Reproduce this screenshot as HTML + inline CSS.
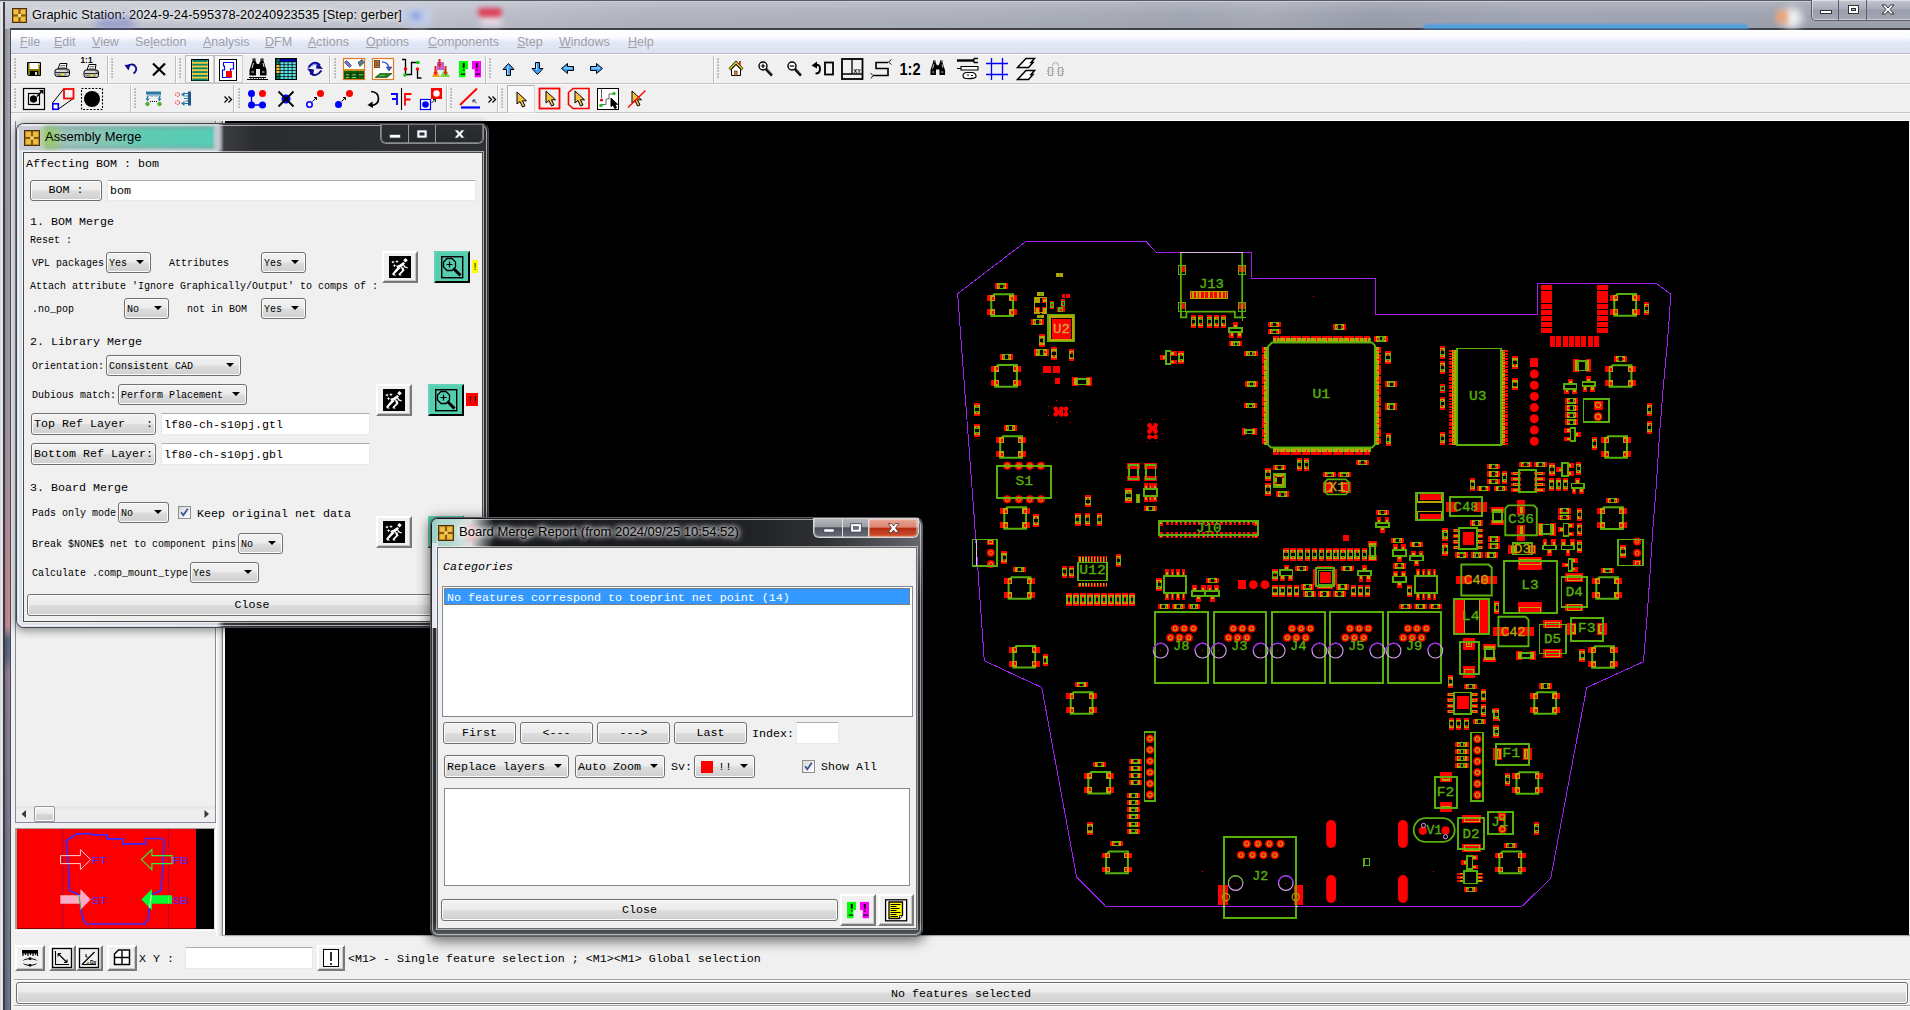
<!DOCTYPE html>
<html><head><meta charset="utf-8"><title>Graphic Station</title>
<style>
*{box-sizing:content-box;margin:0;padding:0}
html,body{width:1910px;height:1010px;overflow:hidden;background:#f0f0f0;font-family:"Liberation Mono",monospace;}
body{position:relative}
.t{position:absolute;white-space:pre;line-height:16px;height:16px;color:#000}
.m{font-family:"Liberation Mono",monospace;font-size:11.667px}
.s{font-family:"Liberation Mono",monospace;font-size:10px}
.ss{font-family:"Liberation Sans",sans-serif;font-size:12px}
.btn{border:1px solid #707070;border-radius:3px;background:linear-gradient(#f2f2f2 0%,#ebebeb 48%,#dddddd 52%,#cfcfcf 100%);box-shadow:inset 0 0 0 1px #fcfcfc;overflow:hidden}
.inp{border:1px solid #e3e9ef;border-top-color:#abadb3;background:#fff;border-radius:1px}
.chk{border:1px solid #8e8f8f;background:linear-gradient(135deg,#d7d7d7,#fff)}
.arr{position:absolute;right:6px;width:0;height:0;border-left:4px solid transparent;border-right:4px solid transparent;border-top:4px solid #000}
.raised{border:2px solid;border-color:#fff #7a7a7a #7a7a7a #fff;box-shadow:inset -1px -1px 0 #c8c8c8}
.abs{position:absolute}
</style></head>
<body>
<div class="" style="position:absolute;left:225px;top:121px;width:1684px;height:814px;background:#000"></div>
<svg class="abs" style="left:225px;top:121px" width="1684" height="814" viewBox="225 121 1684 814" font-family="Liberation Mono,monospace" shape-rendering="crispEdges"><polygon shape-rendering="crispEdges" points="1026.3,241.2 1145.8,241.2 1156.4,252.6 1251.7,252.6 1251.7,278.2 1375.6,278.2 1375.6,314.6 1537.5,314.6 1537.5,283.4 1656.3,283.4 1670.7,294.1 1669.5,314.9 1667.3,343.5 1663.6,383 1659.2,438.7 1656.3,485.6 1652.6,532 1650.4,568.6 1646.8,620 1643.5,661.7 1586.7,687.6 1571,770 1550.7,878.5 1521.9,906.4 1105.7,906.4 1076.6,877 1041.8,687.5 984.3,660.8 973.5,507.3 962.5,360 958.2,301 957.5,293.8" fill="none" stroke="#a020f0" stroke-width="1"/><rect x="987" y="295.3" width="8" height="5.6" fill="#ff0000"/><rect x="987" y="309.3" width="8" height="5.6" fill="#ff0000"/><rect x="1009.4" y="295.3" width="8" height="5.6" fill="#ff0000"/><rect x="1009.4" y="309.3" width="8" height="5.6" fill="#ff0000"/><path shape-rendering="geometricPrecision" d="M991.3 297.3 L994.3 294.3 H1013.1 V315.9 H991.3 Z" fill="none" stroke="#58b00a" stroke-width="2"/><rect x="990.2" y="295.3" width="4.8" height="5.6" fill="#b8a400"/><rect x="991.9" y="296.6" width="2" height="3" fill="#ff0000"/><rect x="990.2" y="309.3" width="4.8" height="5.6" fill="#b8a400"/><rect x="991.9" y="310.6" width="2" height="3" fill="#ff0000"/><rect x="1009.4" y="295.3" width="4.8" height="5.6" fill="#b8a400"/><rect x="1010.5" y="296.6" width="2" height="3" fill="#ff0000"/><rect x="1009.4" y="309.3" width="4.8" height="5.6" fill="#b8a400"/><rect x="1010.5" y="310.6" width="2" height="3" fill="#ff0000"/><rect x="995" y="283.4" width="12.8" height="5.6" fill="#ff0000"/><rect x="997" y="283.4" width="8.8" height="5.6" fill="#b8a400"/><rect x="998.8" y="283.4" width="5.2" height="5.6" fill="#58b00a"/><rect x="1000.1" y="284.6" width="2.6" height="3.2" fill="#000"/><rect x="998.2" y="285.2" width="1.2" height="2" fill="#ff0000"/><rect x="1003.4" y="285.2" width="1.2" height="2" fill="#ff0000"/><rect x="1056" y="273" width="7" height="4" fill="#b8a400"/><rect x="1059" y="273" width="1.2" height="4" fill="#58b00a"/><rect x="1037" y="292.2" width="7" height="3.5" fill="#b8a400"/><rect x="1039.5" y="292.2" width="2" height="3.5" fill="#58b00a"/><rect x="1034" y="297" width="13" height="16.6" fill="#b8a400"/><rect x="1034.5" y="297.5" width="5" height="5.8" fill="#b8a400"/><rect x="1042.4" y="297.5" width="4.4" height="5.8" fill="#ff0000"/><rect x="1043.4" y="298.5" width="2.4" height="3.8" fill="#b8a400"/><rect x="1034.5" y="307.3" width="5" height="5.7" fill="#ff0000"/><rect x="1035.5" y="308.3" width="3" height="3.7" fill="#b8a400"/><rect x="1042.4" y="307.3" width="4.4" height="5.7" fill="#ff0000"/><rect x="1043.4" y="308.3" width="2.4" height="3.7" fill="#b8a400"/><rect x="1039.5" y="297" width="2.9" height="16.6" fill="#000"/><rect x="1034" y="303.3" width="13" height="4" fill="#000"/><rect x="1034.8" y="297.8" width="11.4" height="15" fill="none" stroke="#b8a400" stroke-width="1.2"/><rect x="1036.5" y="314.5" width="7.2" height="3.2" fill="#b8a400"/><rect x="1039" y="314.5" width="2" height="3.2" fill="#58b00a"/><rect x="1031" y="319" width="12.7" height="6" fill="#ff0000"/><rect x="1033" y="319" width="8.7" height="6" fill="#b8a400"/><rect x="1034.8" y="319" width="5.2" height="6" fill="#58b00a"/><rect x="1036" y="320.2" width="2.6" height="3.6" fill="#000"/><rect x="1034.2" y="321" width="1.2" height="2" fill="#ff0000"/><rect x="1039.3" y="321" width="1.2" height="2" fill="#ff0000"/><rect x="1061.9" y="294" width="3.1" height="3.9" fill="#ff0000"/><rect x="1065.9" y="294" width="4.1" height="3.9" fill="#ff0000"/><rect x="1050" y="301" width="3.7" height="8" fill="#ff0000"/><rect x="1050" y="303" width="3.7" height="4" fill="#b8a400"/><rect x="1050" y="302.4" width="3.7" height="5.2" fill="#58b00a"/><rect x="1051.2" y="303.7" width="1.3" height="2.6" fill="#000"/><rect x="1050.8" y="304.2" width="2" height="1.2" fill="#ff0000"/><rect x="1050.8" y="304.6" width="2" height="1.2" fill="#ff0000"/><rect x="1061.3" y="299.4" width="3.7" height="7.6" fill="#ff0000"/><rect x="1061.3" y="301.4" width="3.7" height="3.6" fill="#b8a400"/><rect x="1061.3" y="300.6" width="3.7" height="5.2" fill="#58b00a"/><rect x="1062.5" y="301.9" width="1.3" height="2.6" fill="#000"/><rect x="1062.2" y="302.6" width="2" height="1.2" fill="#ff0000"/><rect x="1062.2" y="302.6" width="2" height="1.2" fill="#ff0000"/><rect x="1057" y="307.3" width="7.7" height="4.4" fill="#ff0000"/><rect x="1059" y="307.3" width="3.7" height="4.4" fill="#b8a400"/><rect x="1058.2" y="307.3" width="5.2" height="4.4" fill="#58b00a"/><rect x="1059.5" y="308.5" width="2.6" height="2" fill="#000"/><rect x="1060.2" y="308.5" width="1.2" height="2" fill="#ff0000"/><rect x="1060.3" y="308.5" width="1.2" height="2" fill="#ff0000"/><rect x="1047.2" y="314.2" width="27.6" height="27.7" fill="#b8a400"/><rect x="1049.6" y="316.6" width="22.8" height="22.9" fill="#000"/><rect x="1051.6" y="318.6" width="19.7" height="20.1" fill="#ff0000"/><rect x="1050.6" y="317.6" width="21.6" height="22" fill="none" stroke="#b8a400" stroke-width="1"/><rect x="1047.8" y="314.8" width="26.4" height="26.5" fill="none" stroke="#58b00a" stroke-width="1.4"/><text x="1053" y="332.5" font-size="13" fill="#d8a040" stroke="#d8a040" stroke-width="0.35" textLength="17" lengthAdjust="spacingAndGlyphs">U2</text><rect x="1039" y="334.3" width="5.5" height="12.3" fill="#ff0000"/><rect x="1039" y="336.3" width="5.5" height="8.3" fill="#b8a400"/><rect x="1039" y="337.9" width="5.5" height="5.2" fill="#58b00a"/><rect x="1040.2" y="339.2" width="3.1" height="2.6" fill="#000"/><rect x="1040.8" y="337.5" width="2" height="1.2" fill="#ff0000"/><rect x="1040.8" y="342.2" width="2" height="1.2" fill="#ff0000"/><rect x="1034" y="348.8" width="14.7" height="7.2" fill="#ff0000"/><rect x="1036" y="348.8" width="10.7" height="7.2" fill="#b8a400"/><rect x="1038.8" y="348.8" width="5.2" height="7.2" fill="#58b00a"/><rect x="1040" y="350" width="2.6" height="4.8" fill="#000"/><rect x="1037.2" y="351.4" width="1.2" height="2" fill="#ff0000"/><rect x="1044.3" y="351.4" width="1.2" height="2" fill="#ff0000"/><rect x="1051" y="347.3" width="5.9" height="12.4" fill="#ff0000"/><rect x="1051" y="349.3" width="5.9" height="8.4" fill="#b8a400"/><rect x="1051" y="350.9" width="5.9" height="5.2" fill="#58b00a"/><rect x="1052.2" y="352.2" width="3.5" height="2.6" fill="#000"/><rect x="1053" y="350.5" width="2" height="1.2" fill="#ff0000"/><rect x="1053" y="355.3" width="2" height="1.2" fill="#ff0000"/><rect x="1068.8" y="349.2" width="5.4" height="12.2" fill="#ff0000"/><rect x="1068.8" y="351.2" width="5.4" height="8.2" fill="#b8a400"/><rect x="1068.8" y="352.7" width="5.4" height="5.2" fill="#58b00a"/><rect x="1070" y="354" width="3" height="2.6" fill="#000"/><rect x="1070.5" y="352.4" width="2" height="1.2" fill="#ff0000"/><rect x="1070.5" y="357" width="2" height="1.2" fill="#ff0000"/><rect x="1000" y="353.8" width="12.9" height="5.9" fill="#ff0000"/><rect x="1002" y="353.8" width="8.9" height="5.9" fill="#b8a400"/><rect x="1003.9" y="353.8" width="5.2" height="5.9" fill="#58b00a"/><rect x="1005.2" y="355" width="2.6" height="3.5" fill="#000"/><rect x="1003.2" y="355.8" width="1.2" height="2" fill="#ff0000"/><rect x="1008.5" y="355.8" width="1.2" height="2" fill="#ff0000"/><rect x="1160.2" y="355.3" width="6" height="4.6" fill="#ff0000"/><rect x="1162.8" y="356.4" width="2.9" height="2.4" fill="#b8a400"/><rect x="1170.5" y="351.1" width="6" height="4.6" fill="#ff0000"/><rect x="1171" y="352.2" width="3.1" height="2.4" fill="#b8a400"/><rect x="1170.5" y="359.8" width="6" height="4.6" fill="#ff0000"/><rect x="1171" y="360.9" width="3.1" height="2.4" fill="#b8a400"/><rect x="1166.1" y="350.9" width="4.5" height="12.9" fill="none" stroke="#58b00a" stroke-width="1.7"/><rect x="1178.4" y="351.1" width="5.6" height="12.9" fill="#ff0000"/><rect x="1178.4" y="353.1" width="5.6" height="8.9" fill="#b8a400"/><rect x="1178.4" y="354.9" width="5.6" height="5.2" fill="#58b00a"/><rect x="1179.6" y="356.2" width="3.2" height="2.6" fill="#000"/><rect x="1180.2" y="354.3" width="2" height="1.2" fill="#ff0000"/><rect x="1180.2" y="359.6" width="2" height="1.2" fill="#ff0000"/><rect x="1179.6" y="266.3" width="4.9" height="5.5" fill="#ff0000"/><rect x="1178.9" y="265.8" width="6.3" height="8.3" fill="none" stroke="#58b00a" stroke-width="1"/><rect x="1179.6" y="303.4" width="4.9" height="5.8" fill="#ff0000"/><rect x="1178.9" y="302.9" width="6.3" height="8.6" fill="none" stroke="#58b00a" stroke-width="1"/><rect x="1239" y="266.3" width="5.6" height="5.5" fill="#ff0000"/><rect x="1238.3" y="265.8" width="7" height="8.3" fill="none" stroke="#58b00a" stroke-width="1"/><rect x="1239" y="303.4" width="5.6" height="5.8" fill="#ff0000"/><rect x="1238.3" y="302.9" width="7" height="8.6" fill="none" stroke="#58b00a" stroke-width="1"/><path shape-rendering="geometricPrecision" d="M1180.9 252.9 V317.4 H1186.4 V311.7 H1234.8 V317.4 H1242.2 V252.9" fill="none" stroke="#58b00a" stroke-width="1.8"/><rect x="1180" y="252" width="63" height="1.4" fill="#e8b0e8"/><path d="M1242.2 317.4 V321 M1242.2 317.4 H1246" fill="none" stroke="#58b00a" stroke-width="1"/><text x="1198.9" y="288" font-size="12.5" fill="#58b00a" stroke="#58b00a" stroke-width="0.35" textLength="25" lengthAdjust="spacingAndGlyphs">J13</text><rect x="1190.1" y="291.2" width="37.8" height="7.6" fill="#ff0000"/><rect x="1192.4" y="291.2" width="1.2" height="7.6" fill="#b8a400"/><rect x="1196.4" y="291.2" width="1.2" height="7.6" fill="#b8a400"/><rect x="1199.4" y="291.2" width="1.2" height="7.6" fill="#b8a400"/><rect x="1203.9" y="291.2" width="1.2" height="7.6" fill="#b8a400"/><rect x="1208.4" y="291.2" width="1.2" height="7.6" fill="#b8a400"/><rect x="1212.9" y="291.2" width="1.2" height="7.6" fill="#b8a400"/><rect x="1217.4" y="291.2" width="1.2" height="7.6" fill="#b8a400"/><rect x="1221.4" y="291.2" width="1.2" height="7.6" fill="#b8a400"/><rect x="1224.7" y="291.2" width="1.2" height="7.6" fill="#b8a400"/><rect x="1190.4" y="291.6" width="37.2" height="6.8" fill="none" stroke="#b8a400" stroke-width="1"/><rect x="1190.8" y="314.9" width="5.2" height="12.9" fill="#ff0000"/><rect x="1190.8" y="316.9" width="5.2" height="8.9" fill="#b8a400"/><rect x="1190.8" y="318.8" width="5.2" height="5.2" fill="#58b00a"/><rect x="1192" y="320.1" width="2.8" height="2.6" fill="#000"/><rect x="1192.4" y="318.1" width="2" height="1.2" fill="#ff0000"/><rect x="1192.4" y="323.4" width="2" height="1.2" fill="#ff0000"/><rect x="1198.2" y="314.9" width="4.8" height="12.9" fill="#ff0000"/><rect x="1198.2" y="316.9" width="4.8" height="8.9" fill="#b8a400"/><rect x="1198.2" y="318.8" width="4.8" height="5.2" fill="#58b00a"/><rect x="1199.4" y="320.1" width="2.4" height="2.6" fill="#000"/><rect x="1199.6" y="318.1" width="2" height="1.2" fill="#ff0000"/><rect x="1199.6" y="323.4" width="2" height="1.2" fill="#ff0000"/><rect x="1207" y="314.9" width="4.8" height="12.9" fill="#ff0000"/><rect x="1207" y="316.9" width="4.8" height="8.9" fill="#b8a400"/><rect x="1207" y="318.8" width="4.8" height="5.2" fill="#58b00a"/><rect x="1208.2" y="320.1" width="2.4" height="2.6" fill="#000"/><rect x="1208.4" y="318.1" width="2" height="1.2" fill="#ff0000"/><rect x="1208.4" y="323.4" width="2" height="1.2" fill="#ff0000"/><rect x="1214" y="314.9" width="5" height="12.9" fill="#ff0000"/><rect x="1214" y="316.9" width="5" height="8.9" fill="#b8a400"/><rect x="1214" y="318.8" width="5" height="5.2" fill="#58b00a"/><rect x="1215.2" y="320.1" width="2.6" height="2.6" fill="#000"/><rect x="1215.5" y="318.1" width="2" height="1.2" fill="#ff0000"/><rect x="1215.5" y="323.4" width="2" height="1.2" fill="#ff0000"/><rect x="1221.2" y="314.9" width="4.8" height="12.9" fill="#ff0000"/><rect x="1221.2" y="316.9" width="4.8" height="8.9" fill="#b8a400"/><rect x="1221.2" y="318.8" width="4.8" height="5.2" fill="#58b00a"/><rect x="1222.4" y="320.1" width="2.4" height="2.6" fill="#000"/><rect x="1222.6" y="318.1" width="2" height="1.2" fill="#ff0000"/><rect x="1222.6" y="323.4" width="2" height="1.2" fill="#ff0000"/><rect x="1233.2" y="322.2" width="4.6" height="6.2" fill="#ff0000"/><rect x="1234.3" y="325" width="2.4" height="2.9" fill="#b8a400"/><rect x="1229.4" y="332.2" width="4.6" height="6.2" fill="#ff0000"/><rect x="1230.5" y="332.7" width="2.4" height="3.1" fill="#b8a400"/><rect x="1237.3" y="332.2" width="4.6" height="6.2" fill="#ff0000"/><rect x="1238.4" y="332.7" width="2.4" height="3.1" fill="#b8a400"/><rect x="1229.1" y="328.3" width="12.9" height="4" fill="none" stroke="#58b00a" stroke-width="1.7"/><rect x="1229.4" y="341.3" width="12.8" height="4.7" fill="#ff0000"/><rect x="1231.4" y="341.3" width="8.8" height="4.7" fill="#b8a400"/><rect x="1233.2" y="341.3" width="5.2" height="4.7" fill="#58b00a"/><rect x="1234.5" y="342.5" width="2.6" height="2.3" fill="#000"/><rect x="1232.6" y="342.6" width="1.2" height="2" fill="#ff0000"/><rect x="1237.8" y="342.6" width="1.2" height="2" fill="#ff0000"/><rect x="1268.1" y="322.2" width="12.6" height="4.8" fill="#ff0000"/><rect x="1270.1" y="322.2" width="8.6" height="4.8" fill="#b8a400"/><rect x="1271.8" y="322.2" width="5.2" height="4.8" fill="#58b00a"/><rect x="1273.1" y="323.4" width="2.6" height="2.4" fill="#000"/><rect x="1271.3" y="323.6" width="1.2" height="2" fill="#ff0000"/><rect x="1276.3" y="323.6" width="1.2" height="2" fill="#ff0000"/><rect x="1268.1" y="329.3" width="12.6" height="4.7" fill="#ff0000"/><rect x="1270.1" y="329.3" width="8.6" height="4.7" fill="#b8a400"/><rect x="1271.8" y="329.3" width="5.2" height="4.7" fill="#58b00a"/><rect x="1273.1" y="330.5" width="2.6" height="2.3" fill="#000"/><rect x="1271.3" y="330.6" width="1.2" height="2" fill="#ff0000"/><rect x="1276.3" y="330.6" width="1.2" height="2" fill="#ff0000"/><rect x="1333" y="324" width="12.8" height="5.9" fill="#ff0000"/><rect x="1335" y="324" width="8.8" height="5.9" fill="#b8a400"/><rect x="1336.8" y="324" width="5.2" height="5.9" fill="#58b00a"/><rect x="1338.1" y="325.2" width="2.6" height="3.5" fill="#000"/><rect x="1336.2" y="325.9" width="1.2" height="2" fill="#ff0000"/><rect x="1341.4" y="325.9" width="1.2" height="2" fill="#ff0000"/><rect x="1374.1" y="336.2" width="13.9" height="5.4" fill="#ff0000"/><rect x="1376.1" y="336.2" width="9.9" height="5.4" fill="#b8a400"/><rect x="1378.5" y="336.2" width="5.2" height="5.4" fill="#58b00a"/><rect x="1379.8" y="337.4" width="2.6" height="3" fill="#000"/><rect x="1377.3" y="337.9" width="1.2" height="2" fill="#ff0000"/><rect x="1383.6" y="337.9" width="1.2" height="2" fill="#ff0000"/><rect x="1244.4" y="351.1" width="13.4" height="5" fill="#ff0000"/><rect x="1246.4" y="351.1" width="9.4" height="5" fill="#b8a400"/><rect x="1248.5" y="351.1" width="5.2" height="5" fill="#58b00a"/><rect x="1249.8" y="352.3" width="2.6" height="2.6" fill="#000"/><rect x="1247.6" y="352.6" width="1.2" height="2" fill="#ff0000"/><rect x="1253.4" y="352.6" width="1.2" height="2" fill="#ff0000"/><rect x="1385.1" y="351.1" width="5.9" height="12.9" fill="#ff0000"/><rect x="1385.1" y="353.1" width="5.9" height="8.9" fill="#b8a400"/><rect x="1385.1" y="354.9" width="5.9" height="5.2" fill="#58b00a"/><rect x="1386.3" y="356.2" width="3.5" height="2.6" fill="#000"/><rect x="1387" y="354.3" width="2" height="1.2" fill="#ff0000"/><rect x="1387" y="359.6" width="2" height="1.2" fill="#ff0000"/><rect x="1312.8" y="296.1" width="1" height="1" fill="#ff0000"/><rect x="1245" y="381.4" width="13" height="5.2" fill="#ff0000"/><rect x="1247" y="381.4" width="9" height="5.2" fill="#b8a400"/><rect x="1248.9" y="381.4" width="5.2" height="5.2" fill="#58b00a"/><rect x="1250.2" y="382.6" width="2.6" height="2.8" fill="#000"/><rect x="1248.2" y="383" width="1.2" height="2" fill="#ff0000"/><rect x="1253.6" y="383" width="1.2" height="2" fill="#ff0000"/><rect x="1244" y="403.3" width="13" height="4.9" fill="#ff0000"/><rect x="1246" y="403.3" width="9" height="4.9" fill="#b8a400"/><rect x="1247.9" y="403.3" width="5.2" height="4.9" fill="#58b00a"/><rect x="1249.2" y="404.5" width="2.6" height="2.5" fill="#000"/><rect x="1247.2" y="404.8" width="1.2" height="2" fill="#ff0000"/><rect x="1252.6" y="404.8" width="1.2" height="2" fill="#ff0000"/><rect x="1242" y="428" width="14.7" height="7" fill="#ff0000"/><rect x="1243.5" y="429" width="2.9" height="5" fill="#b8a400"/><rect x="1252.3" y="429" width="2.9" height="5" fill="#b8a400"/><rect x="1246.4" y="428" width="5.9" height="7" fill="#000"/><rect x="1246.1" y="429.7" width="6.4" height="3.6" fill="none" stroke="#58b00a" stroke-width="1.6"/><rect x="1385" y="381.4" width="12.3" height="6" fill="#ff0000"/><rect x="1387" y="381.4" width="8.3" height="6" fill="#b8a400"/><rect x="1388.6" y="381.4" width="5.2" height="6" fill="#58b00a"/><rect x="1389.9" y="382.6" width="2.6" height="3.6" fill="#000"/><rect x="1388.2" y="383.4" width="1.2" height="2" fill="#ff0000"/><rect x="1392.9" y="383.4" width="1.2" height="2" fill="#ff0000"/><rect x="1385" y="403.3" width="12.3" height="6.4" fill="#ff0000"/><rect x="1387" y="403.3" width="8.3" height="6.4" fill="#b8a400"/><rect x="1388.6" y="403.3" width="5.2" height="6.4" fill="#58b00a"/><rect x="1389.9" y="404.5" width="2.6" height="4" fill="#000"/><rect x="1388.2" y="405.5" width="1.2" height="2" fill="#ff0000"/><rect x="1392.9" y="405.5" width="1.2" height="2" fill="#ff0000"/><rect x="1385.7" y="433.2" width="4.9" height="12.8" fill="#ff0000"/><rect x="1385.7" y="435.2" width="4.9" height="8.8" fill="#b8a400"/><rect x="1385.7" y="437" width="4.9" height="5.2" fill="#58b00a"/><rect x="1386.9" y="438.3" width="2.5" height="2.6" fill="#000"/><rect x="1387.2" y="436.4" width="2" height="1.2" fill="#ff0000"/><rect x="1387.2" y="441.6" width="2" height="1.2" fill="#ff0000"/><rect x="1273" y="336.2" width="6" height="2.1" fill="#ff0000"/><rect x="1273" y="338.3" width="6" height="4.3" fill="#b8a400"/><rect x="1275.5" y="338.3" width="1" height="2.3" fill="#ff0000"/><rect x="1273" y="452.4" width="6" height="2.2" fill="#ff0000"/><rect x="1273" y="447.6" width="6" height="4.8" fill="#b8a400"/><rect x="1275.5" y="450" width="1" height="2.4" fill="#ff0000"/><rect x="1279" y="338.3" width="1.2" height="4.3" fill="#58b00a"/><rect x="1279" y="447.6" width="1.2" height="4.8" fill="#58b00a"/><rect x="1261.6" y="347" width="2.2" height="6" fill="#ff0000"/><rect x="1263.8" y="347" width="4.2" height="6" fill="#b8a400"/><rect x="1263.8" y="349.5" width="2.4" height="1" fill="#ff0000"/><rect x="1379.2" y="347" width="2.2" height="6" fill="#ff0000"/><rect x="1375" y="347" width="4.2" height="6" fill="#b8a400"/><rect x="1376.8" y="349.5" width="2.4" height="1" fill="#ff0000"/><rect x="1263.8" y="353" width="4.2" height="1.2" fill="#58b00a"/><rect x="1375" y="353" width="4.2" height="1.2" fill="#58b00a"/><rect x="1280.2" y="336.2" width="9.8" height="2.1" fill="#ff0000"/><rect x="1280.2" y="338.3" width="9.8" height="4.3" fill="#b8a400"/><rect x="1284.6" y="338.3" width="1" height="2.3" fill="#ff0000"/><rect x="1280.2" y="452.4" width="9.8" height="2.2" fill="#ff0000"/><rect x="1280.2" y="447.6" width="9.8" height="4.8" fill="#b8a400"/><rect x="1284.6" y="450" width="1" height="2.4" fill="#ff0000"/><rect x="1290" y="338.3" width="1.2" height="4.3" fill="#58b00a"/><rect x="1290" y="447.6" width="1.2" height="4.8" fill="#58b00a"/><rect x="1261.6" y="354.2" width="2.2" height="9.8" fill="#ff0000"/><rect x="1263.8" y="354.2" width="4.2" height="9.8" fill="#b8a400"/><rect x="1263.8" y="358.6" width="2.4" height="1" fill="#ff0000"/><rect x="1379.2" y="354.2" width="2.2" height="9.8" fill="#ff0000"/><rect x="1375" y="354.2" width="4.2" height="9.8" fill="#b8a400"/><rect x="1376.8" y="358.6" width="2.4" height="1" fill="#ff0000"/><rect x="1263.8" y="364" width="4.2" height="1.2" fill="#58b00a"/><rect x="1375" y="364" width="4.2" height="1.2" fill="#58b00a"/><rect x="1291.2" y="336.2" width="9.8" height="2.1" fill="#ff0000"/><rect x="1291.2" y="338.3" width="9.8" height="4.3" fill="#b8a400"/><rect x="1295.6" y="338.3" width="1" height="2.3" fill="#ff0000"/><rect x="1291.2" y="452.4" width="9.8" height="2.2" fill="#ff0000"/><rect x="1291.2" y="447.6" width="9.8" height="4.8" fill="#b8a400"/><rect x="1295.6" y="450" width="1" height="2.4" fill="#ff0000"/><rect x="1301" y="338.3" width="1.2" height="4.3" fill="#58b00a"/><rect x="1301" y="447.6" width="1.2" height="4.8" fill="#58b00a"/><rect x="1261.6" y="365.2" width="2.2" height="9.8" fill="#ff0000"/><rect x="1263.8" y="365.2" width="4.2" height="9.8" fill="#b8a400"/><rect x="1263.8" y="369.6" width="2.4" height="1" fill="#ff0000"/><rect x="1379.2" y="365.2" width="2.2" height="9.8" fill="#ff0000"/><rect x="1375" y="365.2" width="4.2" height="9.8" fill="#b8a400"/><rect x="1376.8" y="369.6" width="2.4" height="1" fill="#ff0000"/><rect x="1263.8" y="375" width="4.2" height="1.2" fill="#58b00a"/><rect x="1375" y="375" width="4.2" height="1.2" fill="#58b00a"/><rect x="1302.2" y="336.2" width="7.8" height="2.1" fill="#ff0000"/><rect x="1302.2" y="338.3" width="7.8" height="4.3" fill="#b8a400"/><rect x="1305.6" y="338.3" width="1" height="2.3" fill="#ff0000"/><rect x="1302.2" y="452.4" width="7.8" height="2.2" fill="#ff0000"/><rect x="1302.2" y="447.6" width="7.8" height="4.8" fill="#b8a400"/><rect x="1305.6" y="450" width="1" height="2.4" fill="#ff0000"/><rect x="1310" y="338.3" width="1.2" height="4.3" fill="#58b00a"/><rect x="1310" y="447.6" width="1.2" height="4.8" fill="#58b00a"/><rect x="1261.6" y="376.2" width="2.2" height="7.8" fill="#ff0000"/><rect x="1263.8" y="376.2" width="4.2" height="7.8" fill="#b8a400"/><rect x="1263.8" y="379.6" width="2.4" height="1" fill="#ff0000"/><rect x="1379.2" y="376.2" width="2.2" height="7.8" fill="#ff0000"/><rect x="1375" y="376.2" width="4.2" height="7.8" fill="#b8a400"/><rect x="1376.8" y="379.6" width="2.4" height="1" fill="#ff0000"/><rect x="1263.8" y="384" width="4.2" height="1.2" fill="#58b00a"/><rect x="1375" y="384" width="4.2" height="1.2" fill="#58b00a"/><rect x="1311.2" y="336.2" width="9.8" height="2.1" fill="#ff0000"/><rect x="1311.2" y="338.3" width="9.8" height="4.3" fill="#b8a400"/><rect x="1315.6" y="338.3" width="1" height="2.3" fill="#ff0000"/><rect x="1311.2" y="452.4" width="9.8" height="2.2" fill="#ff0000"/><rect x="1311.2" y="447.6" width="9.8" height="4.8" fill="#b8a400"/><rect x="1315.6" y="450" width="1" height="2.4" fill="#ff0000"/><rect x="1321" y="338.3" width="1.2" height="4.3" fill="#58b00a"/><rect x="1321" y="447.6" width="1.2" height="4.8" fill="#58b00a"/><rect x="1261.6" y="385.2" width="2.2" height="9.8" fill="#ff0000"/><rect x="1263.8" y="385.2" width="4.2" height="9.8" fill="#b8a400"/><rect x="1263.8" y="389.6" width="2.4" height="1" fill="#ff0000"/><rect x="1379.2" y="385.2" width="2.2" height="9.8" fill="#ff0000"/><rect x="1375" y="385.2" width="4.2" height="9.8" fill="#b8a400"/><rect x="1376.8" y="389.6" width="2.4" height="1" fill="#ff0000"/><rect x="1263.8" y="395" width="4.2" height="1.2" fill="#58b00a"/><rect x="1375" y="395" width="4.2" height="1.2" fill="#58b00a"/><rect x="1322.2" y="336.2" width="9.8" height="2.1" fill="#ff0000"/><rect x="1322.2" y="338.3" width="9.8" height="4.3" fill="#b8a400"/><rect x="1326.6" y="338.3" width="1" height="2.3" fill="#ff0000"/><rect x="1322.2" y="452.4" width="9.8" height="2.2" fill="#ff0000"/><rect x="1322.2" y="447.6" width="9.8" height="4.8" fill="#b8a400"/><rect x="1326.6" y="450" width="1" height="2.4" fill="#ff0000"/><rect x="1332" y="338.3" width="1.2" height="4.3" fill="#58b00a"/><rect x="1332" y="447.6" width="1.2" height="4.8" fill="#58b00a"/><rect x="1261.6" y="396.2" width="2.2" height="9.8" fill="#ff0000"/><rect x="1263.8" y="396.2" width="4.2" height="9.8" fill="#b8a400"/><rect x="1263.8" y="400.6" width="2.4" height="1" fill="#ff0000"/><rect x="1379.2" y="396.2" width="2.2" height="9.8" fill="#ff0000"/><rect x="1375" y="396.2" width="4.2" height="9.8" fill="#b8a400"/><rect x="1376.8" y="400.6" width="2.4" height="1" fill="#ff0000"/><rect x="1263.8" y="406" width="4.2" height="1.2" fill="#58b00a"/><rect x="1375" y="406" width="4.2" height="1.2" fill="#58b00a"/><rect x="1333.2" y="336.2" width="9.8" height="2.1" fill="#ff0000"/><rect x="1333.2" y="338.3" width="9.8" height="4.3" fill="#b8a400"/><rect x="1337.6" y="338.3" width="1" height="2.3" fill="#ff0000"/><rect x="1333.2" y="452.4" width="9.8" height="2.2" fill="#ff0000"/><rect x="1333.2" y="447.6" width="9.8" height="4.8" fill="#b8a400"/><rect x="1337.6" y="450" width="1" height="2.4" fill="#ff0000"/><rect x="1343" y="338.3" width="1.2" height="4.3" fill="#58b00a"/><rect x="1343" y="447.6" width="1.2" height="4.8" fill="#58b00a"/><rect x="1261.6" y="407.2" width="2.2" height="9.8" fill="#ff0000"/><rect x="1263.8" y="407.2" width="4.2" height="9.8" fill="#b8a400"/><rect x="1263.8" y="411.6" width="2.4" height="1" fill="#ff0000"/><rect x="1379.2" y="407.2" width="2.2" height="9.8" fill="#ff0000"/><rect x="1375" y="407.2" width="4.2" height="9.8" fill="#b8a400"/><rect x="1376.8" y="411.6" width="2.4" height="1" fill="#ff0000"/><rect x="1263.8" y="417" width="4.2" height="1.2" fill="#58b00a"/><rect x="1375" y="417" width="4.2" height="1.2" fill="#58b00a"/><rect x="1344.2" y="336.2" width="9.8" height="2.1" fill="#ff0000"/><rect x="1344.2" y="338.3" width="9.8" height="4.3" fill="#b8a400"/><rect x="1348.6" y="338.3" width="1" height="2.3" fill="#ff0000"/><rect x="1344.2" y="452.4" width="9.8" height="2.2" fill="#ff0000"/><rect x="1344.2" y="447.6" width="9.8" height="4.8" fill="#b8a400"/><rect x="1348.6" y="450" width="1" height="2.4" fill="#ff0000"/><rect x="1354" y="338.3" width="1.2" height="4.3" fill="#58b00a"/><rect x="1354" y="447.6" width="1.2" height="4.8" fill="#58b00a"/><rect x="1261.6" y="418.2" width="2.2" height="9.8" fill="#ff0000"/><rect x="1263.8" y="418.2" width="4.2" height="9.8" fill="#b8a400"/><rect x="1263.8" y="422.6" width="2.4" height="1" fill="#ff0000"/><rect x="1379.2" y="418.2" width="2.2" height="9.8" fill="#ff0000"/><rect x="1375" y="418.2" width="4.2" height="9.8" fill="#b8a400"/><rect x="1376.8" y="422.6" width="2.4" height="1" fill="#ff0000"/><rect x="1263.8" y="428" width="4.2" height="1.2" fill="#58b00a"/><rect x="1375" y="428" width="4.2" height="1.2" fill="#58b00a"/><rect x="1355.2" y="336.2" width="7.8" height="2.1" fill="#ff0000"/><rect x="1355.2" y="338.3" width="7.8" height="4.3" fill="#b8a400"/><rect x="1358.6" y="338.3" width="1" height="2.3" fill="#ff0000"/><rect x="1355.2" y="452.4" width="7.8" height="2.2" fill="#ff0000"/><rect x="1355.2" y="447.6" width="7.8" height="4.8" fill="#b8a400"/><rect x="1358.6" y="450" width="1" height="2.4" fill="#ff0000"/><rect x="1363" y="338.3" width="1.2" height="4.3" fill="#58b00a"/><rect x="1363" y="447.6" width="1.2" height="4.8" fill="#58b00a"/><rect x="1261.6" y="429.2" width="2.2" height="7.8" fill="#ff0000"/><rect x="1263.8" y="429.2" width="4.2" height="7.8" fill="#b8a400"/><rect x="1263.8" y="432.6" width="2.4" height="1" fill="#ff0000"/><rect x="1379.2" y="429.2" width="2.2" height="7.8" fill="#ff0000"/><rect x="1375" y="429.2" width="4.2" height="7.8" fill="#b8a400"/><rect x="1376.8" y="432.6" width="2.4" height="1" fill="#ff0000"/><rect x="1263.8" y="437" width="4.2" height="1.2" fill="#58b00a"/><rect x="1375" y="437" width="4.2" height="1.2" fill="#58b00a"/><rect x="1364.2" y="336.2" width="5.6" height="2.1" fill="#ff0000"/><rect x="1364.2" y="338.3" width="5.6" height="4.3" fill="#b8a400"/><rect x="1366.5" y="338.3" width="1" height="2.3" fill="#ff0000"/><rect x="1364.2" y="452.4" width="5.6" height="2.2" fill="#ff0000"/><rect x="1364.2" y="447.6" width="5.6" height="4.8" fill="#b8a400"/><rect x="1366.5" y="450" width="1" height="2.4" fill="#ff0000"/><rect x="1369.8" y="338.3" width="1.2" height="4.3" fill="#58b00a"/><rect x="1369.8" y="447.6" width="1.2" height="4.8" fill="#58b00a"/><rect x="1261.6" y="438.2" width="2.2" height="5.6" fill="#ff0000"/><rect x="1263.8" y="438.2" width="4.2" height="5.6" fill="#b8a400"/><rect x="1263.8" y="440.5" width="2.4" height="1" fill="#ff0000"/><rect x="1379.2" y="438.2" width="2.2" height="5.6" fill="#ff0000"/><rect x="1375" y="438.2" width="4.2" height="5.6" fill="#b8a400"/><rect x="1376.8" y="440.5" width="2.4" height="1" fill="#ff0000"/><rect x="1263.8" y="443.8" width="4.2" height="1.2" fill="#58b00a"/><rect x="1375" y="443.8" width="4.2" height="1.2" fill="#58b00a"/><path shape-rendering="geometricPrecision" d="M1268 346.6 L1272 342.6 H1372 L1375 345.6 V444.6 L1372 447.6 H1271 L1268 444.6 Z" fill="none" stroke="#58b00a" stroke-width="2"/><text x="1312.5" y="398.3" font-size="12.5" fill="#58b00a" stroke="#58b00a" stroke-width="0.35" textLength="17.7" lengthAdjust="spacingAndGlyphs">U1</text><rect x="1297" y="458" width="5.3" height="12.8" fill="#ff0000"/><rect x="1297" y="460" width="5.3" height="8.8" fill="#b8a400"/><rect x="1297" y="461.8" width="5.3" height="5.2" fill="#58b00a"/><rect x="1298.2" y="463.1" width="2.9" height="2.6" fill="#000"/><rect x="1298.7" y="461.2" width="2" height="1.2" fill="#ff0000"/><rect x="1298.7" y="466.4" width="2" height="1.2" fill="#ff0000"/><rect x="1303.7" y="458" width="5.5" height="12.8" fill="#ff0000"/><rect x="1303.7" y="460" width="5.5" height="8.8" fill="#b8a400"/><rect x="1303.7" y="461.8" width="5.5" height="5.2" fill="#58b00a"/><rect x="1304.9" y="463.1" width="3.1" height="2.6" fill="#000"/><rect x="1305.5" y="461.2" width="2" height="1.2" fill="#ff0000"/><rect x="1305.5" y="466.4" width="2" height="1.2" fill="#ff0000"/><rect x="1356.1" y="460.1" width="12.7" height="4.8" fill="#ff0000"/><rect x="1358.1" y="460.1" width="8.7" height="4.8" fill="#b8a400"/><rect x="1359.8" y="460.1" width="5.2" height="4.8" fill="#58b00a"/><rect x="1361.1" y="461.3" width="2.6" height="2.4" fill="#000"/><rect x="1359.3" y="461.5" width="1.2" height="2" fill="#ff0000"/><rect x="1364.4" y="461.5" width="1.2" height="2" fill="#ff0000"/><rect x="1273.2" y="464.9" width="12.5" height="5.1" fill="#ff0000"/><rect x="1275.2" y="464.9" width="8.5" height="5.1" fill="#b8a400"/><rect x="1276.9" y="464.9" width="5.2" height="5.1" fill="#58b00a"/><rect x="1278.2" y="466.1" width="2.6" height="2.7" fill="#000"/><rect x="1276.4" y="466.4" width="1.2" height="2" fill="#ff0000"/><rect x="1281.3" y="466.4" width="1.2" height="2" fill="#ff0000"/><rect x="1265.2" y="468.1" width="5.8" height="12.9" fill="#ff0000"/><rect x="1265.2" y="470.1" width="5.8" height="8.9" fill="#b8a400"/><rect x="1265.2" y="471.9" width="5.8" height="5.2" fill="#58b00a"/><rect x="1266.4" y="473.2" width="3.4" height="2.6" fill="#000"/><rect x="1267.1" y="471.3" width="2" height="1.2" fill="#ff0000"/><rect x="1267.1" y="476.6" width="2" height="1.2" fill="#ff0000"/><rect x="1265.2" y="483.2" width="5.8" height="12.5" fill="#ff0000"/><rect x="1265.2" y="485.2" width="5.8" height="8.5" fill="#b8a400"/><rect x="1265.2" y="486.8" width="5.8" height="5.2" fill="#58b00a"/><rect x="1266.4" y="488.1" width="3.4" height="2.6" fill="#000"/><rect x="1267.1" y="486.4" width="2" height="1.2" fill="#ff0000"/><rect x="1267.1" y="491.3" width="2" height="1.2" fill="#ff0000"/><rect x="1273.2" y="473" width="12.5" height="14.6" fill="#b8a400"/><rect x="1276.8" y="476.5" width="5.6" height="7.7" fill="#000"/><rect x="1273.8" y="473.6" width="11.3" height="13.4" fill="none" stroke="#58b00a" stroke-width="1.4"/><rect x="1275" y="476" width="2" height="2" fill="#ff0000"/><rect x="1275" y="482" width="2" height="2" fill="#ff0000"/><rect x="1282" y="476" width="2" height="2" fill="#ff0000"/><rect x="1276.2" y="491.3" width="12.7" height="5.6" fill="#ff0000"/><rect x="1278.2" y="491.3" width="8.7" height="5.6" fill="#b8a400"/><rect x="1280" y="491.3" width="5.2" height="5.6" fill="#58b00a"/><rect x="1281.3" y="492.5" width="2.6" height="3.2" fill="#000"/><rect x="1279.4" y="493.1" width="1.2" height="2" fill="#ff0000"/><rect x="1284.5" y="493.1" width="1.2" height="2" fill="#ff0000"/><rect x="1323.1" y="472.3" width="12.7" height="4.6" fill="#ff0000"/><rect x="1325.1" y="472.3" width="8.7" height="4.6" fill="#b8a400"/><rect x="1326.8" y="472.3" width="5.2" height="4.6" fill="#58b00a"/><rect x="1328.1" y="473.5" width="2.6" height="2.2" fill="#000"/><rect x="1326.3" y="473.6" width="1.2" height="2" fill="#ff0000"/><rect x="1331.4" y="473.6" width="1.2" height="2" fill="#ff0000"/><rect x="1338.2" y="472.3" width="12.7" height="4.6" fill="#ff0000"/><rect x="1340.2" y="472.3" width="8.7" height="4.6" fill="#b8a400"/><rect x="1342" y="472.3" width="5.2" height="4.6" fill="#58b00a"/><rect x="1343.3" y="473.5" width="2.6" height="2.2" fill="#000"/><rect x="1341.4" y="473.6" width="1.2" height="2" fill="#ff0000"/><rect x="1346.5" y="473.6" width="1.2" height="2" fill="#ff0000"/><rect x="1323.1" y="482.2" width="9.5" height="10.6" fill="#ff0000"/><rect x="1341.4" y="482.2" width="9.5" height="10.6" fill="#ff0000"/><rect x="1325.5" y="483.4" width="6.1" height="8.2" fill="none" stroke="#b8a400" stroke-width="1.1"/><rect x="1342.4" y="483.4" width="6.1" height="8.2" fill="none" stroke="#b8a400" stroke-width="1.1"/><path shape-rendering="geometricPrecision" d="M1324.6 482.3 L1327.6 479.3 H1345.8 L1348.8 482.3 V491.5 L1345.8 494.5 H1327.6 L1324.6 491.5 Z" fill="none" stroke="#58b00a" stroke-width="1.7"/><text x="1328.5" y="491.3" font-size="12.5" fill="#c8a020" stroke="#c8a020" stroke-width="0.35" textLength="17" lengthAdjust="spacingAndGlyphs">X1</text><rect x="1540.9" y="285.1" width="11" height="5.3" fill="#ff0000"/><rect x="1596.9" y="285.1" width="11" height="5.3" fill="#ff0000"/><rect x="1550" y="335.9" width="5" height="11.3" fill="#ff0000"/><rect x="1540.9" y="291.2" width="11" height="5.3" fill="#ff0000"/><rect x="1596.9" y="291.2" width="11" height="5.3" fill="#ff0000"/><rect x="1556.3" y="335.9" width="5" height="11.3" fill="#ff0000"/><rect x="1540.9" y="297.4" width="11" height="5.3" fill="#ff0000"/><rect x="1596.9" y="297.4" width="11" height="5.3" fill="#ff0000"/><rect x="1562.5" y="335.9" width="5" height="11.3" fill="#ff0000"/><rect x="1540.9" y="303.5" width="11" height="5.3" fill="#ff0000"/><rect x="1596.9" y="303.5" width="11" height="5.3" fill="#ff0000"/><rect x="1568.8" y="335.9" width="5" height="11.3" fill="#ff0000"/><rect x="1540.9" y="309.6" width="11" height="5.3" fill="#ff0000"/><rect x="1596.9" y="309.6" width="11" height="5.3" fill="#ff0000"/><rect x="1575" y="335.9" width="5" height="11.3" fill="#ff0000"/><rect x="1540.9" y="315.8" width="11" height="5.3" fill="#ff0000"/><rect x="1596.9" y="315.8" width="11" height="5.3" fill="#ff0000"/><rect x="1581.3" y="335.9" width="5" height="11.3" fill="#ff0000"/><rect x="1540.9" y="321.9" width="11" height="5.3" fill="#ff0000"/><rect x="1596.9" y="321.9" width="11" height="5.3" fill="#ff0000"/><rect x="1587.6" y="335.9" width="5" height="11.3" fill="#ff0000"/><rect x="1540.9" y="328" width="11" height="5.3" fill="#ff0000"/><rect x="1596.9" y="328" width="11" height="5.3" fill="#ff0000"/><rect x="1593.8" y="335.9" width="5" height="11.3" fill="#ff0000"/><rect x="1610" y="295.1" width="8" height="5.6" fill="#ff0000"/><rect x="1610" y="309.1" width="8" height="5.6" fill="#ff0000"/><rect x="1632.4" y="295.1" width="8" height="5.6" fill="#ff0000"/><rect x="1632.4" y="309.1" width="8" height="5.6" fill="#ff0000"/><path shape-rendering="geometricPrecision" d="M1614.3 297.1 L1617.3 294.1 H1636.1 V315.7 H1614.3 Z" fill="none" stroke="#58b00a" stroke-width="2"/><rect x="1613.2" y="295.1" width="4.8" height="5.6" fill="#b8a400"/><rect x="1614.9" y="296.4" width="2" height="3" fill="#ff0000"/><rect x="1613.2" y="309.1" width="4.8" height="5.6" fill="#b8a400"/><rect x="1614.9" y="310.4" width="2" height="3" fill="#ff0000"/><rect x="1632.4" y="295.1" width="4.8" height="5.6" fill="#b8a400"/><rect x="1633.5" y="296.4" width="2" height="3" fill="#ff0000"/><rect x="1632.4" y="309.1" width="4.8" height="5.6" fill="#b8a400"/><rect x="1633.5" y="310.4" width="2" height="3" fill="#ff0000"/><rect x="1644.1" y="302.1" width="4.9" height="12.8" fill="#ff0000"/><rect x="1644.1" y="304.1" width="4.9" height="8.8" fill="#b8a400"/><rect x="1644.1" y="305.9" width="4.9" height="5.2" fill="#58b00a"/><rect x="1645.3" y="307.2" width="2.5" height="2.6" fill="#000"/><rect x="1645.5" y="305.3" width="2" height="1.2" fill="#ff0000"/><rect x="1645.5" y="310.5" width="2" height="1.2" fill="#ff0000"/><rect x="1448.9" y="350.2" width="6.8" height="1.9" fill="#ff0000"/><rect x="1501.6" y="350.2" width="6.8" height="1.9" fill="#ff0000"/><rect x="1448.9" y="352.8" width="6.8" height="1.9" fill="#ff0000"/><rect x="1501.6" y="352.8" width="6.8" height="1.9" fill="#ff0000"/><rect x="1448.9" y="355.5" width="6.8" height="1.9" fill="#ff0000"/><rect x="1501.6" y="355.5" width="6.8" height="1.9" fill="#ff0000"/><rect x="1448.9" y="358.1" width="6.8" height="1.9" fill="#ff0000"/><rect x="1501.6" y="358.1" width="6.8" height="1.9" fill="#ff0000"/><rect x="1448.9" y="360.8" width="6.8" height="1.9" fill="#ff0000"/><rect x="1501.6" y="360.8" width="6.8" height="1.9" fill="#ff0000"/><rect x="1448.9" y="363.4" width="6.8" height="1.9" fill="#ff0000"/><rect x="1501.6" y="363.4" width="6.8" height="1.9" fill="#ff0000"/><rect x="1448.9" y="366.1" width="6.8" height="1.9" fill="#ff0000"/><rect x="1501.6" y="366.1" width="6.8" height="1.9" fill="#ff0000"/><rect x="1448.9" y="368.7" width="6.8" height="1.9" fill="#ff0000"/><rect x="1501.6" y="368.7" width="6.8" height="1.9" fill="#ff0000"/><rect x="1448.9" y="371.4" width="6.8" height="1.9" fill="#ff0000"/><rect x="1501.6" y="371.4" width="6.8" height="1.9" fill="#ff0000"/><rect x="1448.9" y="374" width="6.8" height="1.9" fill="#ff0000"/><rect x="1501.6" y="374" width="6.8" height="1.9" fill="#ff0000"/><rect x="1448.9" y="376.7" width="6.8" height="1.9" fill="#ff0000"/><rect x="1501.6" y="376.7" width="6.8" height="1.9" fill="#ff0000"/><rect x="1448.9" y="379.3" width="6.8" height="1.9" fill="#ff0000"/><rect x="1501.6" y="379.3" width="6.8" height="1.9" fill="#ff0000"/><rect x="1448.9" y="382" width="6.8" height="1.9" fill="#ff0000"/><rect x="1501.6" y="382" width="6.8" height="1.9" fill="#ff0000"/><rect x="1448.9" y="384.6" width="6.8" height="1.9" fill="#ff0000"/><rect x="1501.6" y="384.6" width="6.8" height="1.9" fill="#ff0000"/><rect x="1448.9" y="387.3" width="6.8" height="1.9" fill="#ff0000"/><rect x="1501.6" y="387.3" width="6.8" height="1.9" fill="#ff0000"/><rect x="1448.9" y="389.9" width="6.8" height="1.9" fill="#ff0000"/><rect x="1501.6" y="389.9" width="6.8" height="1.9" fill="#ff0000"/><rect x="1448.9" y="392.6" width="6.8" height="1.9" fill="#ff0000"/><rect x="1501.6" y="392.6" width="6.8" height="1.9" fill="#ff0000"/><rect x="1448.9" y="395.2" width="6.8" height="1.9" fill="#ff0000"/><rect x="1501.6" y="395.2" width="6.8" height="1.9" fill="#ff0000"/><rect x="1448.9" y="397.9" width="6.8" height="1.9" fill="#ff0000"/><rect x="1501.6" y="397.9" width="6.8" height="1.9" fill="#ff0000"/><rect x="1448.9" y="400.5" width="6.8" height="1.9" fill="#ff0000"/><rect x="1501.6" y="400.5" width="6.8" height="1.9" fill="#ff0000"/><rect x="1448.9" y="403.2" width="6.8" height="1.9" fill="#ff0000"/><rect x="1501.6" y="403.2" width="6.8" height="1.9" fill="#ff0000"/><rect x="1448.9" y="405.8" width="6.8" height="1.9" fill="#ff0000"/><rect x="1501.6" y="405.8" width="6.8" height="1.9" fill="#ff0000"/><rect x="1448.9" y="408.5" width="6.8" height="1.9" fill="#ff0000"/><rect x="1501.6" y="408.5" width="6.8" height="1.9" fill="#ff0000"/><rect x="1448.9" y="411.1" width="6.8" height="1.9" fill="#ff0000"/><rect x="1501.6" y="411.1" width="6.8" height="1.9" fill="#ff0000"/><rect x="1448.9" y="413.8" width="6.8" height="1.9" fill="#ff0000"/><rect x="1501.6" y="413.8" width="6.8" height="1.9" fill="#ff0000"/><rect x="1448.9" y="416.4" width="6.8" height="1.9" fill="#ff0000"/><rect x="1501.6" y="416.4" width="6.8" height="1.9" fill="#ff0000"/><rect x="1448.9" y="419.1" width="6.8" height="1.9" fill="#ff0000"/><rect x="1501.6" y="419.1" width="6.8" height="1.9" fill="#ff0000"/><rect x="1448.9" y="421.7" width="6.8" height="1.9" fill="#ff0000"/><rect x="1501.6" y="421.7" width="6.8" height="1.9" fill="#ff0000"/><rect x="1448.9" y="424.4" width="6.8" height="1.9" fill="#ff0000"/><rect x="1501.6" y="424.4" width="6.8" height="1.9" fill="#ff0000"/><rect x="1448.9" y="427" width="6.8" height="1.9" fill="#ff0000"/><rect x="1501.6" y="427" width="6.8" height="1.9" fill="#ff0000"/><rect x="1448.9" y="429.7" width="6.8" height="1.9" fill="#ff0000"/><rect x="1501.6" y="429.7" width="6.8" height="1.9" fill="#ff0000"/><rect x="1448.9" y="432.3" width="6.8" height="1.9" fill="#ff0000"/><rect x="1501.6" y="432.3" width="6.8" height="1.9" fill="#ff0000"/><rect x="1448.9" y="435" width="6.8" height="1.9" fill="#ff0000"/><rect x="1501.6" y="435" width="6.8" height="1.9" fill="#ff0000"/><rect x="1448.9" y="437.6" width="6.8" height="1.9" fill="#ff0000"/><rect x="1501.6" y="437.6" width="6.8" height="1.9" fill="#ff0000"/><rect x="1448.9" y="440.3" width="6.8" height="1.9" fill="#ff0000"/><rect x="1501.6" y="440.3" width="6.8" height="1.9" fill="#ff0000"/><rect x="1448.9" y="442.9" width="6.8" height="1.9" fill="#ff0000"/><rect x="1501.6" y="442.9" width="6.8" height="1.9" fill="#ff0000"/><rect x="1452.2" y="350.2" width="3.5" height="94.6" fill="#b8a400"/><rect x="1501.6" y="350.2" width="3.4" height="94.6" fill="#b8a400"/><rect x="1452.6" y="350.7" width="1.6" height="0.9" fill="#ff0000"/><rect x="1503" y="350.7" width="1.6" height="0.9" fill="#ff0000"/><rect x="1448.9" y="350.2" width="2.9" height="1.9" fill="#ff0000"/><rect x="1505.4" y="350.2" width="3" height="1.9" fill="#ff0000"/><rect x="1452.6" y="353.3" width="1.6" height="0.9" fill="#ff0000"/><rect x="1503" y="353.3" width="1.6" height="0.9" fill="#ff0000"/><rect x="1448.9" y="352.8" width="2.9" height="1.9" fill="#ff0000"/><rect x="1505.4" y="352.8" width="3" height="1.9" fill="#ff0000"/><rect x="1452.6" y="356" width="1.6" height="0.9" fill="#ff0000"/><rect x="1503" y="356" width="1.6" height="0.9" fill="#ff0000"/><rect x="1448.9" y="355.5" width="2.9" height="1.9" fill="#ff0000"/><rect x="1505.4" y="355.5" width="3" height="1.9" fill="#ff0000"/><rect x="1452.6" y="358.6" width="1.6" height="0.9" fill="#ff0000"/><rect x="1503" y="358.6" width="1.6" height="0.9" fill="#ff0000"/><rect x="1448.9" y="358.1" width="2.9" height="1.9" fill="#ff0000"/><rect x="1505.4" y="358.1" width="3" height="1.9" fill="#ff0000"/><rect x="1452.6" y="361.3" width="1.6" height="0.9" fill="#ff0000"/><rect x="1503" y="361.3" width="1.6" height="0.9" fill="#ff0000"/><rect x="1448.9" y="360.8" width="2.9" height="1.9" fill="#ff0000"/><rect x="1505.4" y="360.8" width="3" height="1.9" fill="#ff0000"/><rect x="1452.6" y="363.9" width="1.6" height="0.9" fill="#ff0000"/><rect x="1503" y="363.9" width="1.6" height="0.9" fill="#ff0000"/><rect x="1448.9" y="363.4" width="2.9" height="1.9" fill="#ff0000"/><rect x="1505.4" y="363.4" width="3" height="1.9" fill="#ff0000"/><rect x="1452.6" y="366.6" width="1.6" height="0.9" fill="#ff0000"/><rect x="1503" y="366.6" width="1.6" height="0.9" fill="#ff0000"/><rect x="1448.9" y="366.1" width="2.9" height="1.9" fill="#ff0000"/><rect x="1505.4" y="366.1" width="3" height="1.9" fill="#ff0000"/><rect x="1452.6" y="369.2" width="1.6" height="0.9" fill="#ff0000"/><rect x="1503" y="369.2" width="1.6" height="0.9" fill="#ff0000"/><rect x="1448.9" y="368.7" width="2.9" height="1.9" fill="#ff0000"/><rect x="1505.4" y="368.7" width="3" height="1.9" fill="#ff0000"/><rect x="1452.6" y="371.9" width="1.6" height="0.9" fill="#ff0000"/><rect x="1503" y="371.9" width="1.6" height="0.9" fill="#ff0000"/><rect x="1448.9" y="371.4" width="2.9" height="1.9" fill="#ff0000"/><rect x="1505.4" y="371.4" width="3" height="1.9" fill="#ff0000"/><rect x="1452.6" y="374.5" width="1.6" height="0.9" fill="#ff0000"/><rect x="1503" y="374.5" width="1.6" height="0.9" fill="#ff0000"/><rect x="1448.9" y="374" width="2.9" height="1.9" fill="#ff0000"/><rect x="1505.4" y="374" width="3" height="1.9" fill="#ff0000"/><rect x="1452.6" y="377.2" width="1.6" height="0.9" fill="#ff0000"/><rect x="1503" y="377.2" width="1.6" height="0.9" fill="#ff0000"/><rect x="1448.9" y="376.7" width="2.9" height="1.9" fill="#ff0000"/><rect x="1505.4" y="376.7" width="3" height="1.9" fill="#ff0000"/><rect x="1452.6" y="379.8" width="1.6" height="0.9" fill="#ff0000"/><rect x="1503" y="379.8" width="1.6" height="0.9" fill="#ff0000"/><rect x="1448.9" y="379.3" width="2.9" height="1.9" fill="#ff0000"/><rect x="1505.4" y="379.3" width="3" height="1.9" fill="#ff0000"/><rect x="1452.6" y="382.5" width="1.6" height="0.9" fill="#ff0000"/><rect x="1503" y="382.5" width="1.6" height="0.9" fill="#ff0000"/><rect x="1448.9" y="382" width="2.9" height="1.9" fill="#ff0000"/><rect x="1505.4" y="382" width="3" height="1.9" fill="#ff0000"/><rect x="1452.6" y="385.1" width="1.6" height="0.9" fill="#ff0000"/><rect x="1503" y="385.1" width="1.6" height="0.9" fill="#ff0000"/><rect x="1448.9" y="384.6" width="2.9" height="1.9" fill="#ff0000"/><rect x="1505.4" y="384.6" width="3" height="1.9" fill="#ff0000"/><rect x="1452.6" y="387.8" width="1.6" height="0.9" fill="#ff0000"/><rect x="1503" y="387.8" width="1.6" height="0.9" fill="#ff0000"/><rect x="1448.9" y="387.3" width="2.9" height="1.9" fill="#ff0000"/><rect x="1505.4" y="387.3" width="3" height="1.9" fill="#ff0000"/><rect x="1452.6" y="390.4" width="1.6" height="0.9" fill="#ff0000"/><rect x="1503" y="390.4" width="1.6" height="0.9" fill="#ff0000"/><rect x="1448.9" y="389.9" width="2.9" height="1.9" fill="#ff0000"/><rect x="1505.4" y="389.9" width="3" height="1.9" fill="#ff0000"/><rect x="1452.6" y="393.1" width="1.6" height="0.9" fill="#ff0000"/><rect x="1503" y="393.1" width="1.6" height="0.9" fill="#ff0000"/><rect x="1448.9" y="392.6" width="2.9" height="1.9" fill="#ff0000"/><rect x="1505.4" y="392.6" width="3" height="1.9" fill="#ff0000"/><rect x="1452.6" y="395.7" width="1.6" height="0.9" fill="#ff0000"/><rect x="1503" y="395.7" width="1.6" height="0.9" fill="#ff0000"/><rect x="1448.9" y="395.2" width="2.9" height="1.9" fill="#ff0000"/><rect x="1505.4" y="395.2" width="3" height="1.9" fill="#ff0000"/><rect x="1452.6" y="398.4" width="1.6" height="0.9" fill="#ff0000"/><rect x="1503" y="398.4" width="1.6" height="0.9" fill="#ff0000"/><rect x="1448.9" y="397.9" width="2.9" height="1.9" fill="#ff0000"/><rect x="1505.4" y="397.9" width="3" height="1.9" fill="#ff0000"/><rect x="1452.6" y="401" width="1.6" height="0.9" fill="#ff0000"/><rect x="1503" y="401" width="1.6" height="0.9" fill="#ff0000"/><rect x="1448.9" y="400.5" width="2.9" height="1.9" fill="#ff0000"/><rect x="1505.4" y="400.5" width="3" height="1.9" fill="#ff0000"/><rect x="1452.6" y="403.7" width="1.6" height="0.9" fill="#ff0000"/><rect x="1503" y="403.7" width="1.6" height="0.9" fill="#ff0000"/><rect x="1448.9" y="403.2" width="2.9" height="1.9" fill="#ff0000"/><rect x="1505.4" y="403.2" width="3" height="1.9" fill="#ff0000"/><rect x="1452.6" y="406.3" width="1.6" height="0.9" fill="#ff0000"/><rect x="1503" y="406.3" width="1.6" height="0.9" fill="#ff0000"/><rect x="1448.9" y="405.8" width="2.9" height="1.9" fill="#ff0000"/><rect x="1505.4" y="405.8" width="3" height="1.9" fill="#ff0000"/><rect x="1452.6" y="409" width="1.6" height="0.9" fill="#ff0000"/><rect x="1503" y="409" width="1.6" height="0.9" fill="#ff0000"/><rect x="1448.9" y="408.5" width="2.9" height="1.9" fill="#ff0000"/><rect x="1505.4" y="408.5" width="3" height="1.9" fill="#ff0000"/><rect x="1452.6" y="411.6" width="1.6" height="0.9" fill="#ff0000"/><rect x="1503" y="411.6" width="1.6" height="0.9" fill="#ff0000"/><rect x="1448.9" y="411.1" width="2.9" height="1.9" fill="#ff0000"/><rect x="1505.4" y="411.1" width="3" height="1.9" fill="#ff0000"/><rect x="1452.6" y="414.3" width="1.6" height="0.9" fill="#ff0000"/><rect x="1503" y="414.3" width="1.6" height="0.9" fill="#ff0000"/><rect x="1448.9" y="413.8" width="2.9" height="1.9" fill="#ff0000"/><rect x="1505.4" y="413.8" width="3" height="1.9" fill="#ff0000"/><rect x="1452.6" y="416.9" width="1.6" height="0.9" fill="#ff0000"/><rect x="1503" y="416.9" width="1.6" height="0.9" fill="#ff0000"/><rect x="1448.9" y="416.4" width="2.9" height="1.9" fill="#ff0000"/><rect x="1505.4" y="416.4" width="3" height="1.9" fill="#ff0000"/><rect x="1452.6" y="419.6" width="1.6" height="0.9" fill="#ff0000"/><rect x="1503" y="419.6" width="1.6" height="0.9" fill="#ff0000"/><rect x="1448.9" y="419.1" width="2.9" height="1.9" fill="#ff0000"/><rect x="1505.4" y="419.1" width="3" height="1.9" fill="#ff0000"/><rect x="1452.6" y="422.2" width="1.6" height="0.9" fill="#ff0000"/><rect x="1503" y="422.2" width="1.6" height="0.9" fill="#ff0000"/><rect x="1448.9" y="421.7" width="2.9" height="1.9" fill="#ff0000"/><rect x="1505.4" y="421.7" width="3" height="1.9" fill="#ff0000"/><rect x="1452.6" y="424.9" width="1.6" height="0.9" fill="#ff0000"/><rect x="1503" y="424.9" width="1.6" height="0.9" fill="#ff0000"/><rect x="1448.9" y="424.4" width="2.9" height="1.9" fill="#ff0000"/><rect x="1505.4" y="424.4" width="3" height="1.9" fill="#ff0000"/><rect x="1452.6" y="427.5" width="1.6" height="0.9" fill="#ff0000"/><rect x="1503" y="427.5" width="1.6" height="0.9" fill="#ff0000"/><rect x="1448.9" y="427" width="2.9" height="1.9" fill="#ff0000"/><rect x="1505.4" y="427" width="3" height="1.9" fill="#ff0000"/><rect x="1452.6" y="430.2" width="1.6" height="0.9" fill="#ff0000"/><rect x="1503" y="430.2" width="1.6" height="0.9" fill="#ff0000"/><rect x="1448.9" y="429.7" width="2.9" height="1.9" fill="#ff0000"/><rect x="1505.4" y="429.7" width="3" height="1.9" fill="#ff0000"/><rect x="1452.6" y="432.8" width="1.6" height="0.9" fill="#ff0000"/><rect x="1503" y="432.8" width="1.6" height="0.9" fill="#ff0000"/><rect x="1448.9" y="432.3" width="2.9" height="1.9" fill="#ff0000"/><rect x="1505.4" y="432.3" width="3" height="1.9" fill="#ff0000"/><rect x="1452.6" y="435.5" width="1.6" height="0.9" fill="#ff0000"/><rect x="1503" y="435.5" width="1.6" height="0.9" fill="#ff0000"/><rect x="1448.9" y="435" width="2.9" height="1.9" fill="#ff0000"/><rect x="1505.4" y="435" width="3" height="1.9" fill="#ff0000"/><rect x="1452.6" y="438.1" width="1.6" height="0.9" fill="#ff0000"/><rect x="1503" y="438.1" width="1.6" height="0.9" fill="#ff0000"/><rect x="1448.9" y="437.6" width="2.9" height="1.9" fill="#ff0000"/><rect x="1505.4" y="437.6" width="3" height="1.9" fill="#ff0000"/><rect x="1452.6" y="440.8" width="1.6" height="0.9" fill="#ff0000"/><rect x="1503" y="440.8" width="1.6" height="0.9" fill="#ff0000"/><rect x="1448.9" y="440.3" width="2.9" height="1.9" fill="#ff0000"/><rect x="1505.4" y="440.3" width="3" height="1.9" fill="#ff0000"/><rect x="1452.6" y="443.4" width="1.6" height="0.9" fill="#ff0000"/><rect x="1503" y="443.4" width="1.6" height="0.9" fill="#ff0000"/><rect x="1448.9" y="442.9" width="2.9" height="1.9" fill="#ff0000"/><rect x="1505.4" y="442.9" width="3" height="1.9" fill="#ff0000"/><rect x="1456.6" y="348.5" width="44.1" height="96.6" fill="none" stroke="#58b00a" stroke-width="1.9"/><text x="1469" y="400.1" font-size="12.5" fill="#58b00a" stroke="#58b00a" stroke-width="0.35" textLength="17.5" lengthAdjust="spacingAndGlyphs">U3</text><rect x="1439.6" y="346.1" width="5.6" height="12.8" fill="#ff0000"/><rect x="1439.6" y="348.1" width="5.6" height="8.8" fill="#b8a400"/><rect x="1439.6" y="349.9" width="5.6" height="5.2" fill="#58b00a"/><rect x="1440.8" y="351.2" width="3.2" height="2.6" fill="#000"/><rect x="1441.4" y="349.3" width="2" height="1.2" fill="#ff0000"/><rect x="1441.4" y="354.5" width="2" height="1.2" fill="#ff0000"/><rect x="1439.6" y="361.1" width="5.6" height="12.9" fill="#ff0000"/><rect x="1439.6" y="363.1" width="5.6" height="8.9" fill="#b8a400"/><rect x="1439.6" y="364.9" width="5.6" height="5.2" fill="#58b00a"/><rect x="1440.8" y="366.2" width="3.2" height="2.6" fill="#000"/><rect x="1441.4" y="364.3" width="2" height="1.2" fill="#ff0000"/><rect x="1441.4" y="369.6" width="2" height="1.2" fill="#ff0000"/><rect x="1439.6" y="383.8" width="5.6" height="9.5" fill="#ff0000"/><rect x="1439.6" y="385.8" width="5.6" height="5.5" fill="#b8a400"/><rect x="1439.6" y="385.9" width="5.6" height="5.2" fill="#58b00a"/><rect x="1440.8" y="387.2" width="3.2" height="2.6" fill="#000"/><rect x="1441.4" y="387" width="2" height="1.2" fill="#ff0000"/><rect x="1441.4" y="388.9" width="2" height="1.2" fill="#ff0000"/><rect x="1439.6" y="396.9" width="5.6" height="12.9" fill="#ff0000"/><rect x="1439.6" y="398.9" width="5.6" height="8.9" fill="#b8a400"/><rect x="1439.6" y="400.8" width="5.6" height="5.2" fill="#58b00a"/><rect x="1440.8" y="402.1" width="3.2" height="2.6" fill="#000"/><rect x="1441.4" y="400.1" width="2" height="1.2" fill="#ff0000"/><rect x="1441.4" y="405.4" width="2" height="1.2" fill="#ff0000"/><rect x="1439.6" y="432.1" width="5.6" height="12.8" fill="#ff0000"/><rect x="1439.6" y="434.1" width="5.6" height="8.8" fill="#b8a400"/><rect x="1439.6" y="435.9" width="5.6" height="5.2" fill="#58b00a"/><rect x="1440.8" y="437.2" width="3.2" height="2.6" fill="#000"/><rect x="1441.4" y="435.3" width="2" height="1.2" fill="#ff0000"/><rect x="1441.4" y="440.5" width="2" height="1.2" fill="#ff0000"/><rect x="1512.2" y="356.4" width="6" height="12.3" fill="#ff0000"/><rect x="1512.2" y="358.4" width="6" height="8.3" fill="#b8a400"/><rect x="1512.2" y="359.9" width="6" height="5.2" fill="#58b00a"/><rect x="1513.4" y="361.2" width="3.6" height="2.6" fill="#000"/><rect x="1514.2" y="359.6" width="2" height="1.2" fill="#ff0000"/><rect x="1514.2" y="364.3" width="2" height="1.2" fill="#ff0000"/><rect x="1512.2" y="378.4" width="6" height="11.9" fill="#ff0000"/><rect x="1512.2" y="380.4" width="6" height="7.9" fill="#b8a400"/><rect x="1512.2" y="381.8" width="6" height="5.2" fill="#58b00a"/><rect x="1513.4" y="383.1" width="3.6" height="2.6" fill="#000"/><rect x="1514.2" y="381.6" width="2" height="1.2" fill="#ff0000"/><rect x="1514.2" y="385.9" width="2" height="1.2" fill="#ff0000"/><rect x="1529.9" y="358.2" width="8.1" height="8.8" fill="#ff0000"/><circle shape-rendering="auto" cx="1534.3" cy="374" r="4.5" fill="#ff0000"/><circle shape-rendering="auto" cx="1534.3" cy="385.2" r="4.5" fill="#ff0000"/><circle shape-rendering="auto" cx="1534.3" cy="396.4" r="4.5" fill="#ff0000"/><circle shape-rendering="auto" cx="1534.3" cy="407.6" r="4.5" fill="#ff0000"/><circle shape-rendering="auto" cx="1534.3" cy="418.8" r="4.5" fill="#ff0000"/><circle shape-rendering="auto" cx="1534.3" cy="430" r="4.5" fill="#ff0000"/><circle shape-rendering="auto" cx="1534.3" cy="441.2" r="4.5" fill="#ff0000"/><rect x="1573.2" y="359.2" width="17.6" height="12.9" fill="#ff0000"/><rect x="1574.7" y="360.2" width="3.8" height="10.9" fill="#b8a400"/><rect x="1585.5" y="360.2" width="3.8" height="10.9" fill="#b8a400"/><rect x="1578.5" y="359.2" width="7" height="12.9" fill="#000"/><rect x="1578" y="360.9" width="8.1" height="9.5" fill="none" stroke="#58b00a" stroke-width="1.6"/><rect x="1614.1" y="356.1" width="12.6" height="5.9" fill="#ff0000"/><rect x="1616.1" y="356.1" width="8.6" height="5.9" fill="#b8a400"/><rect x="1617.8" y="356.1" width="5.2" height="5.9" fill="#58b00a"/><rect x="1619.1" y="357.3" width="2.6" height="3.5" fill="#000"/><rect x="1617.3" y="358.1" width="1.2" height="2" fill="#ff0000"/><rect x="1622.3" y="358.1" width="1.2" height="2" fill="#ff0000"/><rect x="1605.3" y="366.2" width="8" height="5.6" fill="#ff0000"/><rect x="1605.3" y="380.2" width="8" height="5.6" fill="#ff0000"/><rect x="1627.7" y="366.2" width="8" height="5.6" fill="#ff0000"/><rect x="1627.7" y="380.2" width="8" height="5.6" fill="#ff0000"/><path shape-rendering="geometricPrecision" d="M1609.6 368.2 L1612.6 365.2 H1631.4 V386.8 H1609.6 Z" fill="none" stroke="#58b00a" stroke-width="2"/><rect x="1608.5" y="366.2" width="4.8" height="5.6" fill="#b8a400"/><rect x="1610.2" y="367.5" width="2" height="3" fill="#ff0000"/><rect x="1608.5" y="380.2" width="4.8" height="5.6" fill="#b8a400"/><rect x="1610.2" y="381.5" width="2" height="3" fill="#ff0000"/><rect x="1627.7" y="366.2" width="4.8" height="5.6" fill="#b8a400"/><rect x="1628.8" y="367.5" width="2" height="3" fill="#ff0000"/><rect x="1627.7" y="380.2" width="4.8" height="5.6" fill="#b8a400"/><rect x="1628.8" y="381.5" width="2" height="3" fill="#ff0000"/><rect x="1568.1" y="378.5" width="4.6" height="5.5" fill="#ff0000"/><rect x="1569.2" y="380.6" width="2.4" height="2.9" fill="#b8a400"/><rect x="1564.4" y="388.6" width="4.6" height="5.5" fill="#ff0000"/><rect x="1565.5" y="389.1" width="2.4" height="3.1" fill="#b8a400"/><rect x="1572.1" y="388.6" width="4.6" height="5.5" fill="#ff0000"/><rect x="1573.2" y="389.1" width="2.4" height="3.1" fill="#b8a400"/><rect x="1564.3" y="383.9" width="12.3" height="4.8" fill="none" stroke="#58b00a" stroke-width="1.7"/><rect x="1586.2" y="375.9" width="4.6" height="6.3" fill="#ff0000"/><rect x="1587.3" y="378.8" width="2.4" height="2.9" fill="#b8a400"/><rect x="1582.7" y="386.1" width="4.6" height="6.3" fill="#ff0000"/><rect x="1583.8" y="386.6" width="2.4" height="3.1" fill="#b8a400"/><rect x="1590.3" y="386.1" width="4.6" height="6.3" fill="#ff0000"/><rect x="1591.4" y="386.6" width="2.4" height="3.1" fill="#b8a400"/><rect x="1582.4" y="382.1" width="12.6" height="4.1" fill="none" stroke="#58b00a" stroke-width="1.7"/><rect x="1565.1" y="397.7" width="12.8" height="5.8" fill="#ff0000"/><rect x="1567.1" y="397.7" width="8.8" height="5.8" fill="#b8a400"/><rect x="1568.9" y="397.7" width="5.2" height="5.8" fill="#58b00a"/><rect x="1570.2" y="398.9" width="2.6" height="3.4" fill="#000"/><rect x="1568.3" y="399.6" width="1.2" height="2" fill="#ff0000"/><rect x="1573.5" y="399.6" width="1.2" height="2" fill="#ff0000"/><rect x="1565.1" y="405" width="12.8" height="5.9" fill="#ff0000"/><rect x="1567.1" y="405" width="8.8" height="5.9" fill="#b8a400"/><rect x="1568.9" y="405" width="5.2" height="5.9" fill="#58b00a"/><rect x="1570.2" y="406.2" width="2.6" height="3.5" fill="#000"/><rect x="1568.3" y="406.9" width="1.2" height="2" fill="#ff0000"/><rect x="1573.5" y="406.9" width="1.2" height="2" fill="#ff0000"/><rect x="1565.1" y="412.3" width="12.8" height="5.9" fill="#ff0000"/><rect x="1567.1" y="412.3" width="8.8" height="5.9" fill="#b8a400"/><rect x="1568.9" y="412.3" width="5.2" height="5.9" fill="#58b00a"/><rect x="1570.2" y="413.5" width="2.6" height="3.5" fill="#000"/><rect x="1568.3" y="414.2" width="1.2" height="2" fill="#ff0000"/><rect x="1573.5" y="414.2" width="1.2" height="2" fill="#ff0000"/><rect x="1565.1" y="419.4" width="12.8" height="5.8" fill="#ff0000"/><rect x="1567.1" y="419.4" width="8.8" height="5.8" fill="#b8a400"/><rect x="1568.9" y="419.4" width="5.2" height="5.8" fill="#58b00a"/><rect x="1570.2" y="420.6" width="2.6" height="3.4" fill="#000"/><rect x="1568.3" y="421.3" width="1.2" height="2" fill="#ff0000"/><rect x="1573.5" y="421.3" width="1.2" height="2" fill="#ff0000"/><rect x="1563.9" y="428.3" width="6.6" height="4.6" fill="#ff0000"/><rect x="1567.1" y="429.4" width="2.9" height="2.4" fill="#b8a400"/><rect x="1563.9" y="436.6" width="6.6" height="4.6" fill="#ff0000"/><rect x="1567.1" y="437.7" width="2.9" height="2.4" fill="#b8a400"/><rect x="1574.7" y="432.3" width="6.6" height="4.6" fill="#ff0000"/><rect x="1575.2" y="433.4" width="3.1" height="2.4" fill="#b8a400"/><rect x="1570.4" y="427.9" width="4.4" height="12.8" fill="none" stroke="#58b00a" stroke-width="1.7"/><rect x="1593.5" y="400.5" width="9" height="9" fill="#ff0000"/><circle shape-rendering="auto" cx="1598" cy="405" r="2.6" fill="none" stroke="#b8a400" stroke-width="1.1"/><circle shape-rendering="auto" cx="1598" cy="416.7" r="4.5" fill="#ff0000"/><circle shape-rendering="auto" cx="1598" cy="416.7" r="2.6" fill="none" stroke="#b8a400" stroke-width="1.1"/><rect x="1583.5" y="399.3" width="25.3" height="22.4" fill="none" stroke="#58b00a" stroke-width="1.9"/><rect x="1647" y="403.2" width="4.9" height="12.8" fill="#ff0000"/><rect x="1647" y="405.2" width="4.9" height="8.8" fill="#b8a400"/><rect x="1647" y="407" width="4.9" height="5.2" fill="#58b00a"/><rect x="1648.2" y="408.3" width="2.5" height="2.6" fill="#000"/><rect x="1648.5" y="406.4" width="2" height="1.2" fill="#ff0000"/><rect x="1648.5" y="411.6" width="2" height="1.2" fill="#ff0000"/><rect x="1647" y="421.1" width="4.9" height="12.9" fill="#ff0000"/><rect x="1647" y="423.1" width="4.9" height="8.9" fill="#b8a400"/><rect x="1647" y="424.9" width="4.9" height="5.2" fill="#58b00a"/><rect x="1648.2" y="426.2" width="2.5" height="2.6" fill="#000"/><rect x="1648.5" y="424.3" width="2" height="1.2" fill="#ff0000"/><rect x="1648.5" y="429.6" width="2" height="1.2" fill="#ff0000"/><rect x="1592.1" y="437.2" width="5.3" height="12.5" fill="#ff0000"/><rect x="1592.1" y="439.2" width="5.3" height="8.5" fill="#b8a400"/><rect x="1592.1" y="440.8" width="5.3" height="5.2" fill="#58b00a"/><rect x="1593.3" y="442.1" width="2.9" height="2.6" fill="#000"/><rect x="1593.8" y="440.4" width="2" height="1.2" fill="#ff0000"/><rect x="1593.8" y="445.3" width="2" height="1.2" fill="#ff0000"/><rect x="1600.9" y="437.2" width="8" height="5.6" fill="#ff0000"/><rect x="1600.9" y="451.2" width="8" height="5.6" fill="#ff0000"/><rect x="1623.3" y="437.2" width="8" height="5.6" fill="#ff0000"/><rect x="1623.3" y="451.2" width="8" height="5.6" fill="#ff0000"/><path shape-rendering="geometricPrecision" d="M1605.2 439.2 L1608.2 436.2 H1627 V457.8 H1605.2 Z" fill="none" stroke="#58b00a" stroke-width="2"/><rect x="1604.1" y="437.2" width="4.8" height="5.6" fill="#b8a400"/><rect x="1605.8" y="438.5" width="2" height="3" fill="#ff0000"/><rect x="1604.1" y="451.2" width="4.8" height="5.6" fill="#b8a400"/><rect x="1605.8" y="452.5" width="2" height="3" fill="#ff0000"/><rect x="1623.3" y="437.2" width="4.8" height="5.6" fill="#b8a400"/><rect x="1624.4" y="438.5" width="2" height="3" fill="#ff0000"/><rect x="1623.3" y="451.2" width="4.8" height="5.6" fill="#b8a400"/><rect x="1624.4" y="452.5" width="2" height="3" fill="#ff0000"/><rect x="990.8" y="366.1" width="8" height="5.6" fill="#ff0000"/><rect x="990.8" y="380.1" width="8" height="5.6" fill="#ff0000"/><rect x="1013.2" y="366.1" width="8" height="5.6" fill="#ff0000"/><rect x="1013.2" y="380.1" width="8" height="5.6" fill="#ff0000"/><path shape-rendering="geometricPrecision" d="M995.1 368.1 L998.1 365.1 H1016.9 V386.7 H995.1 Z" fill="none" stroke="#58b00a" stroke-width="2"/><rect x="994" y="366.1" width="4.8" height="5.6" fill="#b8a400"/><rect x="995.7" y="367.4" width="2" height="3" fill="#ff0000"/><rect x="994" y="380.1" width="4.8" height="5.6" fill="#b8a400"/><rect x="995.7" y="381.4" width="2" height="3" fill="#ff0000"/><rect x="1013.2" y="366.1" width="4.8" height="5.6" fill="#b8a400"/><rect x="1014.3" y="367.4" width="2" height="3" fill="#ff0000"/><rect x="1013.2" y="380.1" width="4.8" height="5.6" fill="#b8a400"/><rect x="1014.3" y="381.4" width="2" height="3" fill="#ff0000"/><rect x="1043.1" y="366.2" width="7.8" height="6.7" fill="#ff0000"/><rect x="1053.1" y="366.2" width="6.9" height="6.7" fill="#ff0000"/><rect x="1054.8" y="377.9" width="5.2" height="6.3" fill="#ff0000"/><rect x="1072" y="377.2" width="19.9" height="8.9" fill="#ff0000"/><rect x="1073.5" y="378.2" width="4.5" height="6.9" fill="#b8a400"/><rect x="1085.9" y="378.2" width="4.5" height="6.9" fill="#b8a400"/><rect x="1078" y="377.2" width="8" height="8.9" fill="#000"/><rect x="1077.3" y="378.9" width="9.3" height="5.5" fill="none" stroke="#58b00a" stroke-width="1.6"/><rect x="974.2" y="403" width="5.8" height="13" fill="#ff0000"/><rect x="974.2" y="405" width="5.8" height="9" fill="#b8a400"/><rect x="974.2" y="406.9" width="5.8" height="5.2" fill="#58b00a"/><rect x="975.4" y="408.2" width="3.4" height="2.6" fill="#000"/><rect x="976.1" y="406.2" width="2" height="1.2" fill="#ff0000"/><rect x="976.1" y="411.6" width="2" height="1.2" fill="#ff0000"/><rect x="974.2" y="424" width="5.8" height="13" fill="#ff0000"/><rect x="974.2" y="426" width="5.8" height="9" fill="#b8a400"/><rect x="974.2" y="427.9" width="5.8" height="5.2" fill="#58b00a"/><rect x="975.4" y="429.2" width="3.4" height="2.6" fill="#000"/><rect x="976.1" y="427.2" width="2" height="1.2" fill="#ff0000"/><rect x="976.1" y="432.6" width="2" height="1.2" fill="#ff0000"/><circle shape-rendering="auto" cx="1055.8" cy="408.8" r="2.4" fill="#ff0000"/><circle shape-rendering="auto" cx="1055.8" cy="414.3" r="2.4" fill="#ff0000"/><circle shape-rendering="auto" cx="1061.3" cy="408.8" r="2.4" fill="#ff0000"/><circle shape-rendering="auto" cx="1061.3" cy="414.3" r="2.4" fill="#ff0000"/><circle shape-rendering="auto" cx="1066" cy="408.8" r="2.4" fill="#ff0000"/><circle shape-rendering="auto" cx="1066" cy="414.3" r="2.4" fill="#ff0000"/><rect x="1054.5" y="409.5" width="8" height="4.1" fill="#ff0000"/><rect x="1065" y="409" width="2" height="5" fill="#ff0000"/><rect x="1047.9" y="406.3" width="0.8" height="0.8" fill="#ff0000"/><rect x="1047.9" y="415" width="0.8" height="0.8" fill="#ff0000"/><rect x="1056.1" y="400" width="0.8" height="0.8" fill="#ff0000"/><rect x="1070.1" y="400" width="0.8" height="0.8" fill="#ff0000"/><rect x="1056.1" y="422.1" width="0.8" height="0.8" fill="#ff0000"/><rect x="1070.1" y="422.1" width="0.8" height="0.8" fill="#ff0000"/><rect x="1070.1" y="411.1" width="0.8" height="0.8" fill="#ff0000"/><circle shape-rendering="auto" cx="1149.5" cy="425.5" r="2.4" fill="#ff0000"/><circle shape-rendering="auto" cx="1149.5" cy="431.5" r="2.4" fill="#ff0000"/><circle shape-rendering="auto" cx="1155.5" cy="425.5" r="2.4" fill="#ff0000"/><circle shape-rendering="auto" cx="1155.5" cy="431.5" r="2.4" fill="#ff0000"/><circle shape-rendering="auto" cx="1149.5" cy="437" r="2.4" fill="#ff0000"/><circle shape-rendering="auto" cx="1155.5" cy="437" r="2.4" fill="#ff0000"/><rect x="1148.5" y="426" width="8" height="5" fill="#ff0000"/><rect x="1149.5" y="435.6" width="6" height="2.8" fill="#ff0000"/><rect x="1140.1" y="419.1" width="0.8" height="0.8" fill="#ff0000"/><rect x="1151.1" y="419.1" width="0.8" height="0.8" fill="#ff0000"/><rect x="1163.1" y="419.1" width="0.8" height="0.8" fill="#ff0000"/><rect x="1140.1" y="433.1" width="0.8" height="0.8" fill="#ff0000"/><rect x="1163.1" y="433.1" width="0.8" height="0.8" fill="#ff0000"/><rect x="1147.1" y="441.1" width="0.8" height="0.8" fill="#ff0000"/><rect x="1156.1" y="441.1" width="0.8" height="0.8" fill="#ff0000"/><rect x="1004" y="425.2" width="13.1" height="5.5" fill="#ff0000"/><rect x="1006" y="425.2" width="9.1" height="5.5" fill="#b8a400"/><rect x="1007.9" y="425.2" width="5.2" height="5.5" fill="#58b00a"/><rect x="1009.2" y="426.4" width="2.6" height="3.1" fill="#000"/><rect x="1007.2" y="426.9" width="1.2" height="2" fill="#ff0000"/><rect x="1012.7" y="426.9" width="1.2" height="2" fill="#ff0000"/><rect x="995.9" y="437.2" width="8" height="5.6" fill="#ff0000"/><rect x="995.9" y="451.2" width="8" height="5.6" fill="#ff0000"/><rect x="1018.3" y="437.2" width="8" height="5.6" fill="#ff0000"/><rect x="1018.3" y="451.2" width="8" height="5.6" fill="#ff0000"/><path shape-rendering="geometricPrecision" d="M1000.2 439.2 L1003.2 436.2 H1022 V457.8 H1000.2 Z" fill="none" stroke="#58b00a" stroke-width="2"/><rect x="999.1" y="437.2" width="4.8" height="5.6" fill="#b8a400"/><rect x="1000.8" y="438.5" width="2" height="3" fill="#ff0000"/><rect x="999.1" y="451.2" width="4.8" height="5.6" fill="#b8a400"/><rect x="1000.8" y="452.5" width="2" height="3" fill="#ff0000"/><rect x="1018.3" y="437.2" width="4.8" height="5.6" fill="#b8a400"/><rect x="1019.4" y="438.5" width="2" height="3" fill="#ff0000"/><rect x="1018.3" y="451.2" width="4.8" height="5.6" fill="#b8a400"/><rect x="1019.4" y="452.5" width="2" height="3" fill="#ff0000"/><circle shape-rendering="auto" cx="1007.2" cy="465.8" r="4.1" fill="#ff0000"/><circle shape-rendering="auto" cx="1007.2" cy="499.3" r="4.1" fill="#ff0000"/><circle shape-rendering="auto" cx="1018.9" cy="465.8" r="4.1" fill="#ff0000"/><circle shape-rendering="auto" cx="1018.9" cy="499.3" r="4.1" fill="#ff0000"/><circle shape-rendering="auto" cx="1029.9" cy="465.8" r="4.1" fill="#ff0000"/><circle shape-rendering="auto" cx="1029.9" cy="499.3" r="4.1" fill="#ff0000"/><circle shape-rendering="auto" cx="1040.9" cy="465.8" r="4.1" fill="#ff0000"/><circle shape-rendering="auto" cx="1040.9" cy="499.3" r="4.1" fill="#ff0000"/><rect x="997.4" y="466.2" width="53.6" height="32.2" fill="none" stroke="#58b00a" stroke-width="2"/><circle shape-rendering="auto" cx="1007.2" cy="465.8" r="2" fill="none" stroke="#b8a400" stroke-width="1"/><circle shape-rendering="auto" cx="1007.2" cy="499.3" r="2" fill="none" stroke="#b8a400" stroke-width="1"/><circle shape-rendering="auto" cx="1018.9" cy="465.8" r="2" fill="none" stroke="#b8a400" stroke-width="1"/><circle shape-rendering="auto" cx="1018.9" cy="499.3" r="2" fill="none" stroke="#b8a400" stroke-width="1"/><circle shape-rendering="auto" cx="1029.9" cy="465.8" r="2" fill="none" stroke="#b8a400" stroke-width="1"/><circle shape-rendering="auto" cx="1029.9" cy="499.3" r="2" fill="none" stroke="#b8a400" stroke-width="1"/><circle shape-rendering="auto" cx="1040.9" cy="465.8" r="2" fill="none" stroke="#b8a400" stroke-width="1"/><circle shape-rendering="auto" cx="1040.9" cy="499.3" r="2" fill="none" stroke="#b8a400" stroke-width="1"/><text x="1015.5" y="485.3" font-size="12.5" fill="#58b00a" stroke="#58b00a" stroke-width="0.35" textLength="17.5" lengthAdjust="spacingAndGlyphs">S1</text><rect x="1127" y="463.4" width="13.1" height="5.2" fill="#ff0000"/><rect x="1127" y="475.8" width="13.1" height="5.2" fill="#ff0000"/><rect x="1128" y="464.6" width="11.1" height="1.4" fill="#b8a400"/><rect x="1128" y="478.4" width="11.1" height="1.4" fill="#b8a400"/><rect x="1128.8" y="465.2" width="9.5" height="14" fill="none" stroke="#58b00a" stroke-width="1.8"/><rect x="1129" y="467" width="9.1" height="1.2" fill="#ff0000"/><rect x="1129" y="476.4" width="9.1" height="1" fill="#ff0000"/><rect x="1144" y="463.4" width="13.2" height="5.2" fill="#ff0000"/><rect x="1144" y="475.8" width="13.2" height="5.2" fill="#ff0000"/><rect x="1145" y="464.6" width="11.2" height="1.4" fill="#b8a400"/><rect x="1145" y="478.4" width="11.2" height="1.4" fill="#b8a400"/><rect x="1145.8" y="465.2" width="9.6" height="14" fill="none" stroke="#58b00a" stroke-width="1.8"/><rect x="1146" y="467" width="9.2" height="1.2" fill="#ff0000"/><rect x="1146" y="476.4" width="9.2" height="1" fill="#ff0000"/><rect x="1124.9" y="488.3" width="7.2" height="14.7" fill="#ff0000"/><rect x="1124.9" y="490.3" width="7.2" height="10.7" fill="#b8a400"/><rect x="1124.9" y="493" width="7.2" height="5.2" fill="#58b00a"/><rect x="1126.1" y="494.3" width="4.8" height="2.6" fill="#000"/><rect x="1127.5" y="491.5" width="2" height="1.2" fill="#ff0000"/><rect x="1127.5" y="498.6" width="2" height="1.2" fill="#ff0000"/><rect x="1135.5" y="494.1" width="4.6" height="8.9" fill="#b8a400"/><rect x="1136.2" y="494.8" width="3.2" height="7.5" fill="none" stroke="#58b00a" stroke-width="1"/><rect x="1144.3" y="483.2" width="3.8" height="5.8" fill="#ff0000"/><rect x="1145.4" y="485.5" width="1.6" height="2.8" fill="#b8a400"/><rect x="1144.3" y="496.5" width="3.8" height="5.7" fill="#ff0000"/><rect x="1145.4" y="497.1" width="1.6" height="2.7" fill="#b8a400"/><rect x="1148.7" y="483.2" width="3.8" height="5.8" fill="#ff0000"/><rect x="1149.8" y="485.5" width="1.6" height="2.8" fill="#b8a400"/><rect x="1148.7" y="496.5" width="3.8" height="5.7" fill="#ff0000"/><rect x="1149.8" y="497.1" width="1.6" height="2.7" fill="#b8a400"/><rect x="1153.1" y="483.2" width="3.8" height="5.8" fill="#ff0000"/><rect x="1154.2" y="485.5" width="1.6" height="2.8" fill="#b8a400"/><rect x="1153.1" y="496.5" width="3.8" height="5.7" fill="#ff0000"/><rect x="1154.2" y="497.1" width="1.6" height="2.7" fill="#b8a400"/><rect x="1144.1" y="489.2" width="12.9" height="7" fill="none" stroke="#58b00a" stroke-width="1.7"/><rect x="1084.9" y="495.2" width="5.8" height="12.1" fill="#ff0000"/><rect x="1084.9" y="497.2" width="5.8" height="8.1" fill="#b8a400"/><rect x="1084.9" y="498.6" width="5.8" height="5.2" fill="#58b00a"/><rect x="1086.1" y="499.9" width="3.4" height="2.6" fill="#000"/><rect x="1086.8" y="498.4" width="2" height="1.2" fill="#ff0000"/><rect x="1086.8" y="502.9" width="2" height="1.2" fill="#ff0000"/><rect x="1000" y="508.2" width="8" height="5.6" fill="#ff0000"/><rect x="1000" y="522.2" width="8" height="5.6" fill="#ff0000"/><rect x="1022.4" y="508.2" width="8" height="5.6" fill="#ff0000"/><rect x="1022.4" y="522.2" width="8" height="5.6" fill="#ff0000"/><path shape-rendering="geometricPrecision" d="M1004.3 510.2 L1007.3 507.2 H1026.1 V528.8 H1004.3 Z" fill="none" stroke="#58b00a" stroke-width="2"/><rect x="1003.2" y="508.2" width="4.8" height="5.6" fill="#b8a400"/><rect x="1004.9" y="509.5" width="2" height="3" fill="#ff0000"/><rect x="1003.2" y="522.2" width="4.8" height="5.6" fill="#b8a400"/><rect x="1004.9" y="523.5" width="2" height="3" fill="#ff0000"/><rect x="1022.4" y="508.2" width="4.8" height="5.6" fill="#b8a400"/><rect x="1023.5" y="509.5" width="2" height="3" fill="#ff0000"/><rect x="1022.4" y="522.2" width="4.8" height="5.6" fill="#b8a400"/><rect x="1023.5" y="523.5" width="2" height="3" fill="#ff0000"/><rect x="1033.1" y="514.2" width="5.6" height="12.6" fill="#ff0000"/><rect x="1033.1" y="516.2" width="5.6" height="8.6" fill="#b8a400"/><rect x="1033.1" y="517.9" width="5.6" height="5.2" fill="#58b00a"/><rect x="1034.3" y="519.2" width="3.2" height="2.6" fill="#000"/><rect x="1034.9" y="517.4" width="2" height="1.2" fill="#ff0000"/><rect x="1034.9" y="522.4" width="2" height="1.2" fill="#ff0000"/><rect x="1075.1" y="513.2" width="5.4" height="12.8" fill="#ff0000"/><rect x="1075.1" y="515.2" width="5.4" height="8.8" fill="#b8a400"/><rect x="1075.1" y="517" width="5.4" height="5.2" fill="#58b00a"/><rect x="1076.3" y="518.3" width="3" height="2.6" fill="#000"/><rect x="1076.8" y="516.4" width="2" height="1.2" fill="#ff0000"/><rect x="1076.8" y="521.6" width="2" height="1.2" fill="#ff0000"/><rect x="1084.9" y="513.2" width="5.5" height="12.8" fill="#ff0000"/><rect x="1084.9" y="515.2" width="5.5" height="8.8" fill="#b8a400"/><rect x="1084.9" y="517" width="5.5" height="5.2" fill="#58b00a"/><rect x="1086.1" y="518.3" width="3.1" height="2.6" fill="#000"/><rect x="1086.7" y="516.4" width="2" height="1.2" fill="#ff0000"/><rect x="1086.7" y="521.6" width="2" height="1.2" fill="#ff0000"/><rect x="1097" y="513.2" width="5.2" height="12.8" fill="#ff0000"/><rect x="1097" y="515.2" width="5.2" height="8.8" fill="#b8a400"/><rect x="1097" y="517" width="5.2" height="5.2" fill="#58b00a"/><rect x="1098.2" y="518.3" width="2.8" height="2.6" fill="#000"/><rect x="1098.6" y="516.4" width="2" height="1.2" fill="#ff0000"/><rect x="1098.6" y="521.6" width="2" height="1.2" fill="#ff0000"/><rect x="1144.3" y="505.9" width="12.7" height="5.1" fill="#ff0000"/><rect x="1146.3" y="505.9" width="8.7" height="5.1" fill="#b8a400"/><rect x="1148.1" y="505.9" width="5.2" height="5.1" fill="#58b00a"/><rect x="1149.4" y="507.1" width="2.6" height="2.7" fill="#000"/><rect x="1147.5" y="507.4" width="1.2" height="2" fill="#ff0000"/><rect x="1152.6" y="507.4" width="1.2" height="2" fill="#ff0000"/><rect x="987.4" y="538.9" width="6.6" height="5.8" fill="#ff0000"/><circle shape-rendering="auto" cx="990.8" cy="552.8" r="4" fill="#ff0000"/><circle shape-rendering="auto" cx="990.8" cy="564.1" r="4" fill="#ff0000"/><rect x="988.8" y="540.2" width="3.8" height="3.4" fill="none" stroke="#b8a400" stroke-width="1"/><circle shape-rendering="auto" cx="990.8" cy="552.8" r="1.8" fill="none" stroke="#b8a400" stroke-width="1"/><circle shape-rendering="auto" cx="990.8" cy="564.1" r="1.8" fill="none" stroke="#b8a400" stroke-width="1"/><rect x="972.5" y="539.5" width="24.2" height="26.3" fill="none" stroke="#58b00a" stroke-width="1.9"/><rect x="975.5" y="539.5" width="1.4" height="26.5" fill="#e0c0e8"/><rect x="1001.3" y="551.3" width="5.6" height="12.5" fill="#ff0000"/><rect x="1001.3" y="553.3" width="5.6" height="8.5" fill="#b8a400"/><rect x="1001.3" y="554.9" width="5.6" height="5.2" fill="#58b00a"/><rect x="1002.5" y="556.2" width="3.2" height="2.6" fill="#000"/><rect x="1003.1" y="554.5" width="2" height="1.2" fill="#ff0000"/><rect x="1003.1" y="559.4" width="2" height="1.2" fill="#ff0000"/><rect x="1013.3" y="567.1" width="12.6" height="4.7" fill="#ff0000"/><rect x="1015.3" y="567.1" width="8.6" height="4.7" fill="#b8a400"/><rect x="1017" y="567.1" width="5.2" height="4.7" fill="#58b00a"/><rect x="1018.3" y="568.3" width="2.6" height="2.3" fill="#000"/><rect x="1016.5" y="568.5" width="1.2" height="2" fill="#ff0000"/><rect x="1021.5" y="568.5" width="1.2" height="2" fill="#ff0000"/><rect x="1004.3" y="578.2" width="8" height="5.6" fill="#ff0000"/><rect x="1004.3" y="592.2" width="8" height="5.6" fill="#ff0000"/><rect x="1026.7" y="578.2" width="8" height="5.6" fill="#ff0000"/><rect x="1026.7" y="592.2" width="8" height="5.6" fill="#ff0000"/><path shape-rendering="geometricPrecision" d="M1008.6 580.2 L1011.6 577.2 H1030.4 V598.8 H1008.6 Z" fill="none" stroke="#58b00a" stroke-width="2"/><rect x="1007.5" y="578.2" width="4.8" height="5.6" fill="#b8a400"/><rect x="1009.2" y="579.5" width="2" height="3" fill="#ff0000"/><rect x="1007.5" y="592.2" width="4.8" height="5.6" fill="#b8a400"/><rect x="1009.2" y="593.5" width="2" height="3" fill="#ff0000"/><rect x="1026.7" y="578.2" width="4.8" height="5.6" fill="#b8a400"/><rect x="1027.8" y="579.5" width="2" height="3" fill="#ff0000"/><rect x="1026.7" y="592.2" width="4.8" height="5.6" fill="#b8a400"/><rect x="1027.8" y="593.5" width="2" height="3" fill="#ff0000"/><rect x="1062.2" y="565.5" width="4.8" height="12.2" fill="#ff0000"/><rect x="1062.2" y="567.5" width="4.8" height="8.2" fill="#b8a400"/><rect x="1062.2" y="569" width="4.8" height="5.2" fill="#58b00a"/><rect x="1063.4" y="570.3" width="2.4" height="2.6" fill="#000"/><rect x="1063.6" y="568.7" width="2" height="1.2" fill="#ff0000"/><rect x="1063.6" y="573.3" width="2" height="1.2" fill="#ff0000"/><rect x="1069" y="565.5" width="4.9" height="12.2" fill="#ff0000"/><rect x="1069" y="567.5" width="4.9" height="8.2" fill="#b8a400"/><rect x="1069" y="569" width="4.9" height="5.2" fill="#58b00a"/><rect x="1070.2" y="570.3" width="2.5" height="2.6" fill="#000"/><rect x="1070.5" y="568.7" width="2" height="1.2" fill="#ff0000"/><rect x="1070.5" y="573.3" width="2" height="1.2" fill="#ff0000"/><rect x="1078.3" y="556.2" width="28.3" height="5.4" fill="#ff0000"/><rect x="1078.3" y="582.5" width="28.3" height="4.7" fill="#ff0000"/><rect x="1079.3" y="557.3" width="1.3" height="4.3" fill="#b8a400"/><rect x="1079.3" y="582.5" width="1.3" height="3.8" fill="#b8a400"/><rect x="1080.9" y="556.2" width="1" height="5.4" fill="#000"/><rect x="1080.9" y="582.5" width="1" height="4.7" fill="#000"/><rect x="1082.2" y="557.3" width="1.3" height="4.3" fill="#b8a400"/><rect x="1082.2" y="582.5" width="1.3" height="3.8" fill="#b8a400"/><rect x="1083.9" y="556.2" width="1" height="5.4" fill="#000"/><rect x="1083.9" y="582.5" width="1" height="4.7" fill="#000"/><rect x="1085.2" y="557.3" width="1.3" height="4.3" fill="#b8a400"/><rect x="1085.2" y="582.5" width="1.3" height="3.8" fill="#b8a400"/><rect x="1086.8" y="556.2" width="1" height="5.4" fill="#000"/><rect x="1086.8" y="582.5" width="1" height="4.7" fill="#000"/><rect x="1088.1" y="557.3" width="1.3" height="4.3" fill="#b8a400"/><rect x="1088.1" y="582.5" width="1.3" height="3.8" fill="#b8a400"/><rect x="1089.8" y="556.2" width="1" height="5.4" fill="#000"/><rect x="1089.8" y="582.5" width="1" height="4.7" fill="#000"/><rect x="1091.1" y="557.3" width="1.3" height="4.3" fill="#b8a400"/><rect x="1091.1" y="582.5" width="1.3" height="3.8" fill="#b8a400"/><rect x="1092.7" y="556.2" width="1" height="5.4" fill="#000"/><rect x="1092.7" y="582.5" width="1" height="4.7" fill="#000"/><rect x="1094" y="557.3" width="1.3" height="4.3" fill="#b8a400"/><rect x="1094" y="582.5" width="1.3" height="3.8" fill="#b8a400"/><rect x="1095.7" y="556.2" width="1" height="5.4" fill="#000"/><rect x="1095.7" y="582.5" width="1" height="4.7" fill="#000"/><rect x="1097" y="557.3" width="1.3" height="4.3" fill="#b8a400"/><rect x="1097" y="582.5" width="1.3" height="3.8" fill="#b8a400"/><rect x="1098.6" y="556.2" width="1" height="5.4" fill="#000"/><rect x="1098.6" y="582.5" width="1" height="4.7" fill="#000"/><rect x="1100" y="557.3" width="1.3" height="4.3" fill="#b8a400"/><rect x="1100" y="582.5" width="1.3" height="3.8" fill="#b8a400"/><rect x="1101.6" y="556.2" width="1" height="5.4" fill="#000"/><rect x="1101.6" y="582.5" width="1" height="4.7" fill="#000"/><rect x="1102.9" y="557.3" width="1.3" height="4.3" fill="#b8a400"/><rect x="1102.9" y="582.5" width="1.3" height="3.8" fill="#b8a400"/><rect x="1104.5" y="556.2" width="1" height="5.4" fill="#000"/><rect x="1104.5" y="582.5" width="1" height="4.7" fill="#000"/><rect x="1105.8" y="557.3" width="1.3" height="4.3" fill="#b8a400"/><rect x="1105.8" y="582.5" width="1.3" height="3.8" fill="#b8a400"/><rect x="1107.5" y="556.2" width="1" height="5.4" fill="#000"/><rect x="1107.5" y="582.5" width="1" height="4.7" fill="#000"/><rect x="1078.4" y="562.5" width="28.3" height="18" fill="none" stroke="#58b00a" stroke-width="1.9"/><text x="1079.3" y="574.4" font-size="12.5" fill="#58b00a" stroke="#58b00a" stroke-width="0.35" textLength="26.4" lengthAdjust="spacingAndGlyphs">U12</text><rect x="1116.1" y="554.2" width="4.7" height="12.8" fill="#ff0000"/><rect x="1116.1" y="556.2" width="4.7" height="8.8" fill="#b8a400"/><rect x="1116.1" y="558" width="4.7" height="5.2" fill="#58b00a"/><rect x="1117.3" y="559.3" width="2.3" height="2.6" fill="#000"/><rect x="1117.4" y="557.4" width="2" height="1.2" fill="#ff0000"/><rect x="1117.4" y="562.6" width="2" height="1.2" fill="#ff0000"/><rect x="1066.3" y="593.1" width="5.3" height="12.7" fill="#ff0000"/><rect x="1066.3" y="595.1" width="5.3" height="8.7" fill="#b8a400"/><rect x="1066.3" y="596.9" width="5.3" height="5.2" fill="#58b00a"/><rect x="1067.5" y="598.2" width="2.9" height="2.6" fill="#000"/><rect x="1067.9" y="596.3" width="2" height="1.2" fill="#ff0000"/><rect x="1067.9" y="601.4" width="2" height="1.2" fill="#ff0000"/><rect x="1073.3" y="593.1" width="5.3" height="12.7" fill="#ff0000"/><rect x="1073.3" y="595.1" width="5.3" height="8.7" fill="#b8a400"/><rect x="1073.3" y="596.9" width="5.3" height="5.2" fill="#58b00a"/><rect x="1074.5" y="598.2" width="2.9" height="2.6" fill="#000"/><rect x="1074.9" y="596.3" width="2" height="1.2" fill="#ff0000"/><rect x="1074.9" y="601.4" width="2" height="1.2" fill="#ff0000"/><rect x="1080.3" y="593.1" width="5.3" height="12.7" fill="#ff0000"/><rect x="1080.3" y="595.1" width="5.3" height="8.7" fill="#b8a400"/><rect x="1080.3" y="596.9" width="5.3" height="5.2" fill="#58b00a"/><rect x="1081.5" y="598.2" width="2.9" height="2.6" fill="#000"/><rect x="1081.9" y="596.3" width="2" height="1.2" fill="#ff0000"/><rect x="1081.9" y="601.4" width="2" height="1.2" fill="#ff0000"/><rect x="1087.3" y="593.1" width="5.3" height="12.7" fill="#ff0000"/><rect x="1087.3" y="595.1" width="5.3" height="8.7" fill="#b8a400"/><rect x="1087.3" y="596.9" width="5.3" height="5.2" fill="#58b00a"/><rect x="1088.5" y="598.2" width="2.9" height="2.6" fill="#000"/><rect x="1088.9" y="596.3" width="2" height="1.2" fill="#ff0000"/><rect x="1088.9" y="601.4" width="2" height="1.2" fill="#ff0000"/><rect x="1094.3" y="593.1" width="5.3" height="12.7" fill="#ff0000"/><rect x="1094.3" y="595.1" width="5.3" height="8.7" fill="#b8a400"/><rect x="1094.3" y="596.9" width="5.3" height="5.2" fill="#58b00a"/><rect x="1095.5" y="598.2" width="2.9" height="2.6" fill="#000"/><rect x="1095.9" y="596.3" width="2" height="1.2" fill="#ff0000"/><rect x="1095.9" y="601.4" width="2" height="1.2" fill="#ff0000"/><rect x="1101.3" y="593.1" width="5.3" height="12.7" fill="#ff0000"/><rect x="1101.3" y="595.1" width="5.3" height="8.7" fill="#b8a400"/><rect x="1101.3" y="596.9" width="5.3" height="5.2" fill="#58b00a"/><rect x="1102.5" y="598.2" width="2.9" height="2.6" fill="#000"/><rect x="1102.9" y="596.3" width="2" height="1.2" fill="#ff0000"/><rect x="1102.9" y="601.4" width="2" height="1.2" fill="#ff0000"/><rect x="1108.3" y="593.1" width="5.3" height="12.7" fill="#ff0000"/><rect x="1108.3" y="595.1" width="5.3" height="8.7" fill="#b8a400"/><rect x="1108.3" y="596.9" width="5.3" height="5.2" fill="#58b00a"/><rect x="1109.5" y="598.2" width="2.9" height="2.6" fill="#000"/><rect x="1109.9" y="596.3" width="2" height="1.2" fill="#ff0000"/><rect x="1109.9" y="601.4" width="2" height="1.2" fill="#ff0000"/><rect x="1115.3" y="593.1" width="5.3" height="12.7" fill="#ff0000"/><rect x="1115.3" y="595.1" width="5.3" height="8.7" fill="#b8a400"/><rect x="1115.3" y="596.9" width="5.3" height="5.2" fill="#58b00a"/><rect x="1116.5" y="598.2" width="2.9" height="2.6" fill="#000"/><rect x="1116.9" y="596.3" width="2" height="1.2" fill="#ff0000"/><rect x="1116.9" y="601.4" width="2" height="1.2" fill="#ff0000"/><rect x="1122.3" y="593.1" width="5.3" height="12.7" fill="#ff0000"/><rect x="1122.3" y="595.1" width="5.3" height="8.7" fill="#b8a400"/><rect x="1122.3" y="596.9" width="5.3" height="5.2" fill="#58b00a"/><rect x="1123.5" y="598.2" width="2.9" height="2.6" fill="#000"/><rect x="1123.9" y="596.3" width="2" height="1.2" fill="#ff0000"/><rect x="1123.9" y="601.4" width="2" height="1.2" fill="#ff0000"/><rect x="1129.3" y="593.1" width="5.3" height="12.7" fill="#ff0000"/><rect x="1129.3" y="595.1" width="5.3" height="8.7" fill="#b8a400"/><rect x="1129.3" y="596.9" width="5.3" height="5.2" fill="#58b00a"/><rect x="1130.5" y="598.2" width="2.9" height="2.6" fill="#000"/><rect x="1130.9" y="596.3" width="2" height="1.2" fill="#ff0000"/><rect x="1130.9" y="601.4" width="2" height="1.2" fill="#ff0000"/><rect x="1009.1" y="646.9" width="8" height="5.6" fill="#ff0000"/><rect x="1009.1" y="660.9" width="8" height="5.6" fill="#ff0000"/><rect x="1031.5" y="646.9" width="8" height="5.6" fill="#ff0000"/><rect x="1031.5" y="660.9" width="8" height="5.6" fill="#ff0000"/><path shape-rendering="geometricPrecision" d="M1013.4 648.9 L1016.4 645.9 H1035.2 V667.5 H1013.4 Z" fill="none" stroke="#58b00a" stroke-width="2"/><rect x="1012.3" y="646.9" width="4.8" height="5.6" fill="#b8a400"/><rect x="1014" y="648.2" width="2" height="3" fill="#ff0000"/><rect x="1012.3" y="660.9" width="4.8" height="5.6" fill="#b8a400"/><rect x="1014" y="662.2" width="2" height="3" fill="#ff0000"/><rect x="1031.5" y="646.9" width="4.8" height="5.6" fill="#b8a400"/><rect x="1032.6" y="648.2" width="2" height="3" fill="#ff0000"/><rect x="1031.5" y="660.9" width="4.8" height="5.6" fill="#b8a400"/><rect x="1032.6" y="662.2" width="2" height="3" fill="#ff0000"/><rect x="1043" y="654.4" width="4.6" height="11.6" fill="#ff0000"/><rect x="1043" y="656.4" width="4.6" height="7.6" fill="#b8a400"/><rect x="1043" y="657.6" width="4.6" height="5.2" fill="#58b00a"/><rect x="1044.2" y="658.9" width="2.2" height="2.6" fill="#000"/><rect x="1044.3" y="657.6" width="2" height="1.2" fill="#ff0000"/><rect x="1044.3" y="661.6" width="2" height="1.2" fill="#ff0000"/><rect x="1066.4" y="693.2" width="8" height="5.6" fill="#ff0000"/><rect x="1066.4" y="707.2" width="8" height="5.6" fill="#ff0000"/><rect x="1088.8" y="693.2" width="8" height="5.6" fill="#ff0000"/><rect x="1088.8" y="707.2" width="8" height="5.6" fill="#ff0000"/><path shape-rendering="geometricPrecision" d="M1070.7 695.2 L1073.7 692.2 H1092.5 V713.8 H1070.7 Z" fill="none" stroke="#58b00a" stroke-width="2"/><rect x="1069.6" y="693.2" width="4.8" height="5.6" fill="#b8a400"/><rect x="1071.3" y="694.5" width="2" height="3" fill="#ff0000"/><rect x="1069.6" y="707.2" width="4.8" height="5.6" fill="#b8a400"/><rect x="1071.3" y="708.5" width="2" height="3" fill="#ff0000"/><rect x="1088.8" y="693.2" width="4.8" height="5.6" fill="#b8a400"/><rect x="1089.9" y="694.5" width="2" height="3" fill="#ff0000"/><rect x="1088.8" y="707.2" width="4.8" height="5.6" fill="#b8a400"/><rect x="1089.9" y="708.5" width="2" height="3" fill="#ff0000"/><rect x="1075.2" y="682.4" width="12.3" height="4.7" fill="#ff0000"/><rect x="1077.2" y="682.4" width="8.3" height="4.7" fill="#b8a400"/><rect x="1078.8" y="682.4" width="5.2" height="4.7" fill="#58b00a"/><rect x="1080" y="683.6" width="2.6" height="2.3" fill="#000"/><rect x="1078.4" y="683.8" width="1.2" height="2" fill="#ff0000"/><rect x="1083.1" y="683.8" width="1.2" height="2" fill="#ff0000"/><rect x="1158.8" y="520.3" width="4.2" height="5.7" fill="#ff0000"/><rect x="1158.8" y="531.5" width="4.2" height="6.5" fill="#ff0000"/><rect x="1160" y="520.3" width="1.8" height="3.2" fill="#b8a400"/><rect x="1160" y="534.5" width="1.8" height="2.7" fill="#b8a400"/><rect x="1253.8" y="520.3" width="4.2" height="5.7" fill="#ff0000"/><rect x="1253.8" y="531.5" width="4.2" height="6.5" fill="#ff0000"/><rect x="1255" y="520.3" width="1.8" height="3.2" fill="#b8a400"/><rect x="1255" y="534.5" width="1.8" height="2.7" fill="#b8a400"/><rect x="1166" y="520.3" width="2.5" height="4.7" fill="#ff0000"/><rect x="1166.6" y="520.3" width="1.3" height="2.5" fill="#b8a400"/><rect x="1166" y="531.8" width="2.5" height="6.2" fill="#ff0000"/><rect x="1166.6" y="534.6" width="1.3" height="2.6" fill="#b8a400"/><rect x="1170.5" y="520.3" width="2.5" height="4.7" fill="#ff0000"/><rect x="1171.1" y="520.3" width="1.3" height="2.5" fill="#b8a400"/><rect x="1170.5" y="531.8" width="2.5" height="6.2" fill="#ff0000"/><rect x="1171.1" y="534.6" width="1.3" height="2.6" fill="#b8a400"/><rect x="1175" y="520.3" width="2.5" height="4.7" fill="#ff0000"/><rect x="1175.6" y="520.3" width="1.3" height="2.5" fill="#b8a400"/><rect x="1175" y="531.8" width="2.5" height="6.2" fill="#ff0000"/><rect x="1175.6" y="534.6" width="1.3" height="2.6" fill="#b8a400"/><rect x="1179.5" y="520.3" width="2.5" height="4.7" fill="#ff0000"/><rect x="1180.1" y="520.3" width="1.3" height="2.5" fill="#b8a400"/><rect x="1179.5" y="531.8" width="2.5" height="6.2" fill="#ff0000"/><rect x="1180.1" y="534.6" width="1.3" height="2.6" fill="#b8a400"/><rect x="1184" y="520.3" width="2.5" height="4.7" fill="#ff0000"/><rect x="1184.6" y="520.3" width="1.3" height="2.5" fill="#b8a400"/><rect x="1184" y="531.8" width="2.5" height="6.2" fill="#ff0000"/><rect x="1184.6" y="534.6" width="1.3" height="2.6" fill="#b8a400"/><rect x="1188.5" y="520.3" width="2.5" height="4.7" fill="#ff0000"/><rect x="1189.1" y="520.3" width="1.3" height="2.5" fill="#b8a400"/><rect x="1188.5" y="531.8" width="2.5" height="6.2" fill="#ff0000"/><rect x="1189.1" y="534.6" width="1.3" height="2.6" fill="#b8a400"/><rect x="1193" y="520.3" width="2.5" height="4.7" fill="#ff0000"/><rect x="1193.6" y="520.3" width="1.3" height="2.5" fill="#b8a400"/><rect x="1193" y="531.8" width="2.5" height="6.2" fill="#ff0000"/><rect x="1193.6" y="534.6" width="1.3" height="2.6" fill="#b8a400"/><rect x="1197.5" y="520.3" width="2.5" height="4.7" fill="#ff0000"/><rect x="1198.1" y="520.3" width="1.3" height="2.5" fill="#b8a400"/><rect x="1197.5" y="531.8" width="2.5" height="6.2" fill="#ff0000"/><rect x="1198.1" y="534.6" width="1.3" height="2.6" fill="#b8a400"/><rect x="1202" y="520.3" width="2.5" height="4.7" fill="#ff0000"/><rect x="1202.6" y="520.3" width="1.3" height="2.5" fill="#b8a400"/><rect x="1202" y="531.8" width="2.5" height="6.2" fill="#ff0000"/><rect x="1202.6" y="534.6" width="1.3" height="2.6" fill="#b8a400"/><rect x="1206.5" y="520.3" width="2.5" height="4.7" fill="#ff0000"/><rect x="1207.1" y="520.3" width="1.3" height="2.5" fill="#b8a400"/><rect x="1206.5" y="531.8" width="2.5" height="6.2" fill="#ff0000"/><rect x="1207.1" y="534.6" width="1.3" height="2.6" fill="#b8a400"/><rect x="1211" y="520.3" width="2.5" height="4.7" fill="#ff0000"/><rect x="1211.6" y="520.3" width="1.3" height="2.5" fill="#b8a400"/><rect x="1211" y="531.8" width="2.5" height="6.2" fill="#ff0000"/><rect x="1211.6" y="534.6" width="1.3" height="2.6" fill="#b8a400"/><rect x="1215.5" y="520.3" width="2.5" height="4.7" fill="#ff0000"/><rect x="1216.1" y="520.3" width="1.3" height="2.5" fill="#b8a400"/><rect x="1215.5" y="531.8" width="2.5" height="6.2" fill="#ff0000"/><rect x="1216.1" y="534.6" width="1.3" height="2.6" fill="#b8a400"/><rect x="1220" y="520.3" width="2.5" height="4.7" fill="#ff0000"/><rect x="1220.6" y="520.3" width="1.3" height="2.5" fill="#b8a400"/><rect x="1220" y="531.8" width="2.5" height="6.2" fill="#ff0000"/><rect x="1220.6" y="534.6" width="1.3" height="2.6" fill="#b8a400"/><rect x="1224.5" y="520.3" width="2.5" height="4.7" fill="#ff0000"/><rect x="1225.1" y="520.3" width="1.3" height="2.5" fill="#b8a400"/><rect x="1224.5" y="531.8" width="2.5" height="6.2" fill="#ff0000"/><rect x="1225.1" y="534.6" width="1.3" height="2.6" fill="#b8a400"/><rect x="1229" y="520.3" width="2.5" height="4.7" fill="#ff0000"/><rect x="1229.6" y="520.3" width="1.3" height="2.5" fill="#b8a400"/><rect x="1229" y="531.8" width="2.5" height="6.2" fill="#ff0000"/><rect x="1229.6" y="534.6" width="1.3" height="2.6" fill="#b8a400"/><rect x="1233.5" y="520.3" width="2.5" height="4.7" fill="#ff0000"/><rect x="1234.1" y="520.3" width="1.3" height="2.5" fill="#b8a400"/><rect x="1233.5" y="531.8" width="2.5" height="6.2" fill="#ff0000"/><rect x="1234.1" y="534.6" width="1.3" height="2.6" fill="#b8a400"/><rect x="1238" y="520.3" width="2.5" height="4.7" fill="#ff0000"/><rect x="1238.6" y="520.3" width="1.3" height="2.5" fill="#b8a400"/><rect x="1238" y="531.8" width="2.5" height="6.2" fill="#ff0000"/><rect x="1238.6" y="534.6" width="1.3" height="2.6" fill="#b8a400"/><rect x="1242.5" y="520.3" width="2.5" height="4.7" fill="#ff0000"/><rect x="1243.1" y="520.3" width="1.3" height="2.5" fill="#b8a400"/><rect x="1242.5" y="531.8" width="2.5" height="6.2" fill="#ff0000"/><rect x="1243.1" y="534.6" width="1.3" height="2.6" fill="#b8a400"/><rect x="1247" y="520.3" width="2.5" height="4.7" fill="#ff0000"/><rect x="1247.6" y="520.3" width="1.3" height="2.5" fill="#b8a400"/><rect x="1247" y="531.8" width="2.5" height="6.2" fill="#ff0000"/><rect x="1247.6" y="534.6" width="1.3" height="2.6" fill="#b8a400"/><rect x="1251.5" y="520.3" width="2.5" height="4.7" fill="#ff0000"/><rect x="1252.1" y="520.3" width="1.3" height="2.5" fill="#b8a400"/><rect x="1251.5" y="531.8" width="2.5" height="6.2" fill="#ff0000"/><rect x="1252.1" y="534.6" width="1.3" height="2.6" fill="#b8a400"/><rect x="1158.7" y="520.9" width="99.4" height="14.4" fill="none" stroke="#58b00a" stroke-width="1.9"/><text x="1196" y="531.5" font-size="12.5" fill="#58b00a" stroke="#58b00a" stroke-width="0.35" textLength="25.5" lengthAdjust="spacingAndGlyphs">J10</text><rect x="1342.9" y="535" width="6.1" height="6.2" fill="#ff0000"/><rect x="1376.2" y="509.6" width="12.6" height="5.2" fill="#ff0000"/><rect x="1378.2" y="509.6" width="8.6" height="5.2" fill="#b8a400"/><rect x="1379.9" y="509.6" width="5.2" height="5.2" fill="#58b00a"/><rect x="1381.2" y="510.8" width="2.6" height="2.8" fill="#000"/><rect x="1379.4" y="511.2" width="1.2" height="2" fill="#ff0000"/><rect x="1384.4" y="511.2" width="1.2" height="2" fill="#ff0000"/><rect x="1376.5" y="516.6" width="4.6" height="6.5" fill="#ff0000"/><rect x="1377.6" y="519.7" width="2.4" height="2.9" fill="#b8a400"/><rect x="1384.6" y="516.6" width="4.6" height="6.5" fill="#ff0000"/><rect x="1385.7" y="519.7" width="2.4" height="2.9" fill="#b8a400"/><rect x="1380.2" y="526.7" width="4.6" height="6.5" fill="#ff0000"/><rect x="1381.3" y="527.2" width="2.4" height="3.1" fill="#b8a400"/><rect x="1376" y="523" width="12.9" height="3.8" fill="none" stroke="#58b00a" stroke-width="1.7"/><rect x="1283.1" y="548.2" width="5.6" height="12.8" fill="#ff0000"/><rect x="1283.1" y="550.2" width="5.6" height="8.8" fill="#b8a400"/><rect x="1283.1" y="552" width="5.6" height="5.2" fill="#58b00a"/><rect x="1284.3" y="553.3" width="3.2" height="2.6" fill="#000"/><rect x="1284.9" y="551.4" width="2" height="1.2" fill="#ff0000"/><rect x="1284.9" y="556.6" width="2" height="1.2" fill="#ff0000"/><rect x="1290.2" y="548.2" width="5.6" height="12.8" fill="#ff0000"/><rect x="1290.2" y="550.2" width="5.6" height="8.8" fill="#b8a400"/><rect x="1290.2" y="552" width="5.6" height="5.2" fill="#58b00a"/><rect x="1291.4" y="553.3" width="3.2" height="2.6" fill="#000"/><rect x="1292" y="551.4" width="2" height="1.2" fill="#ff0000"/><rect x="1292" y="556.6" width="2" height="1.2" fill="#ff0000"/><rect x="1297.4" y="548.2" width="5.6" height="12.8" fill="#ff0000"/><rect x="1297.4" y="550.2" width="5.6" height="8.8" fill="#b8a400"/><rect x="1297.4" y="552" width="5.6" height="5.2" fill="#58b00a"/><rect x="1298.6" y="553.3" width="3.2" height="2.6" fill="#000"/><rect x="1299.2" y="551.4" width="2" height="1.2" fill="#ff0000"/><rect x="1299.2" y="556.6" width="2" height="1.2" fill="#ff0000"/><rect x="1304.5" y="548.2" width="5.6" height="12.8" fill="#ff0000"/><rect x="1304.5" y="550.2" width="5.6" height="8.8" fill="#b8a400"/><rect x="1304.5" y="552" width="5.6" height="5.2" fill="#58b00a"/><rect x="1305.7" y="553.3" width="3.2" height="2.6" fill="#000"/><rect x="1306.3" y="551.4" width="2" height="1.2" fill="#ff0000"/><rect x="1306.3" y="556.6" width="2" height="1.2" fill="#ff0000"/><rect x="1311.6" y="548.2" width="5.6" height="12.8" fill="#ff0000"/><rect x="1311.6" y="550.2" width="5.6" height="8.8" fill="#b8a400"/><rect x="1311.6" y="552" width="5.6" height="5.2" fill="#58b00a"/><rect x="1312.8" y="553.3" width="3.2" height="2.6" fill="#000"/><rect x="1313.4" y="551.4" width="2" height="1.2" fill="#ff0000"/><rect x="1313.4" y="556.6" width="2" height="1.2" fill="#ff0000"/><rect x="1318.8" y="548.2" width="5.6" height="12.8" fill="#ff0000"/><rect x="1318.8" y="550.2" width="5.6" height="8.8" fill="#b8a400"/><rect x="1318.8" y="552" width="5.6" height="5.2" fill="#58b00a"/><rect x="1320" y="553.3" width="3.2" height="2.6" fill="#000"/><rect x="1320.5" y="551.4" width="2" height="1.2" fill="#ff0000"/><rect x="1320.5" y="556.6" width="2" height="1.2" fill="#ff0000"/><rect x="1325.9" y="548.2" width="5.6" height="12.8" fill="#ff0000"/><rect x="1325.9" y="550.2" width="5.6" height="8.8" fill="#b8a400"/><rect x="1325.9" y="552" width="5.6" height="5.2" fill="#58b00a"/><rect x="1327.1" y="553.3" width="3.2" height="2.6" fill="#000"/><rect x="1327.7" y="551.4" width="2" height="1.2" fill="#ff0000"/><rect x="1327.7" y="556.6" width="2" height="1.2" fill="#ff0000"/><rect x="1333" y="548.2" width="5.6" height="12.8" fill="#ff0000"/><rect x="1333" y="550.2" width="5.6" height="8.8" fill="#b8a400"/><rect x="1333" y="552" width="5.6" height="5.2" fill="#58b00a"/><rect x="1334.2" y="553.3" width="3.2" height="2.6" fill="#000"/><rect x="1334.8" y="551.4" width="2" height="1.2" fill="#ff0000"/><rect x="1334.8" y="556.6" width="2" height="1.2" fill="#ff0000"/><rect x="1340.1" y="548.2" width="5.6" height="12.8" fill="#ff0000"/><rect x="1340.1" y="550.2" width="5.6" height="8.8" fill="#b8a400"/><rect x="1340.1" y="552" width="5.6" height="5.2" fill="#58b00a"/><rect x="1341.3" y="553.3" width="3.2" height="2.6" fill="#000"/><rect x="1341.9" y="551.4" width="2" height="1.2" fill="#ff0000"/><rect x="1341.9" y="556.6" width="2" height="1.2" fill="#ff0000"/><rect x="1347.3" y="548.2" width="5.6" height="12.8" fill="#ff0000"/><rect x="1347.3" y="550.2" width="5.6" height="8.8" fill="#b8a400"/><rect x="1347.3" y="552" width="5.6" height="5.2" fill="#58b00a"/><rect x="1348.5" y="553.3" width="3.2" height="2.6" fill="#000"/><rect x="1349.1" y="551.4" width="2" height="1.2" fill="#ff0000"/><rect x="1349.1" y="556.6" width="2" height="1.2" fill="#ff0000"/><rect x="1354.4" y="548.2" width="5.6" height="12.8" fill="#ff0000"/><rect x="1354.4" y="550.2" width="5.6" height="8.8" fill="#b8a400"/><rect x="1354.4" y="552" width="5.6" height="5.2" fill="#58b00a"/><rect x="1355.6" y="553.3" width="3.2" height="2.6" fill="#000"/><rect x="1356.2" y="551.4" width="2" height="1.2" fill="#ff0000"/><rect x="1356.2" y="556.6" width="2" height="1.2" fill="#ff0000"/><rect x="1361.5" y="548.2" width="5.6" height="12.8" fill="#ff0000"/><rect x="1361.5" y="550.2" width="5.6" height="8.8" fill="#b8a400"/><rect x="1361.5" y="552" width="5.6" height="5.2" fill="#58b00a"/><rect x="1362.7" y="553.3" width="3.2" height="2.6" fill="#000"/><rect x="1363.3" y="551.4" width="2" height="1.2" fill="#ff0000"/><rect x="1363.3" y="556.6" width="2" height="1.2" fill="#ff0000"/><rect x="1368.1" y="541.2" width="8.8" height="19.8" fill="#ff0000"/><rect x="1369.1" y="542.7" width="6.8" height="4.4" fill="#b8a400"/><rect x="1369.1" y="555.1" width="6.8" height="4.4" fill="#b8a400"/><rect x="1368.1" y="547.1" width="8.8" height="7.9" fill="#000"/><rect x="1369.8" y="546.1" width="5.4" height="10.1" fill="none" stroke="#58b00a" stroke-width="1.6"/><rect x="1391.3" y="538.2" width="12.7" height="5.2" fill="#ff0000"/><rect x="1393.3" y="538.2" width="8.7" height="5.2" fill="#b8a400"/><rect x="1395.1" y="538.2" width="5.2" height="5.2" fill="#58b00a"/><rect x="1396.4" y="539.4" width="2.6" height="2.8" fill="#000"/><rect x="1394.5" y="539.8" width="1.2" height="2" fill="#ff0000"/><rect x="1399.6" y="539.8" width="1.2" height="2" fill="#ff0000"/><rect x="1393.2" y="544.2" width="4.6" height="6" fill="#ff0000"/><rect x="1394.3" y="546.8" width="2.4" height="2.9" fill="#b8a400"/><rect x="1400.9" y="544.2" width="4.6" height="6" fill="#ff0000"/><rect x="1402" y="546.8" width="2.4" height="2.9" fill="#b8a400"/><rect x="1397.1" y="555.6" width="4.6" height="6" fill="#ff0000"/><rect x="1398.2" y="556.1" width="2.4" height="3.1" fill="#b8a400"/><rect x="1392.9" y="550.1" width="12.9" height="5.6" fill="none" stroke="#58b00a" stroke-width="1.7"/><rect x="1410.3" y="542.2" width="12.5" height="5.1" fill="#ff0000"/><rect x="1412.3" y="542.2" width="8.5" height="5.1" fill="#b8a400"/><rect x="1414" y="542.2" width="5.2" height="5.1" fill="#58b00a"/><rect x="1415.2" y="543.4" width="2.6" height="2.7" fill="#000"/><rect x="1413.5" y="543.8" width="1.2" height="2" fill="#ff0000"/><rect x="1418.4" y="543.8" width="1.2" height="2" fill="#ff0000"/><rect x="1411.3" y="550.6" width="4.6" height="5.8" fill="#ff0000"/><rect x="1412.4" y="553" width="2.4" height="2.9" fill="#b8a400"/><rect x="1418.7" y="550.6" width="4.6" height="5.8" fill="#ff0000"/><rect x="1419.8" y="553" width="2.4" height="2.9" fill="#b8a400"/><rect x="1414.2" y="560.5" width="4.6" height="5.8" fill="#ff0000"/><rect x="1415.3" y="561" width="2.4" height="3.1" fill="#b8a400"/><rect x="1410.1" y="556.3" width="12.8" height="4.3" fill="none" stroke="#58b00a" stroke-width="1.7"/><rect x="1393.2" y="563.1" width="12.6" height="5.4" fill="#ff0000"/><rect x="1395.2" y="563.1" width="8.6" height="5.4" fill="#b8a400"/><rect x="1396.9" y="563.1" width="5.2" height="5.4" fill="#58b00a"/><rect x="1398.2" y="564.3" width="2.6" height="3" fill="#000"/><rect x="1396.4" y="564.8" width="1.2" height="2" fill="#ff0000"/><rect x="1401.4" y="564.8" width="1.2" height="2" fill="#ff0000"/><rect x="1393.1" y="570.5" width="4.6" height="6" fill="#ff0000"/><rect x="1394.2" y="573.1" width="2.4" height="2.9" fill="#b8a400"/><rect x="1401.1" y="570.5" width="4.6" height="6" fill="#ff0000"/><rect x="1402.2" y="573.1" width="2.4" height="2.9" fill="#b8a400"/><rect x="1397.2" y="581.6" width="4.6" height="6" fill="#ff0000"/><rect x="1398.3" y="582.1" width="2.4" height="3.1" fill="#b8a400"/><rect x="1393.1" y="576.4" width="12.7" height="5.3" fill="none" stroke="#58b00a" stroke-width="1.7"/><rect x="1416.1" y="569" width="3.6" height="7" fill="#ff0000"/><rect x="1417.2" y="571.3" width="1.4" height="3.4" fill="#b8a400"/><rect x="1416.1" y="593.1" width="3.6" height="6.9" fill="#ff0000"/><rect x="1417.2" y="594.4" width="1.4" height="3.3" fill="#b8a400"/><rect x="1421.5" y="569" width="3.6" height="7" fill="#ff0000"/><rect x="1422.6" y="571.3" width="1.4" height="3.4" fill="#b8a400"/><rect x="1421.5" y="593.1" width="3.6" height="6.9" fill="#ff0000"/><rect x="1422.6" y="594.4" width="1.4" height="3.3" fill="#b8a400"/><rect x="1427.2" y="569" width="3.6" height="7" fill="#ff0000"/><rect x="1428.3" y="571.3" width="1.4" height="3.4" fill="#b8a400"/><rect x="1427.2" y="593.1" width="3.6" height="6.9" fill="#ff0000"/><rect x="1428.3" y="594.4" width="1.4" height="3.3" fill="#b8a400"/><rect x="1432.6" y="569" width="3.6" height="7" fill="#ff0000"/><rect x="1433.7" y="571.3" width="1.4" height="3.4" fill="#b8a400"/><rect x="1432.6" y="593.1" width="3.6" height="6.9" fill="#ff0000"/><rect x="1433.7" y="594.4" width="1.4" height="3.3" fill="#b8a400"/><rect x="1415.4" y="576.4" width="21.5" height="16.3" fill="none" stroke="#58b00a" stroke-width="1.9"/><rect x="1407" y="584.5" width="5" height="12" fill="#ff0000"/><rect x="1407" y="586.5" width="5" height="8" fill="#b8a400"/><rect x="1407" y="587.9" width="5" height="5.2" fill="#58b00a"/><rect x="1408.2" y="589.2" width="2.6" height="2.6" fill="#000"/><rect x="1408.5" y="587.7" width="2" height="1.2" fill="#ff0000"/><rect x="1408.5" y="592.1" width="2" height="1.2" fill="#ff0000"/><rect x="1399.2" y="604" width="12.5" height="5" fill="#ff0000"/><rect x="1401.2" y="604" width="8.5" height="5" fill="#b8a400"/><rect x="1402.9" y="604" width="5.2" height="5" fill="#58b00a"/><rect x="1404.2" y="605.2" width="2.6" height="2.6" fill="#000"/><rect x="1402.4" y="605.5" width="1.2" height="2" fill="#ff0000"/><rect x="1407.3" y="605.5" width="1.2" height="2" fill="#ff0000"/><rect x="1414" y="604" width="12.6" height="5" fill="#ff0000"/><rect x="1416" y="604" width="8.6" height="5" fill="#b8a400"/><rect x="1417.7" y="604" width="5.2" height="5" fill="#58b00a"/><rect x="1419" y="605.2" width="2.6" height="2.6" fill="#000"/><rect x="1417.2" y="605.5" width="1.2" height="2" fill="#ff0000"/><rect x="1422.2" y="605.5" width="1.2" height="2" fill="#ff0000"/><rect x="1429.1" y="604" width="12.6" height="5" fill="#ff0000"/><rect x="1431.1" y="604" width="8.6" height="5" fill="#b8a400"/><rect x="1432.8" y="604" width="5.2" height="5" fill="#58b00a"/><rect x="1434.1" y="605.2" width="2.6" height="2.6" fill="#000"/><rect x="1432.3" y="605.5" width="1.2" height="2" fill="#ff0000"/><rect x="1437.3" y="605.5" width="1.2" height="2" fill="#ff0000"/><rect x="1238" y="580.1" width="8" height="8.8" fill="#ff0000"/><circle shape-rendering="auto" cx="1253.4" cy="584.7" r="4.4" fill="#ff0000"/><circle shape-rendering="auto" cx="1265" cy="584.7" r="4.4" fill="#ff0000"/><rect x="1272.2" y="569.4" width="5.6" height="11.2" fill="#ff0000"/><rect x="1272.2" y="571.4" width="5.6" height="7.2" fill="#b8a400"/><rect x="1272.2" y="572.4" width="5.6" height="5.2" fill="#58b00a"/><rect x="1273.4" y="573.7" width="3.2" height="2.6" fill="#000"/><rect x="1274" y="572.6" width="2" height="1.2" fill="#ff0000"/><rect x="1274" y="576.2" width="2" height="1.2" fill="#ff0000"/><rect x="1284.2" y="564.8" width="4.6" height="5.6" fill="#ff0000"/><rect x="1285.3" y="567" width="2.4" height="2.9" fill="#b8a400"/><rect x="1280.2" y="575.3" width="4.6" height="5.6" fill="#ff0000"/><rect x="1281.3" y="575.8" width="2.4" height="3.1" fill="#b8a400"/><rect x="1288.2" y="575.3" width="4.6" height="5.6" fill="#ff0000"/><rect x="1289.3" y="575.8" width="2.4" height="3.1" fill="#b8a400"/><rect x="1280.2" y="570.3" width="12.4" height="5.1" fill="none" stroke="#58b00a" stroke-width="1.7"/><rect x="1295.2" y="565.7" width="12.6" height="5.4" fill="#ff0000"/><rect x="1297.2" y="565.7" width="8.6" height="5.4" fill="#b8a400"/><rect x="1298.9" y="565.7" width="5.2" height="5.4" fill="#58b00a"/><rect x="1300.2" y="566.9" width="2.6" height="3" fill="#000"/><rect x="1298.4" y="567.4" width="1.2" height="2" fill="#ff0000"/><rect x="1303.4" y="567.4" width="1.2" height="2" fill="#ff0000"/><rect x="1313.4" y="569" width="23.2" height="16.2" fill="#ff0000"/><rect x="1317" y="565.5" width="16" height="23.1" fill="#ff0000"/><rect x="1314.6" y="570" width="20.8" height="14.2" fill="#b8a400"/><rect x="1318" y="566.6" width="14" height="21" fill="#b8a400"/><rect x="1317.4" y="569.4" width="15.4" height="15.4" fill="#000"/><rect x="1319.9" y="571.6" width="11.4" height="11.7" fill="#ff0000"/><rect x="1316.1" y="568.2" width="17.7" height="17.7" fill="none" stroke="#58b00a" stroke-width="1.7"/><rect x="1318.6" y="570.5" width="13.6" height="13.7" fill="none" stroke="#58b00a" stroke-width="1.1"/><rect x="1341.3" y="566" width="12.2" height="5.3" fill="#ff0000"/><rect x="1343.3" y="566" width="8.2" height="5.3" fill="#b8a400"/><rect x="1344.8" y="566" width="5.2" height="5.3" fill="#58b00a"/><rect x="1346.1" y="567.2" width="2.6" height="2.9" fill="#000"/><rect x="1344.5" y="567.6" width="1.2" height="2" fill="#ff0000"/><rect x="1349.1" y="567.6" width="1.2" height="2" fill="#ff0000"/><rect x="1362.3" y="565.2" width="4.6" height="6.2" fill="#ff0000"/><rect x="1363.4" y="568" width="2.4" height="2.9" fill="#b8a400"/><rect x="1358.5" y="575.3" width="4.6" height="6.2" fill="#ff0000"/><rect x="1359.6" y="575.8" width="2.4" height="3.1" fill="#b8a400"/><rect x="1366.3" y="575.3" width="4.6" height="6.2" fill="#ff0000"/><rect x="1367.4" y="575.8" width="2.4" height="3.1" fill="#b8a400"/><rect x="1358.3" y="571.3" width="12.5" height="4.1" fill="none" stroke="#58b00a" stroke-width="1.7"/><rect x="1272.2" y="584.5" width="5.6" height="12" fill="#ff0000"/><rect x="1272.2" y="586.5" width="5.6" height="8" fill="#b8a400"/><rect x="1272.2" y="587.9" width="5.6" height="5.2" fill="#58b00a"/><rect x="1273.4" y="589.2" width="3.2" height="2.6" fill="#000"/><rect x="1274" y="587.7" width="2" height="1.2" fill="#ff0000"/><rect x="1274" y="592.1" width="2" height="1.2" fill="#ff0000"/><rect x="1279.3" y="584.5" width="5.4" height="12" fill="#ff0000"/><rect x="1279.3" y="586.5" width="5.4" height="8" fill="#b8a400"/><rect x="1279.3" y="587.9" width="5.4" height="5.2" fill="#58b00a"/><rect x="1280.5" y="589.2" width="3" height="2.6" fill="#000"/><rect x="1281" y="587.7" width="2" height="1.2" fill="#ff0000"/><rect x="1281" y="592.1" width="2" height="1.2" fill="#ff0000"/><rect x="1286.6" y="584.5" width="5.3" height="12" fill="#ff0000"/><rect x="1286.6" y="586.5" width="5.3" height="8" fill="#b8a400"/><rect x="1286.6" y="587.9" width="5.3" height="5.2" fill="#58b00a"/><rect x="1287.8" y="589.2" width="2.9" height="2.6" fill="#000"/><rect x="1288.2" y="587.7" width="2" height="1.2" fill="#ff0000"/><rect x="1288.2" y="592.1" width="2" height="1.2" fill="#ff0000"/><rect x="1293.8" y="584.5" width="5.4" height="12" fill="#ff0000"/><rect x="1293.8" y="586.5" width="5.4" height="8" fill="#b8a400"/><rect x="1293.8" y="587.9" width="5.4" height="5.2" fill="#58b00a"/><rect x="1295" y="589.2" width="3" height="2.6" fill="#000"/><rect x="1295.5" y="587.7" width="2" height="1.2" fill="#ff0000"/><rect x="1295.5" y="592.1" width="2" height="1.2" fill="#ff0000"/><rect x="1301.1" y="584.1" width="12.6" height="5.4" fill="#ff0000"/><rect x="1303.1" y="584.1" width="8.6" height="5.4" fill="#b8a400"/><rect x="1304.8" y="584.1" width="5.2" height="5.4" fill="#58b00a"/><rect x="1306.1" y="585.3" width="2.6" height="3" fill="#000"/><rect x="1304.3" y="585.8" width="1.2" height="2" fill="#ff0000"/><rect x="1309.3" y="585.8" width="1.2" height="2" fill="#ff0000"/><rect x="1336.3" y="584.1" width="12.2" height="5.4" fill="#ff0000"/><rect x="1338.3" y="584.1" width="8.2" height="5.4" fill="#b8a400"/><rect x="1339.8" y="584.1" width="5.2" height="5.4" fill="#58b00a"/><rect x="1341.1" y="585.3" width="2.6" height="3" fill="#000"/><rect x="1339.5" y="585.8" width="1.2" height="2" fill="#ff0000"/><rect x="1344.1" y="585.8" width="1.2" height="2" fill="#ff0000"/><rect x="1303" y="591.2" width="12.5" height="5.6" fill="#ff0000"/><rect x="1305" y="591.2" width="8.5" height="5.6" fill="#b8a400"/><rect x="1306.7" y="591.2" width="5.2" height="5.6" fill="#58b00a"/><rect x="1308" y="592.4" width="2.6" height="3.2" fill="#000"/><rect x="1306.2" y="593" width="1.2" height="2" fill="#ff0000"/><rect x="1311.1" y="593" width="1.2" height="2" fill="#ff0000"/><rect x="1318.1" y="591.2" width="12.5" height="5.6" fill="#ff0000"/><rect x="1320.1" y="591.2" width="8.5" height="5.6" fill="#b8a400"/><rect x="1321.8" y="591.2" width="5.2" height="5.6" fill="#58b00a"/><rect x="1323" y="592.4" width="2.6" height="3.2" fill="#000"/><rect x="1321.3" y="593" width="1.2" height="2" fill="#ff0000"/><rect x="1326.2" y="593" width="1.2" height="2" fill="#ff0000"/><rect x="1333.2" y="591.2" width="12.5" height="5.6" fill="#ff0000"/><rect x="1335.2" y="591.2" width="8.5" height="5.6" fill="#b8a400"/><rect x="1336.9" y="591.2" width="5.2" height="5.6" fill="#58b00a"/><rect x="1338.2" y="592.4" width="2.6" height="3.2" fill="#000"/><rect x="1336.4" y="593" width="1.2" height="2" fill="#ff0000"/><rect x="1341.3" y="593" width="1.2" height="2" fill="#ff0000"/><rect x="1351.1" y="584.5" width="5.1" height="12" fill="#ff0000"/><rect x="1351.1" y="586.5" width="5.1" height="8" fill="#b8a400"/><rect x="1351.1" y="587.9" width="5.1" height="5.2" fill="#58b00a"/><rect x="1352.3" y="589.2" width="2.7" height="2.6" fill="#000"/><rect x="1352.7" y="587.7" width="2" height="1.2" fill="#ff0000"/><rect x="1352.7" y="592.1" width="2" height="1.2" fill="#ff0000"/><rect x="1358" y="584.5" width="5.3" height="12" fill="#ff0000"/><rect x="1358" y="586.5" width="5.3" height="8" fill="#b8a400"/><rect x="1358" y="587.9" width="5.3" height="5.2" fill="#58b00a"/><rect x="1359.2" y="589.2" width="2.9" height="2.6" fill="#000"/><rect x="1359.7" y="587.7" width="2" height="1.2" fill="#ff0000"/><rect x="1359.7" y="592.1" width="2" height="1.2" fill="#ff0000"/><rect x="1365.2" y="584.5" width="4.8" height="12" fill="#ff0000"/><rect x="1365.2" y="586.5" width="4.8" height="8" fill="#b8a400"/><rect x="1365.2" y="587.9" width="4.8" height="5.2" fill="#58b00a"/><rect x="1366.4" y="589.2" width="2.4" height="2.6" fill="#000"/><rect x="1366.6" y="587.7" width="2" height="1.2" fill="#ff0000"/><rect x="1366.6" y="592.1" width="2" height="1.2" fill="#ff0000"/><rect x="1165.2" y="569.3" width="3.6" height="6.7" fill="#ff0000"/><rect x="1166.3" y="571.6" width="1.4" height="3.1" fill="#b8a400"/><rect x="1165.2" y="593" width="3.6" height="7" fill="#ff0000"/><rect x="1166.3" y="594.3" width="1.4" height="3.4" fill="#b8a400"/><rect x="1170.6" y="569.3" width="3.6" height="6.7" fill="#ff0000"/><rect x="1171.7" y="571.6" width="1.4" height="3.1" fill="#b8a400"/><rect x="1170.6" y="593" width="3.6" height="7" fill="#ff0000"/><rect x="1171.7" y="594.3" width="1.4" height="3.4" fill="#b8a400"/><rect x="1176.2" y="569.3" width="3.6" height="6.7" fill="#ff0000"/><rect x="1177.3" y="571.6" width="1.4" height="3.1" fill="#b8a400"/><rect x="1176.2" y="593" width="3.6" height="7" fill="#ff0000"/><rect x="1177.3" y="594.3" width="1.4" height="3.4" fill="#b8a400"/><rect x="1181.5" y="569.3" width="3.6" height="6.7" fill="#ff0000"/><rect x="1182.6" y="571.6" width="1.4" height="3.1" fill="#b8a400"/><rect x="1181.5" y="593" width="3.6" height="7" fill="#ff0000"/><rect x="1182.6" y="594.3" width="1.4" height="3.4" fill="#b8a400"/><rect x="1164.2" y="576.4" width="21.7" height="16.2" fill="none" stroke="#58b00a" stroke-width="1.9"/><rect x="1156.3" y="578.1" width="5.8" height="12.8" fill="#ff0000"/><rect x="1156.3" y="580.1" width="5.8" height="8.8" fill="#b8a400"/><rect x="1156.3" y="581.9" width="5.8" height="5.2" fill="#58b00a"/><rect x="1157.5" y="583.2" width="3.4" height="2.6" fill="#000"/><rect x="1158.2" y="581.3" width="2" height="1.2" fill="#ff0000"/><rect x="1158.2" y="586.5" width="2" height="1.2" fill="#ff0000"/><rect x="1206.1" y="578.1" width="12.6" height="5" fill="#ff0000"/><rect x="1208.1" y="578.1" width="8.6" height="5" fill="#b8a400"/><rect x="1209.8" y="578.1" width="5.2" height="5" fill="#58b00a"/><rect x="1211.1" y="579.3" width="2.6" height="2.6" fill="#000"/><rect x="1209.3" y="579.6" width="1.2" height="2" fill="#ff0000"/><rect x="1214.3" y="579.6" width="1.2" height="2" fill="#ff0000"/><rect x="1192.3" y="585" width="4.6" height="6.2" fill="#ff0000"/><rect x="1193.4" y="587.8" width="2.4" height="2.9" fill="#b8a400"/><rect x="1200.9" y="585" width="4.6" height="6.2" fill="#ff0000"/><rect x="1202" y="587.8" width="2.4" height="2.9" fill="#b8a400"/><rect x="1207.4" y="585" width="4.6" height="6.2" fill="#ff0000"/><rect x="1208.5" y="587.8" width="2.4" height="2.9" fill="#b8a400"/><rect x="1214.1" y="585" width="4.6" height="6.2" fill="#ff0000"/><rect x="1215.2" y="587.8" width="2.4" height="2.9" fill="#b8a400"/><rect x="1196.3" y="595.8" width="4.6" height="6.2" fill="#ff0000"/><rect x="1197.4" y="596.3" width="2.4" height="3.1" fill="#b8a400"/><rect x="1210.2" y="595.8" width="4.6" height="6.2" fill="#ff0000"/><rect x="1211.3" y="596.3" width="2.4" height="3.1" fill="#b8a400"/><rect x="1192.1" y="591.1" width="26.8" height="4.8" fill="none" stroke="#58b00a" stroke-width="1.7"/><rect x="1204.4" y="590.2" width="2" height="6.6" fill="#58b00a"/><rect x="1157.5" y="604.1" width="12.4" height="4.8" fill="#ff0000"/><rect x="1159.5" y="604.1" width="8.4" height="4.8" fill="#b8a400"/><rect x="1161.1" y="604.1" width="5.2" height="4.8" fill="#58b00a"/><rect x="1162.4" y="605.3" width="2.6" height="2.4" fill="#000"/><rect x="1160.7" y="605.5" width="1.2" height="2" fill="#ff0000"/><rect x="1165.5" y="605.5" width="1.2" height="2" fill="#ff0000"/><rect x="1172.4" y="604.1" width="12.5" height="4.8" fill="#ff0000"/><rect x="1174.4" y="604.1" width="8.5" height="4.8" fill="#b8a400"/><rect x="1176.1" y="604.1" width="5.2" height="4.8" fill="#58b00a"/><rect x="1177.4" y="605.3" width="2.6" height="2.4" fill="#000"/><rect x="1175.6" y="605.5" width="1.2" height="2" fill="#ff0000"/><rect x="1180.5" y="605.5" width="1.2" height="2" fill="#ff0000"/><rect x="1187.5" y="604.1" width="12.5" height="4.8" fill="#ff0000"/><rect x="1189.5" y="604.1" width="8.5" height="4.8" fill="#b8a400"/><rect x="1191.2" y="604.1" width="5.2" height="4.8" fill="#58b00a"/><rect x="1192.5" y="605.3" width="2.6" height="2.4" fill="#000"/><rect x="1190.7" y="605.5" width="1.2" height="2" fill="#ff0000"/><rect x="1195.6" y="605.5" width="1.2" height="2" fill="#ff0000"/><g shape-rendering="auto"><circle cx="1175.1" cy="628.5" r="4.1" fill="#ff0000"/><circle cx="1175.1" cy="628.5" r="2" fill="none" stroke="#b8a400" stroke-width="1.1"/></g><g shape-rendering="auto"><circle cx="1184.2" cy="628.5" r="4.1" fill="#ff0000"/><circle cx="1184.2" cy="628.5" r="2" fill="none" stroke="#b8a400" stroke-width="1.1"/></g><g shape-rendering="auto"><circle cx="1193.4" cy="628.5" r="4.1" fill="#ff0000"/><circle cx="1193.4" cy="628.5" r="2" fill="none" stroke="#b8a400" stroke-width="1.1"/></g><g shape-rendering="auto"><circle cx="1170.4" cy="637.7" r="4.1" fill="#ff0000"/><circle cx="1170.4" cy="637.7" r="2" fill="none" stroke="#b8a400" stroke-width="1.1"/></g><g shape-rendering="auto"><circle cx="1179.5" cy="637.7" r="4.1" fill="#ff0000"/><circle cx="1179.5" cy="637.7" r="2" fill="none" stroke="#b8a400" stroke-width="1.1"/></g><g shape-rendering="auto"><circle cx="1188.8" cy="637.7" r="4.1" fill="#ff0000"/><circle cx="1188.8" cy="637.7" r="2" fill="none" stroke="#b8a400" stroke-width="1.1"/></g><rect x="1155.4" y="611.6" width="52.6" height="71.4" fill="none" stroke="#58b00a" stroke-width="2"/><text x="1173" y="650.3" font-size="12.5" fill="#58b00a" stroke="#58b00a" stroke-width="0.35" textLength="16.5" lengthAdjust="spacingAndGlyphs">J8</text><g shape-rendering="auto"><circle cx="1160.7" cy="650.6" r="7.4" fill="none" stroke="#d8a0f0" stroke-width="1.1"/><circle cx="1202.5" cy="650.6" r="7.4" fill="none" stroke="#d8a0f0" stroke-width="1.1"/><path d="M1153.3 650.6 A7.4 7.4 0 0 1 1165.5 645" fill="none" stroke="#a020f0" stroke-width="1.1"/><path d="M1195.1 650.6 A7.4 7.4 0 0 1 1207.3 645" fill="none" stroke="#a020f0" stroke-width="1.1"/></g><rect x="1160.3" y="650.2" width="0.8" height="0.8" fill="#ff0000"/><rect x="1202.1" y="650.2" width="0.8" height="0.8" fill="#ff0000"/><g shape-rendering="auto"><circle cx="1233.2" cy="628.5" r="4.1" fill="#ff0000"/><circle cx="1233.2" cy="628.5" r="2" fill="none" stroke="#b8a400" stroke-width="1.1"/></g><g shape-rendering="auto"><circle cx="1242.3" cy="628.5" r="4.1" fill="#ff0000"/><circle cx="1242.3" cy="628.5" r="2" fill="none" stroke="#b8a400" stroke-width="1.1"/></g><g shape-rendering="auto"><circle cx="1251.5" cy="628.5" r="4.1" fill="#ff0000"/><circle cx="1251.5" cy="628.5" r="2" fill="none" stroke="#b8a400" stroke-width="1.1"/></g><g shape-rendering="auto"><circle cx="1228.5" cy="637.7" r="4.1" fill="#ff0000"/><circle cx="1228.5" cy="637.7" r="2" fill="none" stroke="#b8a400" stroke-width="1.1"/></g><g shape-rendering="auto"><circle cx="1237.6" cy="637.7" r="4.1" fill="#ff0000"/><circle cx="1237.6" cy="637.7" r="2" fill="none" stroke="#b8a400" stroke-width="1.1"/></g><g shape-rendering="auto"><circle cx="1246.9" cy="637.7" r="4.1" fill="#ff0000"/><circle cx="1246.9" cy="637.7" r="2" fill="none" stroke="#b8a400" stroke-width="1.1"/></g><rect x="1213.5" y="611.6" width="52.6" height="71.4" fill="none" stroke="#58b00a" stroke-width="2"/><text x="1231.1" y="650.3" font-size="12.5" fill="#58b00a" stroke="#58b00a" stroke-width="0.35" textLength="16.5" lengthAdjust="spacingAndGlyphs">J3</text><g shape-rendering="auto"><circle cx="1218.8" cy="650.6" r="7.4" fill="none" stroke="#d8a0f0" stroke-width="1.1"/><circle cx="1260.6" cy="650.6" r="7.4" fill="none" stroke="#d8a0f0" stroke-width="1.1"/><path d="M1211.3999999999999 650.6 A7.4 7.4 0 0 1 1223.6 645" fill="none" stroke="#a020f0" stroke-width="1.1"/><path d="M1253.1999999999998 650.6 A7.4 7.4 0 0 1 1265.3999999999999 645" fill="none" stroke="#a020f0" stroke-width="1.1"/></g><rect x="1218.4" y="650.2" width="0.8" height="0.8" fill="#ff0000"/><rect x="1260.2" y="650.2" width="0.8" height="0.8" fill="#ff0000"/><g shape-rendering="auto"><circle cx="1292" cy="628.5" r="4.1" fill="#ff0000"/><circle cx="1292" cy="628.5" r="2" fill="none" stroke="#b8a400" stroke-width="1.1"/></g><g shape-rendering="auto"><circle cx="1301.1" cy="628.5" r="4.1" fill="#ff0000"/><circle cx="1301.1" cy="628.5" r="2" fill="none" stroke="#b8a400" stroke-width="1.1"/></g><g shape-rendering="auto"><circle cx="1310.3" cy="628.5" r="4.1" fill="#ff0000"/><circle cx="1310.3" cy="628.5" r="2" fill="none" stroke="#b8a400" stroke-width="1.1"/></g><g shape-rendering="auto"><circle cx="1287.3" cy="637.7" r="4.1" fill="#ff0000"/><circle cx="1287.3" cy="637.7" r="2" fill="none" stroke="#b8a400" stroke-width="1.1"/></g><g shape-rendering="auto"><circle cx="1296.4" cy="637.7" r="4.1" fill="#ff0000"/><circle cx="1296.4" cy="637.7" r="2" fill="none" stroke="#b8a400" stroke-width="1.1"/></g><g shape-rendering="auto"><circle cx="1305.7" cy="637.7" r="4.1" fill="#ff0000"/><circle cx="1305.7" cy="637.7" r="2" fill="none" stroke="#b8a400" stroke-width="1.1"/></g><rect x="1272.3" y="611.6" width="52.6" height="71.4" fill="none" stroke="#58b00a" stroke-width="2"/><text x="1290" y="650.3" font-size="12.5" fill="#58b00a" stroke="#58b00a" stroke-width="0.35" textLength="16.5" lengthAdjust="spacingAndGlyphs">J4</text><g shape-rendering="auto"><circle cx="1277.6000000000001" cy="650.6" r="7.4" fill="none" stroke="#d8a0f0" stroke-width="1.1"/><circle cx="1319.4" cy="650.6" r="7.4" fill="none" stroke="#d8a0f0" stroke-width="1.1"/><path d="M1270.2 650.6 A7.4 7.4 0 0 1 1282.4 645" fill="none" stroke="#a020f0" stroke-width="1.1"/><path d="M1312.0 650.6 A7.4 7.4 0 0 1 1324.2 645" fill="none" stroke="#a020f0" stroke-width="1.1"/></g><rect x="1277.2" y="650.2" width="0.8" height="0.8" fill="#ff0000"/><rect x="1319" y="650.2" width="0.8" height="0.8" fill="#ff0000"/><g shape-rendering="auto"><circle cx="1350" cy="628.5" r="4.1" fill="#ff0000"/><circle cx="1350" cy="628.5" r="2" fill="none" stroke="#b8a400" stroke-width="1.1"/></g><g shape-rendering="auto"><circle cx="1359.1" cy="628.5" r="4.1" fill="#ff0000"/><circle cx="1359.1" cy="628.5" r="2" fill="none" stroke="#b8a400" stroke-width="1.1"/></g><g shape-rendering="auto"><circle cx="1368.3" cy="628.5" r="4.1" fill="#ff0000"/><circle cx="1368.3" cy="628.5" r="2" fill="none" stroke="#b8a400" stroke-width="1.1"/></g><g shape-rendering="auto"><circle cx="1345.3" cy="637.7" r="4.1" fill="#ff0000"/><circle cx="1345.3" cy="637.7" r="2" fill="none" stroke="#b8a400" stroke-width="1.1"/></g><g shape-rendering="auto"><circle cx="1354.4" cy="637.7" r="4.1" fill="#ff0000"/><circle cx="1354.4" cy="637.7" r="2" fill="none" stroke="#b8a400" stroke-width="1.1"/></g><g shape-rendering="auto"><circle cx="1363.7" cy="637.7" r="4.1" fill="#ff0000"/><circle cx="1363.7" cy="637.7" r="2" fill="none" stroke="#b8a400" stroke-width="1.1"/></g><rect x="1330.3" y="611.6" width="52.6" height="71.4" fill="none" stroke="#58b00a" stroke-width="2"/><text x="1348" y="650.3" font-size="12.5" fill="#58b00a" stroke="#58b00a" stroke-width="0.35" textLength="16.5" lengthAdjust="spacingAndGlyphs">J5</text><g shape-rendering="auto"><circle cx="1335.6000000000001" cy="650.6" r="7.4" fill="none" stroke="#d8a0f0" stroke-width="1.1"/><circle cx="1377.4" cy="650.6" r="7.4" fill="none" stroke="#d8a0f0" stroke-width="1.1"/><path d="M1328.2 650.6 A7.4 7.4 0 0 1 1340.4 645" fill="none" stroke="#a020f0" stroke-width="1.1"/><path d="M1370.0 650.6 A7.4 7.4 0 0 1 1382.2 645" fill="none" stroke="#a020f0" stroke-width="1.1"/></g><rect x="1335.2" y="650.2" width="0.8" height="0.8" fill="#ff0000"/><rect x="1377" y="650.2" width="0.8" height="0.8" fill="#ff0000"/><g shape-rendering="auto"><circle cx="1407.9" cy="628.5" r="4.1" fill="#ff0000"/><circle cx="1407.9" cy="628.5" r="2" fill="none" stroke="#b8a400" stroke-width="1.1"/></g><g shape-rendering="auto"><circle cx="1417" cy="628.5" r="4.1" fill="#ff0000"/><circle cx="1417" cy="628.5" r="2" fill="none" stroke="#b8a400" stroke-width="1.1"/></g><g shape-rendering="auto"><circle cx="1426.2" cy="628.5" r="4.1" fill="#ff0000"/><circle cx="1426.2" cy="628.5" r="2" fill="none" stroke="#b8a400" stroke-width="1.1"/></g><g shape-rendering="auto"><circle cx="1403.2" cy="637.7" r="4.1" fill="#ff0000"/><circle cx="1403.2" cy="637.7" r="2" fill="none" stroke="#b8a400" stroke-width="1.1"/></g><g shape-rendering="auto"><circle cx="1412.3" cy="637.7" r="4.1" fill="#ff0000"/><circle cx="1412.3" cy="637.7" r="2" fill="none" stroke="#b8a400" stroke-width="1.1"/></g><g shape-rendering="auto"><circle cx="1421.6" cy="637.7" r="4.1" fill="#ff0000"/><circle cx="1421.6" cy="637.7" r="2" fill="none" stroke="#b8a400" stroke-width="1.1"/></g><rect x="1388.2" y="611.6" width="52.6" height="71.4" fill="none" stroke="#58b00a" stroke-width="2"/><text x="1405.8" y="650.3" font-size="12.5" fill="#58b00a" stroke="#58b00a" stroke-width="0.35" textLength="16.5" lengthAdjust="spacingAndGlyphs">J9</text><g shape-rendering="auto"><circle cx="1393.5" cy="650.6" r="7.4" fill="none" stroke="#d8a0f0" stroke-width="1.1"/><circle cx="1435.3" cy="650.6" r="7.4" fill="none" stroke="#d8a0f0" stroke-width="1.1"/><path d="M1386.1 650.6 A7.4 7.4 0 0 1 1398.3 645" fill="none" stroke="#a020f0" stroke-width="1.1"/><path d="M1427.8999999999999 650.6 A7.4 7.4 0 0 1 1440.1 645" fill="none" stroke="#a020f0" stroke-width="1.1"/></g><rect x="1393.1" y="650.2" width="0.8" height="0.8" fill="#ff0000"/><rect x="1434.9" y="650.2" width="0.8" height="0.8" fill="#ff0000"/><rect x="1487.3" y="464.2" width="12.5" height="5.1" fill="#ff0000"/><rect x="1489.3" y="464.2" width="8.5" height="5.1" fill="#b8a400"/><rect x="1491" y="464.2" width="5.2" height="5.1" fill="#58b00a"/><rect x="1492.2" y="465.4" width="2.6" height="2.7" fill="#000"/><rect x="1490.5" y="465.8" width="1.2" height="2" fill="#ff0000"/><rect x="1495.4" y="465.8" width="1.2" height="2" fill="#ff0000"/><rect x="1487.3" y="471.2" width="12.5" height="5.5" fill="#ff0000"/><rect x="1489.3" y="471.2" width="8.5" height="5.5" fill="#b8a400"/><rect x="1491" y="471.2" width="5.2" height="5.5" fill="#58b00a"/><rect x="1492.2" y="472.4" width="2.6" height="3.1" fill="#000"/><rect x="1490.5" y="472.9" width="1.2" height="2" fill="#ff0000"/><rect x="1495.4" y="472.9" width="1.2" height="2" fill="#ff0000"/><rect x="1487.3" y="478.9" width="12.5" height="5.1" fill="#ff0000"/><rect x="1489.3" y="478.9" width="8.5" height="5.1" fill="#b8a400"/><rect x="1491" y="478.9" width="5.2" height="5.1" fill="#58b00a"/><rect x="1492.2" y="480.1" width="2.6" height="2.7" fill="#000"/><rect x="1490.5" y="480.4" width="1.2" height="2" fill="#ff0000"/><rect x="1495.4" y="480.4" width="1.2" height="2" fill="#ff0000"/><rect x="1502.2" y="471.2" width="4.9" height="12.8" fill="#ff0000"/><rect x="1502.2" y="473.2" width="4.9" height="8.8" fill="#b8a400"/><rect x="1502.2" y="475" width="4.9" height="5.2" fill="#58b00a"/><rect x="1503.4" y="476.3" width="2.5" height="2.6" fill="#000"/><rect x="1503.7" y="474.4" width="2" height="1.2" fill="#ff0000"/><rect x="1503.7" y="479.6" width="2" height="1.2" fill="#ff0000"/><rect x="1469.7" y="478.4" width="5.4" height="12.6" fill="#ff0000"/><rect x="1469.7" y="480.4" width="5.4" height="8.6" fill="#b8a400"/><rect x="1469.7" y="482.1" width="5.4" height="5.2" fill="#58b00a"/><rect x="1470.9" y="483.4" width="3" height="2.6" fill="#000"/><rect x="1471.4" y="481.6" width="2" height="1.2" fill="#ff0000"/><rect x="1471.4" y="486.6" width="2" height="1.2" fill="#ff0000"/><rect x="1477.3" y="485.9" width="12.5" height="5.4" fill="#ff0000"/><rect x="1479.3" y="485.9" width="8.5" height="5.4" fill="#b8a400"/><rect x="1481" y="485.9" width="5.2" height="5.4" fill="#58b00a"/><rect x="1482.2" y="487.1" width="2.6" height="3" fill="#000"/><rect x="1480.5" y="487.6" width="1.2" height="2" fill="#ff0000"/><rect x="1485.4" y="487.6" width="1.2" height="2" fill="#ff0000"/><rect x="1494.3" y="485.9" width="12.8" height="5.4" fill="#ff0000"/><rect x="1496.3" y="485.9" width="8.8" height="5.4" fill="#b8a400"/><rect x="1498.1" y="485.9" width="5.2" height="5.4" fill="#58b00a"/><rect x="1499.4" y="487.1" width="2.6" height="3" fill="#000"/><rect x="1497.5" y="487.6" width="1.2" height="2" fill="#ff0000"/><rect x="1502.7" y="487.6" width="1.2" height="2" fill="#ff0000"/><rect x="1519.2" y="462.2" width="12.5" height="4.8" fill="#ff0000"/><rect x="1521.2" y="462.2" width="8.5" height="4.8" fill="#b8a400"/><rect x="1522.9" y="462.2" width="5.2" height="4.8" fill="#58b00a"/><rect x="1524.2" y="463.4" width="2.6" height="2.4" fill="#000"/><rect x="1522.4" y="463.6" width="1.2" height="2" fill="#ff0000"/><rect x="1527.3" y="463.6" width="1.2" height="2" fill="#ff0000"/><rect x="1534.3" y="462.2" width="12.8" height="4.8" fill="#ff0000"/><rect x="1536.3" y="462.2" width="8.8" height="4.8" fill="#b8a400"/><rect x="1538.1" y="462.2" width="5.2" height="4.8" fill="#58b00a"/><rect x="1539.4" y="463.4" width="2.6" height="2.4" fill="#000"/><rect x="1537.5" y="463.6" width="1.2" height="2" fill="#ff0000"/><rect x="1542.7" y="463.6" width="1.2" height="2" fill="#ff0000"/><rect x="1511.2" y="471.6" width="10.2" height="3.8" fill="#ff0000"/><rect x="1534.3" y="471.6" width="10.3" height="3.8" fill="#ff0000"/><rect x="1513.5" y="472.6" width="6" height="1.8" fill="none" stroke="#b8a400" stroke-width="0.9"/><rect x="1536" y="472.6" width="6" height="1.8" fill="none" stroke="#b8a400" stroke-width="0.9"/><rect x="1511.2" y="477.1" width="10.2" height="3.8" fill="#ff0000"/><rect x="1534.3" y="477.1" width="10.3" height="3.8" fill="#ff0000"/><rect x="1513.5" y="478.1" width="6" height="1.8" fill="none" stroke="#b8a400" stroke-width="0.9"/><rect x="1536" y="478.1" width="6" height="1.8" fill="none" stroke="#b8a400" stroke-width="0.9"/><rect x="1511.2" y="482.6" width="10.2" height="3.8" fill="#ff0000"/><rect x="1534.3" y="482.6" width="10.3" height="3.8" fill="#ff0000"/><rect x="1513.5" y="483.6" width="6" height="1.8" fill="none" stroke="#b8a400" stroke-width="0.9"/><rect x="1536" y="483.6" width="6" height="1.8" fill="none" stroke="#b8a400" stroke-width="0.9"/><rect x="1511.2" y="488.1" width="10.2" height="3.8" fill="#ff0000"/><rect x="1534.3" y="488.1" width="10.3" height="3.8" fill="#ff0000"/><rect x="1513.5" y="489.1" width="6" height="1.8" fill="none" stroke="#b8a400" stroke-width="0.9"/><rect x="1536" y="489.1" width="6" height="1.8" fill="none" stroke="#b8a400" stroke-width="0.9"/><rect x="1519.4" y="470.4" width="16.5" height="21.4" fill="none" stroke="#58b00a" stroke-width="1.9"/><rect x="1549" y="463.2" width="5.9" height="12.6" fill="#ff0000"/><rect x="1549" y="465.2" width="5.9" height="8.6" fill="#b8a400"/><rect x="1549" y="466.9" width="5.9" height="5.2" fill="#58b00a"/><rect x="1550.2" y="468.2" width="3.5" height="2.6" fill="#000"/><rect x="1551" y="466.4" width="2" height="1.2" fill="#ff0000"/><rect x="1551" y="471.4" width="2" height="1.2" fill="#ff0000"/><rect x="1556.4" y="467.4" width="6" height="4.6" fill="#ff0000"/><rect x="1559" y="468.5" width="2.9" height="2.4" fill="#b8a400"/><rect x="1567.6" y="463.2" width="6" height="4.6" fill="#ff0000"/><rect x="1568.1" y="464.3" width="3.1" height="2.4" fill="#b8a400"/><rect x="1567.6" y="471.3" width="6" height="4.6" fill="#ff0000"/><rect x="1568.1" y="472.4" width="3.1" height="2.4" fill="#b8a400"/><rect x="1562.3" y="463.1" width="5.4" height="12.8" fill="none" stroke="#58b00a" stroke-width="1.7"/><rect x="1575.7" y="462.2" width="5.1" height="12.7" fill="#ff0000"/><rect x="1575.7" y="464.2" width="5.1" height="8.7" fill="#b8a400"/><rect x="1575.7" y="465.9" width="5.1" height="5.2" fill="#58b00a"/><rect x="1576.9" y="467.2" width="2.7" height="2.6" fill="#000"/><rect x="1577.2" y="465.4" width="2" height="1.2" fill="#ff0000"/><rect x="1577.2" y="470.5" width="2" height="1.2" fill="#ff0000"/><rect x="1549" y="478.3" width="5.4" height="12.9" fill="#ff0000"/><rect x="1549" y="480.3" width="5.4" height="8.9" fill="#b8a400"/><rect x="1549" y="482.1" width="5.4" height="5.2" fill="#58b00a"/><rect x="1550.2" y="483.4" width="3" height="2.6" fill="#000"/><rect x="1550.7" y="481.5" width="2" height="1.2" fill="#ff0000"/><rect x="1550.7" y="486.8" width="2" height="1.2" fill="#ff0000"/><rect x="1556.3" y="478.3" width="4.7" height="12.9" fill="#ff0000"/><rect x="1556.3" y="480.3" width="4.7" height="8.9" fill="#b8a400"/><rect x="1556.3" y="482.1" width="4.7" height="5.2" fill="#58b00a"/><rect x="1557.5" y="483.4" width="2.3" height="2.6" fill="#000"/><rect x="1557.7" y="481.5" width="2" height="1.2" fill="#ff0000"/><rect x="1557.7" y="486.8" width="2" height="1.2" fill="#ff0000"/><rect x="1563.2" y="478.3" width="5.1" height="12.9" fill="#ff0000"/><rect x="1563.2" y="480.3" width="5.1" height="8.9" fill="#b8a400"/><rect x="1563.2" y="482.1" width="5.1" height="5.2" fill="#58b00a"/><rect x="1564.4" y="483.4" width="2.7" height="2.6" fill="#000"/><rect x="1564.8" y="481.5" width="2" height="1.2" fill="#ff0000"/><rect x="1564.8" y="486.8" width="2" height="1.2" fill="#ff0000"/><rect x="1575.2" y="477.7" width="4.6" height="6" fill="#ff0000"/><rect x="1576.3" y="480.3" width="2.4" height="2.9" fill="#b8a400"/><rect x="1571.7" y="487.9" width="4.6" height="6" fill="#ff0000"/><rect x="1572.8" y="488.4" width="2.4" height="3.1" fill="#b8a400"/><rect x="1579.1" y="487.9" width="4.6" height="6" fill="#ff0000"/><rect x="1580.2" y="488.4" width="2.4" height="3.1" fill="#b8a400"/><rect x="1571.4" y="483.6" width="12.5" height="4.4" fill="none" stroke="#58b00a" stroke-width="1.7"/><rect x="1606.2" y="498.1" width="12.7" height="5.1" fill="#ff0000"/><rect x="1608.2" y="498.1" width="8.7" height="5.1" fill="#b8a400"/><rect x="1610" y="498.1" width="5.2" height="5.1" fill="#58b00a"/><rect x="1611.3" y="499.3" width="2.6" height="2.7" fill="#000"/><rect x="1609.4" y="499.6" width="1.2" height="2" fill="#ff0000"/><rect x="1614.5" y="499.6" width="1.2" height="2" fill="#ff0000"/><rect x="1596.8" y="508.3" width="8" height="5.6" fill="#ff0000"/><rect x="1596.8" y="522.3" width="8" height="5.6" fill="#ff0000"/><rect x="1619.2" y="508.3" width="8" height="5.6" fill="#ff0000"/><rect x="1619.2" y="522.3" width="8" height="5.6" fill="#ff0000"/><path shape-rendering="geometricPrecision" d="M1601.1 510.3 L1604.1 507.3 H1622.9 V528.9 H1601.1 Z" fill="none" stroke="#58b00a" stroke-width="2"/><rect x="1600" y="508.3" width="4.8" height="5.6" fill="#b8a400"/><rect x="1601.7" y="509.6" width="2" height="3" fill="#ff0000"/><rect x="1600" y="522.3" width="4.8" height="5.6" fill="#b8a400"/><rect x="1601.7" y="523.6" width="2" height="3" fill="#ff0000"/><rect x="1619.2" y="508.3" width="4.8" height="5.6" fill="#b8a400"/><rect x="1620.3" y="509.6" width="2" height="3" fill="#ff0000"/><rect x="1619.2" y="522.3" width="4.8" height="5.6" fill="#b8a400"/><rect x="1620.3" y="523.6" width="2" height="3" fill="#ff0000"/><rect x="1419.9" y="494" width="22" height="6.1" fill="#ff0000"/><rect x="1419.9" y="513.7" width="22" height="5.9" fill="#ff0000"/><rect x="1417.8" y="493.6" width="23.6" height="8.4" fill="none" stroke="#b8a400" stroke-width="1.2"/><rect x="1417.8" y="511.8" width="23.6" height="8" fill="none" stroke="#b8a400" stroke-width="1.2"/><rect x="1416.4" y="493.2" width="26.3" height="26.5" fill="none" stroke="#58b00a" stroke-width="1.9"/><rect x="1446.2" y="501.6" width="11" height="10.2" fill="#ff0000"/><rect x="1474.1" y="501.6" width="12.5" height="10.2" fill="#ff0000"/><rect x="1450.3" y="497.2" width="31.6" height="18.5" fill="none" stroke="#58b00a" stroke-width="1.9"/><text x="1453.6" y="510.6" font-size="12.5" fill="#58b00a" stroke="#58b00a" stroke-width="0.35" textLength="24.9" lengthAdjust="spacingAndGlyphs">C48</text><rect x="1491.2" y="507.4" width="12.7" height="17.3" fill="#ff0000"/><rect x="1492.2" y="508.9" width="10.7" height="3.7" fill="#b8a400"/><rect x="1492.2" y="519.5" width="10.7" height="3.7" fill="#b8a400"/><rect x="1491.2" y="512.6" width="12.7" height="6.9" fill="#000"/><rect x="1492.9" y="511.8" width="9.3" height="8.6" fill="none" stroke="#58b00a" stroke-width="1.6"/><rect x="1470.1" y="520" width="12.8" height="5.8" fill="#ff0000"/><rect x="1472.1" y="520" width="8.8" height="5.8" fill="#b8a400"/><rect x="1473.9" y="520" width="5.2" height="5.8" fill="#58b00a"/><rect x="1475.2" y="521.2" width="2.6" height="3.4" fill="#000"/><rect x="1473.3" y="521.9" width="1.2" height="2" fill="#ff0000"/><rect x="1478.5" y="521.9" width="1.2" height="2" fill="#ff0000"/><rect x="1517" y="500" width="8.1" height="15" fill="#ff0000"/><rect x="1517" y="524.7" width="8.1" height="16.1" fill="#ff0000"/><rect x="1519.6" y="507" width="3" height="6" fill="#b8a400"/><rect x="1519.6" y="526" width="3" height="8" fill="#b8a400"/><path shape-rendering="geometricPrecision" d="M1505.3 508.4 L1508.3 505.4 H1533.8 L1536.8 508.4 V535.2 H1505.3 Z" fill="none" stroke="#58b00a" stroke-width="1.9"/><text x="1508" y="523.4" font-size="12.5" fill="#58b00a" stroke="#58b00a" stroke-width="0.35" textLength="26" lengthAdjust="spacingAndGlyphs">C36</text><rect x="1537.5" y="522.9" width="18.4" height="12.8" fill="#ff0000"/><rect x="1539" y="523.9" width="4" height="10.8" fill="#b8a400"/><rect x="1550.4" y="523.9" width="4" height="10.8" fill="#b8a400"/><rect x="1543" y="522.9" width="7.4" height="12.8" fill="#000"/><rect x="1542.4" y="524.6" width="8.5" height="9.4" fill="none" stroke="#58b00a" stroke-width="1.6"/><rect x="1558.1" y="508.1" width="12.7" height="5.4" fill="#ff0000"/><rect x="1560.1" y="508.1" width="8.7" height="5.4" fill="#b8a400"/><rect x="1561.8" y="508.1" width="5.2" height="5.4" fill="#58b00a"/><rect x="1563.1" y="509.3" width="2.6" height="3" fill="#000"/><rect x="1561.3" y="509.8" width="1.2" height="2" fill="#ff0000"/><rect x="1566.4" y="509.8" width="1.2" height="2" fill="#ff0000"/><rect x="1558.1" y="515" width="12.7" height="5.2" fill="#ff0000"/><rect x="1560.1" y="515" width="8.7" height="5.2" fill="#b8a400"/><rect x="1561.8" y="515" width="5.2" height="5.2" fill="#58b00a"/><rect x="1563.1" y="516.2" width="2.6" height="2.8" fill="#000"/><rect x="1561.3" y="516.6" width="1.2" height="2" fill="#ff0000"/><rect x="1566.4" y="516.6" width="1.2" height="2" fill="#ff0000"/><rect x="1577.1" y="508.1" width="4.9" height="12.7" fill="#ff0000"/><rect x="1577.1" y="510.1" width="4.9" height="8.7" fill="#b8a400"/><rect x="1577.1" y="511.9" width="4.9" height="5.2" fill="#58b00a"/><rect x="1578.3" y="513.2" width="2.5" height="2.6" fill="#000"/><rect x="1578.5" y="511.3" width="2" height="1.2" fill="#ff0000"/><rect x="1578.5" y="516.4" width="2" height="1.2" fill="#ff0000"/><rect x="1577.1" y="523.2" width="4.9" height="12.5" fill="#ff0000"/><rect x="1577.1" y="525.2" width="4.9" height="8.5" fill="#b8a400"/><rect x="1577.1" y="526.9" width="4.9" height="5.2" fill="#58b00a"/><rect x="1578.3" y="528.2" width="2.5" height="2.6" fill="#000"/><rect x="1578.5" y="526.4" width="2" height="1.2" fill="#ff0000"/><rect x="1578.5" y="531.3" width="2" height="1.2" fill="#ff0000"/><rect x="1557.9" y="527.3" width="5.6" height="4.6" fill="#ff0000"/><rect x="1560.1" y="528.4" width="2.9" height="2.4" fill="#b8a400"/><rect x="1568.5" y="523" width="5.6" height="4.6" fill="#ff0000"/><rect x="1569" y="524.1" width="3.1" height="2.4" fill="#b8a400"/><rect x="1568.5" y="531.6" width="5.6" height="4.6" fill="#ff0000"/><rect x="1569" y="532.7" width="3.1" height="2.4" fill="#b8a400"/><rect x="1563.4" y="523.4" width="5.2" height="12.8" fill="none" stroke="#58b00a" stroke-width="1.7"/><rect x="1453.2" y="528.5" width="5.2" height="3.6" fill="#ff0000"/><rect x="1477.8" y="528.5" width="5.2" height="3.6" fill="#ff0000"/><rect x="1454.8" y="529.5" width="3.2" height="1.6" fill="none" stroke="#b8a400" stroke-width="0.9"/><rect x="1478.2" y="529.5" width="3.2" height="1.6" fill="none" stroke="#b8a400" stroke-width="0.9"/><rect x="1453.2" y="534.2" width="5.2" height="3.6" fill="#ff0000"/><rect x="1477.8" y="534.2" width="5.2" height="3.6" fill="#ff0000"/><rect x="1454.8" y="535.2" width="3.2" height="1.6" fill="none" stroke="#b8a400" stroke-width="0.9"/><rect x="1478.2" y="535.2" width="3.2" height="1.6" fill="none" stroke="#b8a400" stroke-width="0.9"/><rect x="1453.2" y="539.9" width="5.2" height="3.6" fill="#ff0000"/><rect x="1477.8" y="539.9" width="5.2" height="3.6" fill="#ff0000"/><rect x="1454.8" y="540.9" width="3.2" height="1.6" fill="none" stroke="#b8a400" stroke-width="0.9"/><rect x="1478.2" y="540.9" width="3.2" height="1.6" fill="none" stroke="#b8a400" stroke-width="0.9"/><rect x="1453.2" y="545.6" width="5.2" height="3.6" fill="#ff0000"/><rect x="1477.8" y="545.6" width="5.2" height="3.6" fill="#ff0000"/><rect x="1454.8" y="546.6" width="3.2" height="1.6" fill="none" stroke="#b8a400" stroke-width="0.9"/><rect x="1478.2" y="546.6" width="3.2" height="1.6" fill="none" stroke="#b8a400" stroke-width="0.9"/><rect x="1463.1" y="532.2" width="10.9" height="12.8" fill="#ff0000"/><rect x="1459.3" y="528.3" width="17.6" height="21" fill="none" stroke="#58b00a" stroke-width="1.9"/><rect x="1442.4" y="528" width="5.6" height="12.9" fill="#ff0000"/><rect x="1442.4" y="530" width="5.6" height="8.9" fill="#b8a400"/><rect x="1442.4" y="531.9" width="5.6" height="5.2" fill="#58b00a"/><rect x="1443.6" y="533.2" width="3.2" height="2.6" fill="#000"/><rect x="1444.2" y="531.2" width="2" height="1.2" fill="#ff0000"/><rect x="1444.2" y="536.5" width="2" height="1.2" fill="#ff0000"/><rect x="1442.4" y="543.2" width="5.6" height="12.6" fill="#ff0000"/><rect x="1442.4" y="545.2" width="5.6" height="8.6" fill="#b8a400"/><rect x="1442.4" y="546.9" width="5.6" height="5.2" fill="#58b00a"/><rect x="1443.6" y="548.2" width="3.2" height="2.6" fill="#000"/><rect x="1444.2" y="546.4" width="2" height="1.2" fill="#ff0000"/><rect x="1444.2" y="551.4" width="2" height="1.2" fill="#ff0000"/><rect x="1487.6" y="536.3" width="12.2" height="5.5" fill="#ff0000"/><rect x="1489.6" y="536.3" width="8.2" height="5.5" fill="#b8a400"/><rect x="1491.1" y="536.3" width="5.2" height="5.5" fill="#58b00a"/><rect x="1492.4" y="537.5" width="2.6" height="3.1" fill="#000"/><rect x="1490.8" y="538" width="1.2" height="2" fill="#ff0000"/><rect x="1495.4" y="538" width="1.2" height="2" fill="#ff0000"/><rect x="1487.6" y="543.4" width="12.2" height="5.5" fill="#ff0000"/><rect x="1489.6" y="543.4" width="8.2" height="5.5" fill="#b8a400"/><rect x="1491.1" y="543.4" width="5.2" height="5.5" fill="#58b00a"/><rect x="1492.4" y="544.6" width="2.6" height="3.1" fill="#000"/><rect x="1490.8" y="545.1" width="1.2" height="2" fill="#ff0000"/><rect x="1495.4" y="545.1" width="1.2" height="2" fill="#ff0000"/><rect x="1455.2" y="552.4" width="12.5" height="5.7" fill="#ff0000"/><rect x="1457.2" y="552.4" width="8.5" height="5.7" fill="#b8a400"/><rect x="1458.9" y="552.4" width="5.2" height="5.7" fill="#58b00a"/><rect x="1460.2" y="553.6" width="2.6" height="3.3" fill="#000"/><rect x="1458.4" y="554.2" width="1.2" height="2" fill="#ff0000"/><rect x="1463.3" y="554.2" width="1.2" height="2" fill="#ff0000"/><rect x="1470.8" y="552.4" width="12.1" height="5.7" fill="#ff0000"/><rect x="1472.8" y="552.4" width="8.1" height="5.7" fill="#b8a400"/><rect x="1474.2" y="552.4" width="5.2" height="5.7" fill="#58b00a"/><rect x="1475.5" y="553.6" width="2.6" height="3.3" fill="#000"/><rect x="1474" y="554.2" width="1.2" height="2" fill="#ff0000"/><rect x="1478.5" y="554.2" width="1.2" height="2" fill="#ff0000"/><rect x="1485.3" y="552.4" width="12.7" height="5.7" fill="#ff0000"/><rect x="1487.3" y="552.4" width="8.7" height="5.7" fill="#b8a400"/><rect x="1489.1" y="552.4" width="5.2" height="5.7" fill="#58b00a"/><rect x="1490.4" y="553.6" width="2.6" height="3.3" fill="#000"/><rect x="1488.5" y="554.2" width="1.2" height="2" fill="#ff0000"/><rect x="1493.6" y="554.2" width="1.2" height="2" fill="#ff0000"/><rect x="1508.2" y="544.5" width="8.8" height="9.2" fill="#ff0000"/><rect x="1528" y="544.5" width="7.8" height="9.2" fill="#ff0000"/><rect x="1510.5" y="545.5" width="5" height="7.2" fill="#b8a400"/><rect x="1529.5" y="546" width="5" height="6.2" fill="none" stroke="#b8a400" stroke-width="1"/><rect x="1513.1" y="543.2" width="18.9" height="11.3" fill="none" stroke="#58b00a" stroke-width="1.8"/><text x="1514.3" y="553.2" font-size="12.5" fill="#b8a400" stroke="#b8a400" stroke-width="0.35" textLength="16.5" lengthAdjust="spacingAndGlyphs">D3</text><rect x="1542.6" y="539.1" width="4.6" height="6.4" fill="#ff0000"/><rect x="1543.7" y="542.1" width="2.4" height="2.9" fill="#b8a400"/><rect x="1551.4" y="539.1" width="4.6" height="6.4" fill="#ff0000"/><rect x="1552.5" y="542.1" width="2.4" height="2.9" fill="#b8a400"/><rect x="1547.3" y="549.3" width="4.6" height="6.4" fill="#ff0000"/><rect x="1548.4" y="549.8" width="2.4" height="3.1" fill="#b8a400"/><rect x="1543.3" y="545.4" width="12.4" height="4" fill="none" stroke="#58b00a" stroke-width="1.7"/><rect x="1561.2" y="539.1" width="4.6" height="6.4" fill="#ff0000"/><rect x="1562.3" y="542.1" width="2.4" height="2.9" fill="#b8a400"/><rect x="1570" y="539.1" width="4.6" height="6.4" fill="#ff0000"/><rect x="1571.1" y="542.1" width="2.4" height="2.9" fill="#b8a400"/><rect x="1565.6" y="549.3" width="4.6" height="6.4" fill="#ff0000"/><rect x="1566.7" y="549.8" width="2.4" height="3.1" fill="#b8a400"/><rect x="1561.5" y="545.4" width="12.5" height="4" fill="none" stroke="#58b00a" stroke-width="1.7"/><rect x="1577.1" y="540" width="5.2" height="12.5" fill="#ff0000"/><rect x="1577.1" y="542" width="5.2" height="8.5" fill="#b8a400"/><rect x="1577.1" y="543.6" width="5.2" height="5.2" fill="#58b00a"/><rect x="1578.3" y="545" width="2.8" height="2.6" fill="#000"/><rect x="1578.7" y="543.2" width="2" height="1.2" fill="#ff0000"/><rect x="1578.7" y="548.1" width="2" height="1.2" fill="#ff0000"/><circle shape-rendering="auto" cx="1637.2" cy="541.5" r="4" fill="#ff0000"/><circle shape-rendering="auto" cx="1637.2" cy="553" r="4" fill="#ff0000"/><rect x="1633.4" y="559.6" width="7.6" height="6.8" fill="#ff0000"/><circle shape-rendering="auto" cx="1637.2" cy="541.5" r="1.8" fill="none" stroke="#b8a400" stroke-width="1"/><circle shape-rendering="auto" cx="1637.2" cy="553" r="1.8" fill="none" stroke="#b8a400" stroke-width="1"/><rect x="1635.3" y="561.5" width="3.8" height="3.5" fill="none" stroke="#b8a400" stroke-width="1"/><rect x="1620.1" y="545.2" width="5.7" height="12.4" fill="#ff0000"/><rect x="1620.1" y="547.2" width="5.7" height="8.4" fill="#b8a400"/><rect x="1620.1" y="548.8" width="5.7" height="5.2" fill="#58b00a"/><rect x="1621.3" y="550.1" width="3.3" height="2.6" fill="#000"/><rect x="1621.9" y="548.4" width="2" height="1.2" fill="#ff0000"/><rect x="1621.9" y="553.2" width="2" height="1.2" fill="#ff0000"/><rect x="1618.3" y="539.5" width="24.6" height="26" fill="none" stroke="#58b00a" stroke-width="1.9"/><rect x="1518.2" y="557.2" width="23.8" height="12.6" fill="#ff0000"/><rect x="1518.2" y="602.4" width="23.8" height="12" fill="#ff0000"/><rect x="1519.6" y="559.6" width="21" height="5" fill="none" stroke="#b8a400" stroke-width="1.2"/><rect x="1519.6" y="607.2" width="21" height="5.8" fill="none" stroke="#b8a400" stroke-width="1.2"/><rect x="1504.3" y="560.5" width="52.4" height="52" fill="none" stroke="#58b00a" stroke-width="2"/><text x="1521.2" y="589.1" font-size="12.5" fill="#58b00a" stroke="#58b00a" stroke-width="0.35" textLength="17.5" lengthAdjust="spacingAndGlyphs">L3</text><rect x="1562.3" y="562.5" width="6.3" height="4.6" fill="#ff0000"/><rect x="1565.2" y="563.6" width="2.9" height="2.4" fill="#b8a400"/><rect x="1571.7" y="558.3" width="6.3" height="4.6" fill="#ff0000"/><rect x="1572.2" y="559.4" width="3.1" height="2.4" fill="#b8a400"/><rect x="1571.7" y="566.9" width="6.3" height="4.6" fill="#ff0000"/><rect x="1572.2" y="568" width="3.1" height="2.4" fill="#b8a400"/><rect x="1568.5" y="559" width="3.3" height="11.7" fill="none" stroke="#58b00a" stroke-width="1.7"/><rect x="1565.1" y="573.3" width="17.9" height="8.5" fill="#ff0000"/><rect x="1565.1" y="603.5" width="17.9" height="7.7" fill="#ff0000"/><rect x="1561.5" y="577.3" width="25.4" height="29.3" fill="none" stroke="#58b00a" stroke-width="1.9"/><rect x="1567.6" y="575.7" width="13.6" height="5.2" fill="none" stroke="#b8a400" stroke-width="1"/><rect x="1567.6" y="604.7" width="13.6" height="5.5" fill="none" stroke="#b8a400" stroke-width="1"/><text x="1565.7" y="596.1" font-size="12.5" fill="#58b00a" stroke="#58b00a" stroke-width="0.35" textLength="17" lengthAdjust="spacingAndGlyphs">D4</text><rect x="1601.3" y="568.4" width="12.5" height="4.8" fill="#ff0000"/><rect x="1603.3" y="568.4" width="8.5" height="4.8" fill="#b8a400"/><rect x="1605" y="568.4" width="5.2" height="4.8" fill="#58b00a"/><rect x="1606.2" y="569.6" width="2.6" height="2.4" fill="#000"/><rect x="1604.5" y="569.8" width="1.2" height="2" fill="#ff0000"/><rect x="1609.4" y="569.8" width="1.2" height="2" fill="#ff0000"/><rect x="1592" y="578.2" width="8" height="5.6" fill="#ff0000"/><rect x="1592" y="592.2" width="8" height="5.6" fill="#ff0000"/><rect x="1614.4" y="578.2" width="8" height="5.6" fill="#ff0000"/><rect x="1614.4" y="592.2" width="8" height="5.6" fill="#ff0000"/><path shape-rendering="geometricPrecision" d="M1596.3 580.2 L1599.3 577.2 H1618.1 V598.8 H1596.3 Z" fill="none" stroke="#58b00a" stroke-width="2"/><rect x="1595.2" y="578.2" width="4.8" height="5.6" fill="#b8a400"/><rect x="1596.9" y="579.5" width="2" height="3" fill="#ff0000"/><rect x="1595.2" y="592.2" width="4.8" height="5.6" fill="#b8a400"/><rect x="1596.9" y="593.5" width="2" height="3" fill="#ff0000"/><rect x="1614.4" y="578.2" width="4.8" height="5.6" fill="#b8a400"/><rect x="1615.5" y="579.5" width="2" height="3" fill="#ff0000"/><rect x="1614.4" y="592.2" width="4.8" height="5.6" fill="#b8a400"/><rect x="1615.5" y="593.5" width="2" height="3" fill="#ff0000"/><rect x="1456.2" y="576.3" width="15.4" height="7.4" fill="#ff0000"/><rect x="1481.4" y="576.3" width="15.4" height="7.4" fill="#ff0000"/><path shape-rendering="geometricPrecision" d="M1461.3 564.5 H1488.7 L1491.7 567.5 V595.5 H1461.3 Z" fill="none" stroke="#58b00a" stroke-width="1.9"/><text x="1464" y="584.1" font-size="12.5" fill="#b8a400" stroke="#b8a400" stroke-width="0.35" textLength="24.9" lengthAdjust="spacingAndGlyphs">C40</text><rect x="1455.2" y="600.2" width="8.8" height="33" fill="#ff0000"/><rect x="1480.4" y="600.2" width="7.7" height="33" fill="#ff0000"/><rect x="1453.8" y="599.6" width="10.8" height="34" fill="none" stroke="#b8a400" stroke-width="1.2"/><rect x="1479.6" y="599.6" width="9.8" height="34" fill="none" stroke="#b8a400" stroke-width="1.2"/><rect x="1454.1" y="599.3" width="34.9" height="34.4" fill="none" stroke="#58b00a" stroke-width="2"/><text x="1462" y="619.6" font-size="12.5" fill="#58b00a" stroke="#58b00a" stroke-width="0.35" textLength="17.5" lengthAdjust="spacingAndGlyphs">L4</text><rect x="1494.3" y="601.2" width="4.8" height="12.6" fill="#ff0000"/><rect x="1494.3" y="603.2" width="4.8" height="8.6" fill="#b8a400"/><rect x="1494.3" y="604.9" width="4.8" height="5.2" fill="#58b00a"/><rect x="1495.5" y="606.2" width="2.4" height="2.6" fill="#000"/><rect x="1495.7" y="604.4" width="2" height="1.2" fill="#ff0000"/><rect x="1495.7" y="609.4" width="2" height="1.2" fill="#ff0000"/><rect x="1493.3" y="627" width="15.7" height="8.8" fill="#ff0000"/><rect x="1518.2" y="627" width="15.7" height="8.8" fill="#ff0000"/><path shape-rendering="geometricPrecision" d="M1498.4 616.7 H1525.5 L1528.5 619.7 V646.3 H1498.4 Z" fill="none" stroke="#58b00a" stroke-width="1.9"/><text x="1501" y="635.6" font-size="12.5" fill="#b8a400" stroke="#b8a400" stroke-width="0.35" textLength="24.9" lengthAdjust="spacingAndGlyphs">C42</text><rect x="1543.4" y="620.2" width="18.3" height="7.8" fill="#ff0000"/><rect x="1543.4" y="649.3" width="18.3" height="8.3" fill="#ff0000"/><rect x="1539.5" y="624.5" width="26.2" height="29" fill="none" stroke="#58b00a" stroke-width="1.9"/><rect x="1545.9" y="622.6" width="14" height="4.5" fill="none" stroke="#b8a400" stroke-width="1"/><rect x="1545.9" y="650.5" width="14" height="6.1" fill="none" stroke="#b8a400" stroke-width="1"/><text x="1544.1" y="643.1" font-size="12.5" fill="#58b00a" stroke="#58b00a" stroke-width="0.35" textLength="17" lengthAdjust="spacingAndGlyphs">D5</text><rect x="1566.9" y="622.9" width="9.5" height="11.7" fill="#ff0000"/><rect x="1596.9" y="622.9" width="10" height="11.7" fill="#ff0000"/><rect x="1571.5" y="624.5" width="3.5" height="8.5" fill="none" stroke="#b8a400" stroke-width="1.1"/><rect x="1599" y="624.5" width="3.5" height="8.5" fill="none" stroke="#b8a400" stroke-width="1.1"/><rect x="1571.1" y="618.4" width="31.8" height="22.2" fill="none" stroke="#58b00a" stroke-width="2"/><text x="1577.7" y="632.3" font-size="12.5" fill="#58b00a" stroke="#58b00a" stroke-width="0.35" textLength="18" lengthAdjust="spacingAndGlyphs">F3</text><rect x="1587.9" y="647.2" width="8" height="5.6" fill="#ff0000"/><rect x="1587.9" y="661.2" width="8" height="5.6" fill="#ff0000"/><rect x="1610.3" y="647.2" width="8" height="5.6" fill="#ff0000"/><rect x="1610.3" y="661.2" width="8" height="5.6" fill="#ff0000"/><path shape-rendering="geometricPrecision" d="M1592.2 649.2 L1595.2 646.2 H1614 V667.8 H1592.2 Z" fill="none" stroke="#58b00a" stroke-width="2"/><rect x="1591.1" y="647.2" width="4.8" height="5.6" fill="#b8a400"/><rect x="1592.8" y="648.5" width="2" height="3" fill="#ff0000"/><rect x="1591.1" y="661.2" width="4.8" height="5.6" fill="#b8a400"/><rect x="1592.8" y="662.5" width="2" height="3" fill="#ff0000"/><rect x="1610.3" y="647.2" width="4.8" height="5.6" fill="#b8a400"/><rect x="1611.4" y="648.5" width="2" height="3" fill="#ff0000"/><rect x="1610.3" y="661.2" width="4.8" height="5.6" fill="#b8a400"/><rect x="1611.4" y="662.5" width="2" height="3" fill="#ff0000"/><rect x="1579.3" y="649.1" width="5.5" height="12.9" fill="#ff0000"/><rect x="1579.3" y="651.1" width="5.5" height="8.9" fill="#b8a400"/><rect x="1579.3" y="652.9" width="5.5" height="5.2" fill="#58b00a"/><rect x="1580.5" y="654.2" width="3.1" height="2.6" fill="#000"/><rect x="1581" y="652.3" width="2" height="1.2" fill="#ff0000"/><rect x="1581" y="657.6" width="2" height="1.2" fill="#ff0000"/><rect x="1463.1" y="638.3" width="11.8" height="11.2" fill="#ff0000"/><rect x="1463.1" y="666.4" width="11.8" height="11.4" fill="#ff0000"/><rect x="1466.5" y="641.5" width="5.2" height="5" fill="none" stroke="#b8a400" stroke-width="1.2"/><rect x="1468.4" y="643.3" width="1.4" height="1.4" fill="#b8a400"/><rect x="1464.8" y="669.2" width="8.4" height="5.6" fill="none" stroke="#b8a400" stroke-width="1.2"/><rect x="1460.3" y="642.4" width="18.4" height="31.2" fill="none" stroke="#58b00a" stroke-width="1.9"/><rect x="1483.3" y="644.4" width="12.5" height="17.3" fill="#ff0000"/><rect x="1484.3" y="645.9" width="10.5" height="3.7" fill="#b8a400"/><rect x="1484.3" y="656.5" width="10.5" height="3.7" fill="#b8a400"/><rect x="1483.3" y="649.6" width="12.5" height="6.9" fill="#000"/><rect x="1485" y="648.8" width="9.1" height="8.6" fill="none" stroke="#58b00a" stroke-width="1.6"/><rect x="1516.3" y="651" width="19.5" height="8.8" fill="#ff0000"/><rect x="1517.8" y="652" width="4.3" height="6.8" fill="#b8a400"/><rect x="1530" y="652" width="4.3" height="6.8" fill="#b8a400"/><rect x="1522.1" y="651" width="7.8" height="8.8" fill="#000"/><rect x="1521.5" y="652.7" width="9.1" height="5.4" fill="none" stroke="#58b00a" stroke-width="1.6"/><rect x="1447.8" y="675.2" width="5.2" height="12.4" fill="#ff0000"/><rect x="1447.8" y="677.2" width="5.2" height="8.4" fill="#b8a400"/><rect x="1447.8" y="678.8" width="5.2" height="5.2" fill="#58b00a"/><rect x="1449" y="680.1" width="2.8" height="2.6" fill="#000"/><rect x="1449.4" y="678.4" width="2" height="1.2" fill="#ff0000"/><rect x="1449.4" y="683.2" width="2" height="1.2" fill="#ff0000"/><rect x="1464.2" y="684" width="12.8" height="5.1" fill="#ff0000"/><rect x="1466.2" y="684" width="8.8" height="5.1" fill="#b8a400"/><rect x="1468" y="684" width="5.2" height="5.1" fill="#58b00a"/><rect x="1469.3" y="685.2" width="2.6" height="2.7" fill="#000"/><rect x="1467.4" y="685.5" width="1.2" height="2" fill="#ff0000"/><rect x="1472.6" y="685.5" width="1.2" height="2" fill="#ff0000"/><rect x="1447.3" y="692.7" width="6.2" height="3.6" fill="#ff0000"/><rect x="1471.6" y="692.7" width="6.2" height="3.6" fill="#ff0000"/><rect x="1448.9" y="693.7" width="4.2" height="1.6" fill="none" stroke="#b8a400" stroke-width="0.9"/><rect x="1472" y="693.7" width="4.2" height="1.6" fill="none" stroke="#b8a400" stroke-width="0.9"/><rect x="1447.3" y="698.4" width="6.2" height="3.6" fill="#ff0000"/><rect x="1471.6" y="698.4" width="6.2" height="3.6" fill="#ff0000"/><rect x="1448.9" y="699.4" width="4.2" height="1.6" fill="none" stroke="#b8a400" stroke-width="0.9"/><rect x="1472" y="699.4" width="4.2" height="1.6" fill="none" stroke="#b8a400" stroke-width="0.9"/><rect x="1447.3" y="704.1" width="6.2" height="3.6" fill="#ff0000"/><rect x="1471.6" y="704.1" width="6.2" height="3.6" fill="#ff0000"/><rect x="1448.9" y="705.1" width="4.2" height="1.6" fill="none" stroke="#b8a400" stroke-width="0.9"/><rect x="1472" y="705.1" width="4.2" height="1.6" fill="none" stroke="#b8a400" stroke-width="0.9"/><rect x="1447.3" y="709.8" width="6.2" height="3.6" fill="#ff0000"/><rect x="1471.6" y="709.8" width="6.2" height="3.6" fill="#ff0000"/><rect x="1448.9" y="710.8" width="4.2" height="1.6" fill="none" stroke="#b8a400" stroke-width="0.9"/><rect x="1472" y="710.8" width="4.2" height="1.6" fill="none" stroke="#b8a400" stroke-width="0.9"/><rect x="1457.2" y="696.4" width="11.4" height="12.5" fill="#ff0000"/><rect x="1454.4" y="692.5" width="16.3" height="21.1" fill="none" stroke="#58b00a" stroke-width="1.9"/><rect x="1481.1" y="689.4" width="4.8" height="12.2" fill="#ff0000"/><rect x="1481.1" y="691.4" width="4.8" height="8.2" fill="#b8a400"/><rect x="1481.1" y="692.9" width="4.8" height="5.2" fill="#58b00a"/><rect x="1482.3" y="694.2" width="2.4" height="2.6" fill="#000"/><rect x="1482.5" y="692.6" width="2" height="1.2" fill="#ff0000"/><rect x="1482.5" y="697.2" width="2" height="1.2" fill="#ff0000"/><rect x="1481.1" y="704.1" width="4.8" height="12.9" fill="#ff0000"/><rect x="1481.1" y="706.1" width="4.8" height="8.9" fill="#b8a400"/><rect x="1481.1" y="707.9" width="4.8" height="5.2" fill="#58b00a"/><rect x="1482.3" y="709.2" width="2.4" height="2.6" fill="#000"/><rect x="1482.5" y="707.3" width="2" height="1.2" fill="#ff0000"/><rect x="1482.5" y="712.6" width="2" height="1.2" fill="#ff0000"/><rect x="1449.1" y="717.7" width="4.9" height="12" fill="#ff0000"/><rect x="1449.1" y="719.7" width="4.9" height="8" fill="#b8a400"/><rect x="1449.1" y="721.1" width="4.9" height="5.2" fill="#58b00a"/><rect x="1450.3" y="722.4" width="2.5" height="2.6" fill="#000"/><rect x="1450.5" y="720.9" width="2" height="1.2" fill="#ff0000"/><rect x="1450.5" y="725.3" width="2" height="1.2" fill="#ff0000"/><rect x="1456.2" y="717.7" width="5.1" height="12" fill="#ff0000"/><rect x="1456.2" y="719.7" width="5.1" height="8" fill="#b8a400"/><rect x="1456.2" y="721.1" width="5.1" height="5.2" fill="#58b00a"/><rect x="1457.4" y="722.4" width="2.7" height="2.6" fill="#000"/><rect x="1457.8" y="720.9" width="2" height="1.2" fill="#ff0000"/><rect x="1457.8" y="725.3" width="2" height="1.2" fill="#ff0000"/><rect x="1464" y="717.7" width="5.1" height="12" fill="#ff0000"/><rect x="1464" y="719.7" width="5.1" height="8" fill="#b8a400"/><rect x="1464" y="721.1" width="5.1" height="5.2" fill="#58b00a"/><rect x="1465.2" y="722.4" width="2.7" height="2.6" fill="#000"/><rect x="1465.5" y="720.9" width="2" height="1.2" fill="#ff0000"/><rect x="1465.5" y="725.3" width="2" height="1.2" fill="#ff0000"/><rect x="1473" y="719.2" width="12.9" height="4.8" fill="#ff0000"/><rect x="1475" y="719.2" width="8.9" height="4.8" fill="#b8a400"/><rect x="1476.9" y="719.2" width="5.2" height="4.8" fill="#58b00a"/><rect x="1478.2" y="720.4" width="2.6" height="2.4" fill="#000"/><rect x="1476.2" y="720.6" width="1.2" height="2" fill="#ff0000"/><rect x="1481.5" y="720.6" width="1.2" height="2" fill="#ff0000"/><rect x="1493.3" y="708.2" width="5.7" height="12.7" fill="#ff0000"/><rect x="1493.3" y="710.2" width="5.7" height="8.7" fill="#b8a400"/><rect x="1493.3" y="711.9" width="5.7" height="5.2" fill="#58b00a"/><rect x="1494.5" y="713.2" width="3.3" height="2.6" fill="#000"/><rect x="1495.2" y="711.4" width="2" height="1.2" fill="#ff0000"/><rect x="1495.2" y="716.5" width="2" height="1.2" fill="#ff0000"/><rect x="1493.3" y="725" width="5.7" height="12.9" fill="#ff0000"/><rect x="1493.3" y="727" width="5.7" height="8.9" fill="#b8a400"/><rect x="1493.3" y="728.9" width="5.7" height="5.2" fill="#58b00a"/><rect x="1494.5" y="730.2" width="3.3" height="2.6" fill="#000"/><rect x="1495.2" y="728.2" width="2" height="1.2" fill="#ff0000"/><rect x="1495.2" y="733.5" width="2" height="1.2" fill="#ff0000"/><path d="M1492 709 L1492 713 M1498 718 L1500 721" fill="none" stroke="#58b00a" stroke-width="1"/><rect x="1539" y="683.2" width="12.9" height="5.6" fill="#ff0000"/><rect x="1541" y="683.2" width="8.9" height="5.6" fill="#b8a400"/><rect x="1542.9" y="683.2" width="5.2" height="5.6" fill="#58b00a"/><rect x="1544.2" y="684.4" width="2.6" height="3.2" fill="#000"/><rect x="1542.2" y="685" width="1.2" height="2" fill="#ff0000"/><rect x="1547.5" y="685" width="1.2" height="2" fill="#ff0000"/><rect x="1530" y="693.2" width="8" height="5.6" fill="#ff0000"/><rect x="1530" y="707.2" width="8" height="5.6" fill="#ff0000"/><rect x="1552.4" y="693.2" width="8" height="5.6" fill="#ff0000"/><rect x="1552.4" y="707.2" width="8" height="5.6" fill="#ff0000"/><path shape-rendering="geometricPrecision" d="M1534.3 695.2 L1537.3 692.2 H1556.1 V713.8 H1534.3 Z" fill="none" stroke="#58b00a" stroke-width="2"/><rect x="1533.2" y="693.2" width="4.8" height="5.6" fill="#b8a400"/><rect x="1534.9" y="694.5" width="2" height="3" fill="#ff0000"/><rect x="1533.2" y="707.2" width="4.8" height="5.6" fill="#b8a400"/><rect x="1534.9" y="708.5" width="2" height="3" fill="#ff0000"/><rect x="1552.4" y="693.2" width="4.8" height="5.6" fill="#b8a400"/><rect x="1553.5" y="694.5" width="2" height="3" fill="#ff0000"/><rect x="1552.4" y="707.2" width="4.8" height="5.6" fill="#b8a400"/><rect x="1553.5" y="708.5" width="2" height="3" fill="#ff0000"/><g shape-rendering="auto"><circle cx="1477.4" cy="739" r="4.3" fill="#ff0000"/><circle cx="1477.4" cy="739" r="2.1" fill="none" stroke="#b8a400" stroke-width="1.1"/></g><g shape-rendering="auto"><circle cx="1477.4" cy="750.2" r="4.3" fill="#ff0000"/><circle cx="1477.4" cy="750.2" r="2.1" fill="none" stroke="#b8a400" stroke-width="1.1"/></g><g shape-rendering="auto"><circle cx="1477.4" cy="761.4" r="4.3" fill="#ff0000"/><circle cx="1477.4" cy="761.4" r="2.1" fill="none" stroke="#b8a400" stroke-width="1.1"/></g><g shape-rendering="auto"><circle cx="1477.4" cy="772.5" r="4.3" fill="#ff0000"/><circle cx="1477.4" cy="772.5" r="2.1" fill="none" stroke="#b8a400" stroke-width="1.1"/></g><g shape-rendering="auto"><circle cx="1477.4" cy="783.7" r="4.3" fill="#ff0000"/><circle cx="1477.4" cy="783.7" r="2.1" fill="none" stroke="#b8a400" stroke-width="1.1"/></g><g shape-rendering="auto"><circle cx="1477.4" cy="794.9" r="4.3" fill="#ff0000"/><circle cx="1477.4" cy="794.9" r="2.1" fill="none" stroke="#b8a400" stroke-width="1.1"/></g><rect x="1471.3" y="732.5" width="11.4" height="68.1" fill="none" stroke="#58b00a" stroke-width="1.9"/><rect x="1455.2" y="742.2" width="13.4" height="4.8" fill="#ff0000"/><rect x="1457.2" y="742.2" width="9.4" height="4.8" fill="#b8a400"/><rect x="1459.3" y="742.2" width="5.2" height="4.8" fill="#58b00a"/><rect x="1460.6" y="743.4" width="2.6" height="2.4" fill="#000"/><rect x="1458.4" y="743.6" width="1.2" height="2" fill="#ff0000"/><rect x="1464.2" y="743.6" width="1.2" height="2" fill="#ff0000"/><rect x="1455.2" y="749.2" width="13.4" height="4.9" fill="#ff0000"/><rect x="1457.2" y="749.2" width="9.4" height="4.9" fill="#b8a400"/><rect x="1459.3" y="749.2" width="5.2" height="4.9" fill="#58b00a"/><rect x="1460.6" y="750.4" width="2.6" height="2.5" fill="#000"/><rect x="1458.4" y="750.7" width="1.2" height="2" fill="#ff0000"/><rect x="1464.2" y="750.7" width="1.2" height="2" fill="#ff0000"/><rect x="1455.2" y="755.8" width="13.4" height="5.2" fill="#ff0000"/><rect x="1457.2" y="755.8" width="9.4" height="5.2" fill="#b8a400"/><rect x="1459.3" y="755.8" width="5.2" height="5.2" fill="#58b00a"/><rect x="1460.6" y="757" width="2.6" height="2.8" fill="#000"/><rect x="1458.4" y="757.4" width="1.2" height="2" fill="#ff0000"/><rect x="1464.2" y="757.4" width="1.2" height="2" fill="#ff0000"/><rect x="1455.2" y="762.9" width="13.4" height="4.9" fill="#ff0000"/><rect x="1457.2" y="762.9" width="9.4" height="4.9" fill="#b8a400"/><rect x="1459.3" y="762.9" width="5.2" height="4.9" fill="#58b00a"/><rect x="1460.6" y="764.1" width="2.6" height="2.5" fill="#000"/><rect x="1458.4" y="764.3" width="1.2" height="2" fill="#ff0000"/><rect x="1464.2" y="764.3" width="1.2" height="2" fill="#ff0000"/><rect x="1493.1" y="748.2" width="8.5" height="12" fill="#ff0000"/><rect x="1522.9" y="748.2" width="8.8" height="12" fill="#ff0000"/><rect x="1497" y="750" width="3" height="8.5" fill="none" stroke="#b8a400" stroke-width="1.1"/><rect x="1525" y="750" width="3" height="8.5" fill="none" stroke="#b8a400" stroke-width="1.1"/><rect x="1496.2" y="743.5" width="32.7" height="21.2" fill="none" stroke="#58b00a" stroke-width="2"/><text x="1502.2" y="757.3" font-size="12.5" fill="#58b00a" stroke="#58b00a" stroke-width="0.35" textLength="18" lengthAdjust="spacingAndGlyphs">F1</text><rect x="1440.1" y="772.2" width="11.7" height="9.5" fill="#ff0000"/><rect x="1440.1" y="802.3" width="11.7" height="9.5" fill="#ff0000"/><rect x="1442.4" y="776.8" width="7.2" height="3.2" fill="none" stroke="#b8a400" stroke-width="1.1"/><rect x="1441.4" y="805.5" width="9.2" height="3" fill="#b8a400"/><rect x="1435.1" y="776.5" width="21.6" height="31.2" fill="none" stroke="#58b00a" stroke-width="2"/><text x="1436.8" y="795.7" font-size="12.5" fill="#58b00a" stroke="#58b00a" stroke-width="0.35" textLength="17.5" lengthAdjust="spacingAndGlyphs">F2</text><rect x="1504.9" y="772.9" width="5.2" height="12.9" fill="#ff0000"/><rect x="1504.9" y="774.9" width="5.2" height="8.9" fill="#b8a400"/><rect x="1504.9" y="776.7" width="5.2" height="5.2" fill="#58b00a"/><rect x="1506.1" y="778" width="2.8" height="2.6" fill="#000"/><rect x="1506.5" y="776.1" width="2" height="1.2" fill="#ff0000"/><rect x="1506.5" y="781.4" width="2" height="1.2" fill="#ff0000"/><rect x="1512.2" y="773.2" width="8" height="5.6" fill="#ff0000"/><rect x="1512.2" y="787.2" width="8" height="5.6" fill="#ff0000"/><rect x="1534.6" y="773.2" width="8" height="5.6" fill="#ff0000"/><rect x="1534.6" y="787.2" width="8" height="5.6" fill="#ff0000"/><path shape-rendering="geometricPrecision" d="M1516.5 775.2 L1519.5 772.2 H1538.3 V793.8 H1516.5 Z" fill="none" stroke="#58b00a" stroke-width="2"/><rect x="1515.4" y="773.2" width="4.8" height="5.6" fill="#b8a400"/><rect x="1517.1" y="774.5" width="2" height="3" fill="#ff0000"/><rect x="1515.4" y="787.2" width="4.8" height="5.6" fill="#b8a400"/><rect x="1517.1" y="788.5" width="2" height="3" fill="#ff0000"/><rect x="1534.6" y="773.2" width="4.8" height="5.6" fill="#b8a400"/><rect x="1535.7" y="774.5" width="2" height="3" fill="#ff0000"/><rect x="1534.6" y="787.2" width="4.8" height="5.6" fill="#b8a400"/><rect x="1535.7" y="788.5" width="2" height="3" fill="#ff0000"/><circle shape-rendering="auto" cx="1422.9" cy="830.8" r="4.1" fill="#ff0000"/><circle shape-rendering="auto" cx="1445.6" cy="830.4" r="4.1" fill="#ff0000"/><rect shape-rendering="auto" x="1413.7" y="818.1" width="41" height="23.7" rx="11.8" fill="none" stroke="#58b00a" stroke-width="1.800"/><g shape-rendering="auto"><circle cx="1423.500" cy="825.400" r="2.100" fill="#000" stroke="#d8a0f0" stroke-width="1"/><circle cx="1445.500" cy="836.700" r="2.100" fill="#000" stroke="#d8a0f0" stroke-width="1"/></g><text x="1426.5" y="833.7" font-size="12.5" fill="#58b00a" stroke="#58b00a" stroke-width="0.35" textLength="15.5" lengthAdjust="spacingAndGlyphs">V1</text><rect x="1462" y="815.2" width="19.1" height="7.6" fill="#ff0000"/><rect x="1462" y="844" width="19.1" height="7.8" fill="#ff0000"/><rect x="1458.3" y="818.3" width="25.6" height="30.7" fill="none" stroke="#58b00a" stroke-width="1.9"/><rect x="1464.5" y="817.6" width="14.8" height="4.3" fill="none" stroke="#b8a400" stroke-width="1"/><rect x="1464.5" y="845.2" width="14.8" height="5.6" fill="none" stroke="#b8a400" stroke-width="1"/><text x="1462.6" y="837.8" font-size="12.5" fill="#58b00a" stroke="#58b00a" stroke-width="0.35" textLength="17" lengthAdjust="spacingAndGlyphs">D2</text><rect x="1498" y="813.2" width="8" height="7.4" fill="#ff0000"/><circle shape-rendering="auto" cx="1502.4" cy="829.1" r="4.4" fill="#ff0000"/><circle shape-rendering="auto" cx="1502.2" cy="817" r="2.5" fill="none" stroke="#b8a400" stroke-width="1.1"/><circle shape-rendering="auto" cx="1502.4" cy="829.1" r="2.5" fill="none" stroke="#b8a400" stroke-width="1.1"/><rect x="1488.2" y="812.4" width="24.7" height="21.2" fill="none" stroke="#58b00a" stroke-width="1.9"/><text x="1491.2" y="826.3" font-size="12.5" fill="#58b00a" stroke="#58b00a" stroke-width="0.35" textLength="17" lengthAdjust="spacingAndGlyphs">J1</text><rect x="1533.9" y="822" width="5.4" height="12.9" fill="#ff0000"/><rect x="1533.9" y="824" width="5.4" height="8.9" fill="#b8a400"/><rect x="1533.9" y="825.9" width="5.4" height="5.2" fill="#58b00a"/><rect x="1535.1" y="827.2" width="3" height="2.6" fill="#000"/><rect x="1535.6" y="825.2" width="2" height="1.2" fill="#ff0000"/><rect x="1535.6" y="830.5" width="2" height="1.2" fill="#ff0000"/><rect x="1504.1" y="842.9" width="12.9" height="5.1" fill="#ff0000"/><rect x="1506.1" y="842.9" width="8.9" height="5.1" fill="#b8a400"/><rect x="1508" y="842.9" width="5.2" height="5.1" fill="#58b00a"/><rect x="1509.2" y="844.1" width="2.6" height="2.7" fill="#000"/><rect x="1507.3" y="844.5" width="1.2" height="2" fill="#ff0000"/><rect x="1512.6" y="844.5" width="1.2" height="2" fill="#ff0000"/><rect x="1495.1" y="852.6" width="8" height="5.6" fill="#ff0000"/><rect x="1495.1" y="866.6" width="8" height="5.6" fill="#ff0000"/><rect x="1517.5" y="852.6" width="8" height="5.6" fill="#ff0000"/><rect x="1517.5" y="866.6" width="8" height="5.6" fill="#ff0000"/><path shape-rendering="geometricPrecision" d="M1499.4 854.6 L1502.4 851.6 H1521.2 V873.2 H1499.4 Z" fill="none" stroke="#58b00a" stroke-width="2"/><rect x="1498.3" y="852.6" width="4.8" height="5.6" fill="#b8a400"/><rect x="1500" y="853.9" width="2" height="3" fill="#ff0000"/><rect x="1498.3" y="866.6" width="4.8" height="5.6" fill="#b8a400"/><rect x="1500" y="867.9" width="2" height="3" fill="#ff0000"/><rect x="1517.5" y="852.6" width="4.8" height="5.6" fill="#b8a400"/><rect x="1518.6" y="853.9" width="2" height="3" fill="#ff0000"/><rect x="1517.5" y="866.6" width="4.8" height="5.6" fill="#b8a400"/><rect x="1518.6" y="867.9" width="2" height="3" fill="#ff0000"/><rect x="1461.4" y="860.3" width="6" height="4.6" fill="#ff0000"/><rect x="1464" y="861.4" width="2.9" height="2.4" fill="#b8a400"/><rect x="1472.3" y="855.3" width="6" height="4.6" fill="#ff0000"/><rect x="1472.8" y="856.4" width="3.1" height="2.4" fill="#b8a400"/><rect x="1472.3" y="864.5" width="6" height="4.6" fill="#ff0000"/><rect x="1472.8" y="865.6" width="3.1" height="2.4" fill="#b8a400"/><rect x="1467.3" y="855.9" width="5.1" height="12.9" fill="none" stroke="#58b00a" stroke-width="1.7"/><rect x="1457" y="872.5" width="6.5" height="2.6" fill="#ff0000"/><rect x="1477.9" y="872.5" width="5.4" height="2.6" fill="#ff0000"/><rect x="1459.5" y="873.2" width="4" height="1.2" fill="#b8a400"/><rect x="1477.9" y="873.2" width="3.6" height="1.2" fill="#b8a400"/><rect x="1457" y="876.1" width="6.5" height="2.6" fill="#ff0000"/><rect x="1477.9" y="876.1" width="5.4" height="2.6" fill="#ff0000"/><rect x="1459.5" y="876.8" width="4" height="1.2" fill="#b8a400"/><rect x="1477.9" y="876.8" width="3.6" height="1.2" fill="#b8a400"/><rect x="1457" y="879.7" width="6.5" height="2.6" fill="#ff0000"/><rect x="1477.9" y="879.7" width="5.4" height="2.6" fill="#ff0000"/><rect x="1459.5" y="880.4" width="4" height="1.2" fill="#b8a400"/><rect x="1477.9" y="880.4" width="3.6" height="1.2" fill="#b8a400"/><rect x="1464.4" y="871.3" width="12.6" height="12.2" fill="none" stroke="#58b00a" stroke-width="1.9"/><rect x="1464.2" y="887" width="12.8" height="5.1" fill="#ff0000"/><rect x="1466.2" y="887" width="8.8" height="5.1" fill="#b8a400"/><rect x="1468" y="887" width="5.2" height="5.1" fill="#58b00a"/><rect x="1469.3" y="888.2" width="2.6" height="2.7" fill="#000"/><rect x="1467.4" y="888.5" width="1.2" height="2" fill="#ff0000"/><rect x="1472.6" y="888.5" width="1.2" height="2" fill="#ff0000"/><rect x="1433" y="871" width="1" height="1" fill="#ff0000"/><g shape-rendering="auto"><circle cx="1150" cy="738.7" r="4.2" fill="#ff0000"/><circle cx="1150" cy="738.7" r="2.1" fill="none" stroke="#b8a400" stroke-width="1.1"/></g><g shape-rendering="auto"><circle cx="1150" cy="749.9" r="4.2" fill="#ff0000"/><circle cx="1150" cy="749.9" r="2.1" fill="none" stroke="#b8a400" stroke-width="1.1"/></g><g shape-rendering="auto"><circle cx="1150" cy="761.1" r="4.2" fill="#ff0000"/><circle cx="1150" cy="761.1" r="2.1" fill="none" stroke="#b8a400" stroke-width="1.1"/></g><g shape-rendering="auto"><circle cx="1150" cy="772.4" r="4.2" fill="#ff0000"/><circle cx="1150" cy="772.4" r="2.1" fill="none" stroke="#b8a400" stroke-width="1.1"/></g><g shape-rendering="auto"><circle cx="1150" cy="783.6" r="4.2" fill="#ff0000"/><circle cx="1150" cy="783.6" r="2.1" fill="none" stroke="#b8a400" stroke-width="1.1"/></g><g shape-rendering="auto"><circle cx="1150" cy="794.8" r="4.2" fill="#ff0000"/><circle cx="1150" cy="794.8" r="2.1" fill="none" stroke="#b8a400" stroke-width="1.1"/></g><rect x="1144.5" y="732.4" width="10.4" height="68.2" fill="none" stroke="#58b00a" stroke-width="1.9"/><rect x="1129.4" y="758.6" width="12.1" height="5" fill="#ff0000"/><rect x="1131.4" y="758.6" width="8.1" height="5" fill="#b8a400"/><rect x="1132.9" y="758.6" width="5.2" height="5" fill="#58b00a"/><rect x="1134.2" y="759.8" width="2.6" height="2.6" fill="#000"/><rect x="1132.6" y="760.1" width="1.2" height="2" fill="#ff0000"/><rect x="1137.1" y="760.1" width="1.2" height="2" fill="#ff0000"/><rect x="1129.4" y="765.6" width="12.1" height="5" fill="#ff0000"/><rect x="1131.4" y="765.6" width="8.1" height="5" fill="#b8a400"/><rect x="1132.9" y="765.6" width="5.2" height="5" fill="#58b00a"/><rect x="1134.2" y="766.8" width="2.6" height="2.6" fill="#000"/><rect x="1132.6" y="767.1" width="1.2" height="2" fill="#ff0000"/><rect x="1137.1" y="767.1" width="1.2" height="2" fill="#ff0000"/><rect x="1129.4" y="772.8" width="12.1" height="5" fill="#ff0000"/><rect x="1131.4" y="772.8" width="8.1" height="5" fill="#b8a400"/><rect x="1132.9" y="772.8" width="5.2" height="5" fill="#58b00a"/><rect x="1134.2" y="774" width="2.6" height="2.6" fill="#000"/><rect x="1132.6" y="774.3" width="1.2" height="2" fill="#ff0000"/><rect x="1137.1" y="774.3" width="1.2" height="2" fill="#ff0000"/><rect x="1129.4" y="779.7" width="12.1" height="5" fill="#ff0000"/><rect x="1131.4" y="779.7" width="8.1" height="5" fill="#b8a400"/><rect x="1132.9" y="779.7" width="5.2" height="5" fill="#58b00a"/><rect x="1134.2" y="780.9" width="2.6" height="2.6" fill="#000"/><rect x="1132.6" y="781.2" width="1.2" height="2" fill="#ff0000"/><rect x="1137.1" y="781.2" width="1.2" height="2" fill="#ff0000"/><rect x="1127.4" y="793.2" width="12.6" height="5" fill="#ff0000"/><rect x="1129.4" y="793.2" width="8.6" height="5" fill="#b8a400"/><rect x="1131.1" y="793.2" width="5.2" height="5" fill="#58b00a"/><rect x="1132.4" y="794.4" width="2.6" height="2.6" fill="#000"/><rect x="1130.6" y="794.7" width="1.2" height="2" fill="#ff0000"/><rect x="1135.6" y="794.7" width="1.2" height="2" fill="#ff0000"/><rect x="1127.4" y="800.2" width="12.6" height="5" fill="#ff0000"/><rect x="1129.4" y="800.2" width="8.6" height="5" fill="#b8a400"/><rect x="1131.1" y="800.2" width="5.2" height="5" fill="#58b00a"/><rect x="1132.4" y="801.4" width="2.6" height="2.6" fill="#000"/><rect x="1130.6" y="801.7" width="1.2" height="2" fill="#ff0000"/><rect x="1135.6" y="801.7" width="1.2" height="2" fill="#ff0000"/><rect x="1127.4" y="807.3" width="12.6" height="5" fill="#ff0000"/><rect x="1129.4" y="807.3" width="8.6" height="5" fill="#b8a400"/><rect x="1131.1" y="807.3" width="5.2" height="5" fill="#58b00a"/><rect x="1132.4" y="808.5" width="2.6" height="2.6" fill="#000"/><rect x="1130.6" y="808.8" width="1.2" height="2" fill="#ff0000"/><rect x="1135.6" y="808.8" width="1.2" height="2" fill="#ff0000"/><rect x="1127.4" y="814.3" width="12.6" height="5" fill="#ff0000"/><rect x="1129.4" y="814.3" width="8.6" height="5" fill="#b8a400"/><rect x="1131.1" y="814.3" width="5.2" height="5" fill="#58b00a"/><rect x="1132.4" y="815.5" width="2.6" height="2.6" fill="#000"/><rect x="1130.6" y="815.8" width="1.2" height="2" fill="#ff0000"/><rect x="1135.6" y="815.8" width="1.2" height="2" fill="#ff0000"/><rect x="1127.4" y="821.5" width="12.6" height="5" fill="#ff0000"/><rect x="1129.4" y="821.5" width="8.6" height="5" fill="#b8a400"/><rect x="1131.1" y="821.5" width="5.2" height="5" fill="#58b00a"/><rect x="1132.4" y="822.7" width="2.6" height="2.6" fill="#000"/><rect x="1130.6" y="823" width="1.2" height="2" fill="#ff0000"/><rect x="1135.6" y="823" width="1.2" height="2" fill="#ff0000"/><rect x="1127.4" y="828.5" width="12.6" height="5" fill="#ff0000"/><rect x="1129.4" y="828.5" width="8.6" height="5" fill="#b8a400"/><rect x="1131.1" y="828.5" width="5.2" height="5" fill="#58b00a"/><rect x="1132.4" y="829.7" width="2.6" height="2.6" fill="#000"/><rect x="1130.6" y="830" width="1.2" height="2" fill="#ff0000"/><rect x="1135.6" y="830" width="1.2" height="2" fill="#ff0000"/><rect x="1084" y="772.9" width="8" height="5.6" fill="#ff0000"/><rect x="1084" y="786.9" width="8" height="5.6" fill="#ff0000"/><rect x="1106.4" y="772.9" width="8" height="5.6" fill="#ff0000"/><rect x="1106.4" y="786.9" width="8" height="5.6" fill="#ff0000"/><path shape-rendering="geometricPrecision" d="M1088.3 774.9 L1091.3 771.9 H1110.1 V793.5 H1088.3 Z" fill="none" stroke="#58b00a" stroke-width="2"/><rect x="1087.2" y="772.9" width="4.8" height="5.6" fill="#b8a400"/><rect x="1088.9" y="774.2" width="2" height="3" fill="#ff0000"/><rect x="1087.2" y="786.9" width="4.8" height="5.6" fill="#b8a400"/><rect x="1088.9" y="788.2" width="2" height="3" fill="#ff0000"/><rect x="1106.4" y="772.9" width="4.8" height="5.6" fill="#b8a400"/><rect x="1107.5" y="774.2" width="2" height="3" fill="#ff0000"/><rect x="1106.4" y="786.9" width="4.8" height="5.6" fill="#b8a400"/><rect x="1107.5" y="788.2" width="2" height="3" fill="#ff0000"/><rect x="1093.4" y="761.8" width="12.3" height="5" fill="#ff0000"/><rect x="1095.4" y="761.8" width="8.3" height="5" fill="#b8a400"/><rect x="1097" y="761.8" width="5.2" height="5" fill="#58b00a"/><rect x="1098.3" y="763" width="2.6" height="2.6" fill="#000"/><rect x="1096.6" y="763.3" width="1.2" height="2" fill="#ff0000"/><rect x="1101.3" y="763.3" width="1.2" height="2" fill="#ff0000"/><rect x="1086.9" y="822.1" width="6" height="12.4" fill="#ff0000"/><rect x="1086.9" y="824.1" width="6" height="8.4" fill="#b8a400"/><rect x="1086.9" y="825.7" width="6" height="5.2" fill="#58b00a"/><rect x="1088.1" y="827" width="3.6" height="2.6" fill="#000"/><rect x="1088.9" y="825.3" width="2" height="1.2" fill="#ff0000"/><rect x="1088.9" y="830.1" width="2" height="1.2" fill="#ff0000"/><rect x="1101.8" y="852.6" width="8" height="5.6" fill="#ff0000"/><rect x="1101.8" y="866.6" width="8" height="5.6" fill="#ff0000"/><rect x="1124.2" y="852.6" width="8" height="5.6" fill="#ff0000"/><rect x="1124.2" y="866.6" width="8" height="5.6" fill="#ff0000"/><path shape-rendering="geometricPrecision" d="M1106.1 854.6 L1109.1 851.6 H1127.9 V873.2 H1106.1 Z" fill="none" stroke="#58b00a" stroke-width="2"/><rect x="1105" y="852.6" width="4.8" height="5.6" fill="#b8a400"/><rect x="1106.7" y="853.9" width="2" height="3" fill="#ff0000"/><rect x="1105" y="866.6" width="4.8" height="5.6" fill="#b8a400"/><rect x="1106.7" y="867.9" width="2" height="3" fill="#ff0000"/><rect x="1124.2" y="852.6" width="4.8" height="5.6" fill="#b8a400"/><rect x="1125.3" y="853.9" width="2" height="3" fill="#ff0000"/><rect x="1124.2" y="866.6" width="4.8" height="5.6" fill="#b8a400"/><rect x="1125.3" y="867.9" width="2" height="3" fill="#ff0000"/><rect x="1110.1" y="841.4" width="12.4" height="4.9" fill="#ff0000"/><rect x="1112.1" y="841.4" width="8.4" height="4.9" fill="#b8a400"/><rect x="1113.7" y="841.4" width="5.2" height="4.9" fill="#58b00a"/><rect x="1115" y="842.6" width="2.6" height="2.5" fill="#000"/><rect x="1113.3" y="842.8" width="1.2" height="2" fill="#ff0000"/><rect x="1118.1" y="842.8" width="1.2" height="2" fill="#ff0000"/><g shape-rendering="auto"><circle cx="1246.8" cy="843.8" r="4.1" fill="#ff0000"/><circle cx="1246.8" cy="843.8" r="2" fill="none" stroke="#b8a400" stroke-width="1.1"/></g><g shape-rendering="auto"><circle cx="1258" cy="843.8" r="4.1" fill="#ff0000"/><circle cx="1258" cy="843.8" r="2" fill="none" stroke="#b8a400" stroke-width="1.1"/></g><g shape-rendering="auto"><circle cx="1269.3" cy="843.8" r="4.1" fill="#ff0000"/><circle cx="1269.3" cy="843.8" r="2" fill="none" stroke="#b8a400" stroke-width="1.1"/></g><g shape-rendering="auto"><circle cx="1280.6" cy="843.8" r="4.1" fill="#ff0000"/><circle cx="1280.6" cy="843.8" r="2" fill="none" stroke="#b8a400" stroke-width="1.1"/></g><g shape-rendering="auto"><circle cx="1241" cy="855" r="4.1" fill="#ff0000"/><circle cx="1241" cy="855" r="2" fill="none" stroke="#b8a400" stroke-width="1.1"/></g><g shape-rendering="auto"><circle cx="1252.4" cy="855" r="4.1" fill="#ff0000"/><circle cx="1252.4" cy="855" r="2" fill="none" stroke="#b8a400" stroke-width="1.1"/></g><g shape-rendering="auto"><circle cx="1263.4" cy="855" r="4.1" fill="#ff0000"/><circle cx="1263.4" cy="855" r="2" fill="none" stroke="#b8a400" stroke-width="1.1"/></g><g shape-rendering="auto"><circle cx="1274.8" cy="855" r="4.1" fill="#ff0000"/><circle cx="1274.8" cy="855" r="2" fill="none" stroke="#b8a400" stroke-width="1.1"/></g><rect x="1218" y="885" width="9.9" height="19.8" fill="#ff0000"/><rect x="1294.2" y="885" width="8.8" height="19.8" fill="#ff0000"/><circle shape-rendering="auto" cx="1226" cy="897" r="3.6" fill="none" stroke="#b8a400" stroke-width="1.1"/><circle shape-rendering="auto" cx="1295.7" cy="897" r="3.6" fill="none" stroke="#b8a400" stroke-width="1.1"/><rect x="1224.3" y="836.6" width="71.5" height="81.1" fill="none" stroke="#58b00a" stroke-width="2"/><rect x="1223.4" y="905.6" width="1.4" height="1.6" fill="#e8c0e8"/><rect x="1295.6" y="905.6" width="2" height="1.6" fill="#e8c0e8"/><g shape-rendering="auto"><circle cx="1235.600" cy="883.100" r="7.300" fill="none" stroke="#d8a0f0" stroke-width="1.100"/><circle cx="1285.800" cy="883.100" r="7.300" fill="none" stroke="#d8a0f0" stroke-width="1.100"/><path d="M1228.300 883.100 A7.300 7.300 0 0 1 1242.900 883.100" fill="none" stroke="#58b00a" stroke-width="1.100"/><path d="M1278.500 883.100 A7.300 7.300 0 0 1 1293.100 883.100" fill="none" stroke="#a020f0" stroke-width="1.100"/></g><rect x="1235.2" y="882.7" width="0.8" height="0.8" fill="#ff0000"/><rect x="1285.4" y="882.7" width="0.8" height="0.8" fill="#ff0000"/><text x="1252.2" y="880.1" font-size="12.5" fill="#58b00a" stroke="#58b00a" stroke-width="0.35" textLength="16" lengthAdjust="spacingAndGlyphs">J2</text><rect shape-rendering="auto" x="1326.2" y="820" width="9.800" height="27.900" rx="4.900" fill="#ff0000"/><rect shape-rendering="auto" x="1326.2" y="875" width="9.800" height="27.900" rx="4.900" fill="#ff0000"/><rect shape-rendering="auto" x="1398" y="820" width="9.800" height="27.900" rx="4.900" fill="#ff0000"/><rect shape-rendering="auto" x="1398" y="875" width="9.800" height="27.900" rx="4.900" fill="#ff0000"/><rect x="1364" y="858.2" width="5.4" height="7.2" fill="none" stroke="#58b00a" stroke-width="1.4"/><path d="M1363.5 862 V867" fill="none" stroke="#58b00a" stroke-width="1"/><rect x="1202" y="871" width="1" height="1" fill="#ff0000"/></svg>
<div class="" style="position:absolute;left:216px;top:120px;width:1694px;height:1px;background:#fff"></div>
<div class="" style="position:absolute;left:216px;top:121px;width:1px;height:815px;background:#fff"></div>
<div class="" style="position:absolute;left:217px;top:121px;width:5px;height:815px;background:linear-gradient(90deg,#f4f4f4,#e6e6e6 60%,#c0c0c0)"></div>
<div class="" style="position:absolute;left:222px;top:121px;width:1px;height:815px;background:#808080"></div>
<div class="" style="position:absolute;left:223px;top:121px;width:2px;height:815px;background:#fff"></div>
<div class="" style="position:absolute;left:222px;top:935px;width:1688px;height:1px;background:#a4a4a4"></div>
<div class="" style="position:absolute;left:222px;top:936px;width:1688px;height:1px;background:#e4e4e4"></div>
<div class="" style="position:absolute;left:0px;top:0px;width:3px;height:1010px;background:linear-gradient(90deg,#d0d0d6,#f4f4f6 70%,#c8c8ce)"></div>
<div class="" style="position:absolute;left:3px;top:0px;width:2px;height:1010px;background:#3c3c44"></div>
<div class="" style="position:absolute;left:5px;top:0px;width:5px;height:1010px;background:linear-gradient(90deg,rgba(0,0,0,.12),rgba(255,255,255,.08)),linear-gradient(#a2a4ae 0,#9c9ea8 33%,#a898a8 45%,#c48e9a 55.500%,#cc8c98 62%,#50607c 63.400%,#5a6484 65%,#8c7c94 66.500%,#7c7890 79%,#70748c 84%,#6a7088 100%)"></div>
<div class="" style="position:absolute;left:10px;top:28px;width:1px;height:982px;background:#4a4a50"></div>
<div class="" style="position:absolute;left:5px;top:0px;width:1905px;height:29px;background:linear-gradient(rgba(255,255,255,.18),rgba(255,255,255,0) 45%,rgba(0,0,0,.04)),linear-gradient(100deg,#c8cbd4 0%,#c4c7d0 20%,#bbbeca 27%,#b2b6c1 33%,#aeb2bd 50%,#a9adb9 57%,#a4a8b5 62%,#a9adb9 66%,#9ca0ae 72%,#a3a7b4 80%,#a0a4b1 100%)"></div>
<div class="" style="position:absolute;left:0px;top:0px;width:1910px;height:1px;background:#5a5c66"></div>
<div class="" style="position:absolute;left:0px;top:1px;width:1910px;height:1px;background:#c9ccd6"></div>
<div class="" style="position:absolute;left:10px;top:28px;width:1900px;height:2px;background:#3f4148"></div>
<svg class="abs" style="left:12px;top:8px" width="15" height="15" viewBox="0 0 15 15"><rect x="0.500" y="0.500" width="14" height="14" fill="#c8902c" stroke="#4a3008"/><rect x="2" y="2" width="4.500" height="4.500" fill="#f0c040"/><rect x="8.500" y="2" width="4.500" height="4.500" fill="#f0c040"/><rect x="2" y="8.500" width="4.500" height="4.500" fill="#f0c040"/><rect x="8.500" y="8.500" width="4.500" height="4.500" fill="#f0c040"/><rect x="6.500" y="1" width="2" height="13" fill="#8a5a10"/><rect x="1" y="6.500" width="13" height="2" fill="#8a5a10"/><rect x="6" y="6" width="3" height="3" fill="#ffe070"/></svg>
<div class="t ss" style="left:32px;top:7px;font-size:12.77px;letter-spacing:0.11px;color:#000;text-shadow:0 0 6px #fff,0 0 6px #fff">Graphic Station: 2024-9-24-595378-20240923535 [Step: gerber]</div>
<div class="" style="position:absolute;left:1423px;top:24px;width:326px;height:5px;background:#4a9fe6;border-radius:5px 5px 0 0;filter:blur(1.3px);opacity:.9"></div>
<div class="" style="position:absolute;left:405px;top:8px;width:26px;height:18px;background:#c4d4f4;border-radius:8px;filter:blur(4px);opacity:.9"></div>
<div class="" style="position:absolute;left:410px;top:12px;width:12px;height:8px;background:#7d8fd8;border-radius:4px;filter:blur(3px);opacity:.8"></div>
<div class="" style="position:absolute;left:480px;top:14px;width:22px;height:12px;background:#f0e0e8;border-radius:4px;filter:blur(3px);opacity:.8"></div>
<div class="" style="position:absolute;left:478px;top:8px;width:24px;height:9px;background:#e0304a;border-radius:4px;filter:blur(2.5px);opacity:.9"></div>
<div class="" style="position:absolute;left:1782px;top:8px;width:20px;height:20px;background:#f4f4f8;border-radius:9px;filter:blur(4px)"></div>
<div class="" style="position:absolute;left:1776px;top:10px;width:12px;height:14px;background:#f0a070;border-radius:6px;filter:blur(3px)"></div>
<div class="" style="position:absolute;left:95px;top:18px;width:40px;height:10px;background:#6a74c8;border-radius:5px;filter:blur(5px);opacity:.6"></div>
<div class="" style="position:absolute;left:1811px;top:0px;width:110px;height:20px;border:1px solid #5c5e68;border-top:none;border-radius:0 0 5px 5px;background:linear-gradient(#c3c6d0,#a9adba 45%,#999daa 50%,#a5a9b6);box-shadow:inset 0 0 0 1px rgba(255,255,255,.45)"></div>
<div class="" style="position:absolute;left:1838px;top:0px;width:1px;height:20px;background:#5c5e68"></div>
<div class="" style="position:absolute;left:1866px;top:0px;width:1px;height:20px;background:#5c5e68"></div>
<svg class="abs" style="left:1812px;top:1px" width="98" height="20" viewBox="0 0 98 20"><rect x="8.500" y="9.500" width="11" height="3" fill="#fff" stroke="#333"/><rect x="36.500" y="4.500" width="10" height="8" fill="#fff" stroke="#333"/><rect x="39.500" y="7.500" width="4" height="2" fill="#a9adba" stroke="#333"/><path d="M70 4 L73.500 4 L76 7 L78.500 4 L82 4 L78 8.500 L82 13 L78.500 13 L76 10 L73.500 13 L70 13 L74 8.500 Z" fill="#fff" stroke="#333" stroke-width="1"/></svg>
<div class="" style="position:absolute;left:11px;top:30px;width:1899px;height:23px;background:linear-gradient(#ffffff 0%,#fbfcfe 30%,#e3e8f6 55%,#dbe1f2 100%)"></div>
<div class="" style="position:absolute;left:11px;top:53px;width:1899px;height:1px;background:#b8bcc8"></div>
<div class="t ss" style="left:20px;top:34px;color:#a0a0a8;font-size:12.5px" id="mn20"><u>F</u>ile</div>
<div class="t ss" style="left:54px;top:34px;color:#a0a0a8;font-size:12.5px" id="mn54"><u>E</u>dit</div>
<div class="t ss" style="left:92px;top:34px;color:#a0a0a8;font-size:12.5px" id="mn92"><u>V</u>iew</div>
<div class="t ss" style="left:135px;top:34px;color:#a0a0a8;font-size:12.5px" id="mn135">Se<u>l</u>ection</div>
<div class="t ss" style="left:203px;top:34px;color:#a0a0a8;font-size:12.5px" id="mn203"><u>A</u>nalysis</div>
<div class="t ss" style="left:265px;top:34px;color:#a0a0a8;font-size:12.5px" id="mn265"><u>D</u>FM</div>
<div class="t ss" style="left:308px;top:34px;color:#a0a0a8;font-size:12.5px" id="mn308"><u>A</u>ctions</div>
<div class="t ss" style="left:366px;top:34px;color:#a0a0a8;font-size:12.5px" id="mn366"><u>O</u>ptions</div>
<div class="t ss" style="left:428px;top:34px;color:#a0a0a8;font-size:12.5px" id="mn428"><u>C</u>omponents</div>
<div class="t ss" style="left:517px;top:34px;color:#a0a0a8;font-size:12.5px" id="mn517"><u>S</u>tep</div>
<div class="t ss" style="left:559px;top:34px;color:#a0a0a8;font-size:12.5px" id="mn559"><u>W</u>indows</div>
<div class="t ss" style="left:628px;top:34px;color:#a0a0a8;font-size:12.5px" id="mn628"><u>H</u>elp</div>
<div class="" style="position:absolute;left:11px;top:54px;width:1899px;height:1px;background:#fff"></div>
<div class="" style="position:absolute;left:11px;top:83px;width:1899px;height:1px;background:#c4c4c4"></div>
<div class="" style="position:absolute;left:11px;top:84px;width:1899px;height:1px;background:#fafafa"></div>
<div class="" style="position:absolute;left:11px;top:112px;width:1899px;height:1px;background:#c4c4c4"></div>
<div class="" style="position:absolute;left:11px;top:113px;width:1899px;height:1px;background:#fafafa"></div>
<svg class="abs" style="left:0;top:54px" width="1910" height="62" viewBox="0 54 1910 62"><rect x="14" y="58" width="2" height="2" fill="#c8c8c8"/><rect x="15" y="59" width="1" height="1" fill="#a8a8a8"/><rect x="14" y="61" width="2" height="2" fill="#c8c8c8"/><rect x="15" y="62" width="1" height="1" fill="#a8a8a8"/><rect x="14" y="64" width="2" height="2" fill="#c8c8c8"/><rect x="15" y="65" width="1" height="1" fill="#a8a8a8"/><rect x="14" y="67" width="2" height="2" fill="#c8c8c8"/><rect x="15" y="68" width="1" height="1" fill="#a8a8a8"/><rect x="14" y="70" width="2" height="2" fill="#c8c8c8"/><rect x="15" y="71" width="1" height="1" fill="#a8a8a8"/><rect x="14" y="73" width="2" height="2" fill="#c8c8c8"/><rect x="15" y="74" width="1" height="1" fill="#a8a8a8"/><rect x="14" y="76" width="2" height="2" fill="#c8c8c8"/><rect x="15" y="77" width="1" height="1" fill="#a8a8a8"/><rect x="111" y="58" width="2" height="2" fill="#c8c8c8"/><rect x="112" y="59" width="1" height="1" fill="#a8a8a8"/><rect x="111" y="61" width="2" height="2" fill="#c8c8c8"/><rect x="112" y="62" width="1" height="1" fill="#a8a8a8"/><rect x="111" y="64" width="2" height="2" fill="#c8c8c8"/><rect x="112" y="65" width="1" height="1" fill="#a8a8a8"/><rect x="111" y="67" width="2" height="2" fill="#c8c8c8"/><rect x="112" y="68" width="1" height="1" fill="#a8a8a8"/><rect x="111" y="70" width="2" height="2" fill="#c8c8c8"/><rect x="112" y="71" width="1" height="1" fill="#a8a8a8"/><rect x="111" y="73" width="2" height="2" fill="#c8c8c8"/><rect x="112" y="74" width="1" height="1" fill="#a8a8a8"/><rect x="111" y="76" width="2" height="2" fill="#c8c8c8"/><rect x="112" y="77" width="1" height="1" fill="#a8a8a8"/><rect x="179" y="58" width="2" height="2" fill="#c8c8c8"/><rect x="180" y="59" width="1" height="1" fill="#a8a8a8"/><rect x="179" y="61" width="2" height="2" fill="#c8c8c8"/><rect x="180" y="62" width="1" height="1" fill="#a8a8a8"/><rect x="179" y="64" width="2" height="2" fill="#c8c8c8"/><rect x="180" y="65" width="1" height="1" fill="#a8a8a8"/><rect x="179" y="67" width="2" height="2" fill="#c8c8c8"/><rect x="180" y="68" width="1" height="1" fill="#a8a8a8"/><rect x="179" y="70" width="2" height="2" fill="#c8c8c8"/><rect x="180" y="71" width="1" height="1" fill="#a8a8a8"/><rect x="179" y="73" width="2" height="2" fill="#c8c8c8"/><rect x="180" y="74" width="1" height="1" fill="#a8a8a8"/><rect x="179" y="76" width="2" height="2" fill="#c8c8c8"/><rect x="180" y="77" width="1" height="1" fill="#a8a8a8"/><rect x="334" y="58" width="2" height="2" fill="#c8c8c8"/><rect x="335" y="59" width="1" height="1" fill="#a8a8a8"/><rect x="334" y="61" width="2" height="2" fill="#c8c8c8"/><rect x="335" y="62" width="1" height="1" fill="#a8a8a8"/><rect x="334" y="64" width="2" height="2" fill="#c8c8c8"/><rect x="335" y="65" width="1" height="1" fill="#a8a8a8"/><rect x="334" y="67" width="2" height="2" fill="#c8c8c8"/><rect x="335" y="68" width="1" height="1" fill="#a8a8a8"/><rect x="334" y="70" width="2" height="2" fill="#c8c8c8"/><rect x="335" y="71" width="1" height="1" fill="#a8a8a8"/><rect x="334" y="73" width="2" height="2" fill="#c8c8c8"/><rect x="335" y="74" width="1" height="1" fill="#a8a8a8"/><rect x="334" y="76" width="2" height="2" fill="#c8c8c8"/><rect x="335" y="77" width="1" height="1" fill="#a8a8a8"/><rect x="489" y="58" width="2" height="2" fill="#c8c8c8"/><rect x="490" y="59" width="1" height="1" fill="#a8a8a8"/><rect x="489" y="61" width="2" height="2" fill="#c8c8c8"/><rect x="490" y="62" width="1" height="1" fill="#a8a8a8"/><rect x="489" y="64" width="2" height="2" fill="#c8c8c8"/><rect x="490" y="65" width="1" height="1" fill="#a8a8a8"/><rect x="489" y="67" width="2" height="2" fill="#c8c8c8"/><rect x="490" y="68" width="1" height="1" fill="#a8a8a8"/><rect x="489" y="70" width="2" height="2" fill="#c8c8c8"/><rect x="490" y="71" width="1" height="1" fill="#a8a8a8"/><rect x="489" y="73" width="2" height="2" fill="#c8c8c8"/><rect x="490" y="74" width="1" height="1" fill="#a8a8a8"/><rect x="489" y="76" width="2" height="2" fill="#c8c8c8"/><rect x="490" y="77" width="1" height="1" fill="#a8a8a8"/><rect x="717" y="58" width="2" height="2" fill="#c8c8c8"/><rect x="718" y="59" width="1" height="1" fill="#a8a8a8"/><rect x="717" y="61" width="2" height="2" fill="#c8c8c8"/><rect x="718" y="62" width="1" height="1" fill="#a8a8a8"/><rect x="717" y="64" width="2" height="2" fill="#c8c8c8"/><rect x="718" y="65" width="1" height="1" fill="#a8a8a8"/><rect x="717" y="67" width="2" height="2" fill="#c8c8c8"/><rect x="718" y="68" width="1" height="1" fill="#a8a8a8"/><rect x="717" y="70" width="2" height="2" fill="#c8c8c8"/><rect x="718" y="71" width="1" height="1" fill="#a8a8a8"/><rect x="717" y="73" width="2" height="2" fill="#c8c8c8"/><rect x="718" y="74" width="1" height="1" fill="#a8a8a8"/><rect x="717" y="76" width="2" height="2" fill="#c8c8c8"/><rect x="718" y="77" width="1" height="1" fill="#a8a8a8"/><rect x="107" y="56" width="1" height="27" fill="#c0c0c0"/><rect x="108" y="56" width="1" height="27" fill="#fdfdfd"/><rect x="175" y="56" width="1" height="27" fill="#c0c0c0"/><rect x="176" y="56" width="1" height="27" fill="#fdfdfd"/><rect x="329" y="56" width="1" height="27" fill="#c0c0c0"/><rect x="330" y="56" width="1" height="27" fill="#fdfdfd"/><rect x="485" y="56" width="1" height="27" fill="#c0c0c0"/><rect x="486" y="56" width="1" height="27" fill="#fdfdfd"/><rect x="713" y="56" width="1" height="27" fill="#c0c0c0"/><rect x="714" y="56" width="1" height="27" fill="#fdfdfd"/><rect x="14" y="88" width="2" height="2" fill="#c8c8c8"/><rect x="15" y="89" width="1" height="1" fill="#a8a8a8"/><rect x="14" y="91" width="2" height="2" fill="#c8c8c8"/><rect x="15" y="92" width="1" height="1" fill="#a8a8a8"/><rect x="14" y="94" width="2" height="2" fill="#c8c8c8"/><rect x="15" y="95" width="1" height="1" fill="#a8a8a8"/><rect x="14" y="97" width="2" height="2" fill="#c8c8c8"/><rect x="15" y="98" width="1" height="1" fill="#a8a8a8"/><rect x="14" y="100" width="2" height="2" fill="#c8c8c8"/><rect x="15" y="101" width="1" height="1" fill="#a8a8a8"/><rect x="14" y="103" width="2" height="2" fill="#c8c8c8"/><rect x="15" y="104" width="1" height="1" fill="#a8a8a8"/><rect x="14" y="106" width="2" height="2" fill="#c8c8c8"/><rect x="15" y="107" width="1" height="1" fill="#a8a8a8"/><rect x="134" y="88" width="2" height="2" fill="#c8c8c8"/><rect x="135" y="89" width="1" height="1" fill="#a8a8a8"/><rect x="134" y="91" width="2" height="2" fill="#c8c8c8"/><rect x="135" y="92" width="1" height="1" fill="#a8a8a8"/><rect x="134" y="94" width="2" height="2" fill="#c8c8c8"/><rect x="135" y="95" width="1" height="1" fill="#a8a8a8"/><rect x="134" y="97" width="2" height="2" fill="#c8c8c8"/><rect x="135" y="98" width="1" height="1" fill="#a8a8a8"/><rect x="134" y="100" width="2" height="2" fill="#c8c8c8"/><rect x="135" y="101" width="1" height="1" fill="#a8a8a8"/><rect x="134" y="103" width="2" height="2" fill="#c8c8c8"/><rect x="135" y="104" width="1" height="1" fill="#a8a8a8"/><rect x="134" y="106" width="2" height="2" fill="#c8c8c8"/><rect x="135" y="107" width="1" height="1" fill="#a8a8a8"/><rect x="238" y="88" width="2" height="2" fill="#c8c8c8"/><rect x="239" y="89" width="1" height="1" fill="#a8a8a8"/><rect x="238" y="91" width="2" height="2" fill="#c8c8c8"/><rect x="239" y="92" width="1" height="1" fill="#a8a8a8"/><rect x="238" y="94" width="2" height="2" fill="#c8c8c8"/><rect x="239" y="95" width="1" height="1" fill="#a8a8a8"/><rect x="238" y="97" width="2" height="2" fill="#c8c8c8"/><rect x="239" y="98" width="1" height="1" fill="#a8a8a8"/><rect x="238" y="100" width="2" height="2" fill="#c8c8c8"/><rect x="239" y="101" width="1" height="1" fill="#a8a8a8"/><rect x="238" y="103" width="2" height="2" fill="#c8c8c8"/><rect x="239" y="104" width="1" height="1" fill="#a8a8a8"/><rect x="238" y="106" width="2" height="2" fill="#c8c8c8"/><rect x="239" y="107" width="1" height="1" fill="#a8a8a8"/><rect x="450" y="88" width="2" height="2" fill="#c8c8c8"/><rect x="451" y="89" width="1" height="1" fill="#a8a8a8"/><rect x="450" y="91" width="2" height="2" fill="#c8c8c8"/><rect x="451" y="92" width="1" height="1" fill="#a8a8a8"/><rect x="450" y="94" width="2" height="2" fill="#c8c8c8"/><rect x="451" y="95" width="1" height="1" fill="#a8a8a8"/><rect x="450" y="97" width="2" height="2" fill="#c8c8c8"/><rect x="451" y="98" width="1" height="1" fill="#a8a8a8"/><rect x="450" y="100" width="2" height="2" fill="#c8c8c8"/><rect x="451" y="101" width="1" height="1" fill="#a8a8a8"/><rect x="450" y="103" width="2" height="2" fill="#c8c8c8"/><rect x="451" y="104" width="1" height="1" fill="#a8a8a8"/><rect x="450" y="106" width="2" height="2" fill="#c8c8c8"/><rect x="451" y="107" width="1" height="1" fill="#a8a8a8"/><rect x="501" y="88" width="2" height="2" fill="#c8c8c8"/><rect x="502" y="89" width="1" height="1" fill="#a8a8a8"/><rect x="501" y="91" width="2" height="2" fill="#c8c8c8"/><rect x="502" y="92" width="1" height="1" fill="#a8a8a8"/><rect x="501" y="94" width="2" height="2" fill="#c8c8c8"/><rect x="502" y="95" width="1" height="1" fill="#a8a8a8"/><rect x="501" y="97" width="2" height="2" fill="#c8c8c8"/><rect x="502" y="98" width="1" height="1" fill="#a8a8a8"/><rect x="501" y="100" width="2" height="2" fill="#c8c8c8"/><rect x="502" y="101" width="1" height="1" fill="#a8a8a8"/><rect x="501" y="103" width="2" height="2" fill="#c8c8c8"/><rect x="502" y="104" width="1" height="1" fill="#a8a8a8"/><rect x="501" y="106" width="2" height="2" fill="#c8c8c8"/><rect x="502" y="107" width="1" height="1" fill="#a8a8a8"/><rect x="130" y="85" width="1" height="27" fill="#c0c0c0"/><rect x="131" y="85" width="1" height="27" fill="#fdfdfd"/><rect x="233" y="85" width="1" height="27" fill="#c0c0c0"/><rect x="234" y="85" width="1" height="27" fill="#fdfdfd"/><rect x="446" y="85" width="1" height="27" fill="#c0c0c0"/><rect x="447" y="85" width="1" height="27" fill="#fdfdfd"/><rect x="497" y="85" width="1" height="27" fill="#c0c0c0"/><rect x="498" y="85" width="1" height="27" fill="#fdfdfd"/><g transform="translate(27,62)"><path d="M0.500 0.500 H13.500 V13.500 H1.500 L0.500 12.500 Z" fill="#807000" stroke="#000"/><rect x="2.500" y="1" width="9" height="6" fill="#fff"/><rect x="3" y="9" width="8" height="4.500" fill="#000"/><rect x="8" y="10" width="2" height="3" fill="#d8d8d8"/><rect x="12" y="1.500" width="1" height="1.500" fill="#ddd"/></g><g transform="translate(54,63)"><path d="M4 6 L6 0.500 L13 0.500 L12 6 Z" fill="#fff" stroke="#000"/><path d="M6.500 2.500 H11.500 M6 4.300 H11" stroke="#555" stroke-width=".8"/><path d="M1 8 Q1 6 3.500 6 H13 Q15.500 6 15.500 8 V11.500 Q15.500 13.500 13 13.500 H3.500 Q1 13.500 1 11.500 Z" fill="#d8d8d8" stroke="#000"/><path d="M1.500 9.500 H15" stroke="#000" stroke-width=".8"/><rect x="2.500" y="10.500" width="10" height="2.300" fill="#888"/><rect x="7" y="10.800" width="3.500" height="1.400" fill="#ffee00"/><path d="M13.500 7 L15 9 M12.500 7 L15 10.500" stroke="#555" stroke-width=".6"/></g><g transform="translate(83,64)"><path d="M4 6 L6 0.500 L13 0.500 L12 6 Z" fill="#fff" stroke="#000"/><path d="M6.500 2.500 H11.500 M6 4.300 H11" stroke="#555" stroke-width=".8"/><path d="M1 8 Q1 6 3.500 6 H13 Q15.500 6 15.500 8 V11.500 Q15.500 13.500 13 13.500 H3.500 Q1 13.500 1 11.500 Z" fill="#d8d8d8" stroke="#000"/><path d="M1.500 9.500 H15" stroke="#000" stroke-width=".8"/><rect x="2.500" y="10.500" width="10" height="2.300" fill="#888"/><rect x="7" y="10.800" width="3.500" height="1.400" fill="#ffee00"/><path d="M13.500 7 L15 9 M12.500 7 L15 10.500" stroke="#555" stroke-width=".6"/></g><text x="80.500" y="63.300" font-family="Liberation Sans,sans-serif" font-weight="bold" font-size="8.500" fill="#000" textLength="12" lengthAdjust="spacingAndGlyphs">1:1</text><path d="M127 66.500 Q133.500 62 136 67.500 Q137 71 133.500 73.500" fill="none" stroke="#0a0a90" stroke-width="1.800"/><path d="M124.500 65 L130.500 64.500 L128.500 70.500 Z" fill="#0a0a90"/><path d="M153 63.500 L165 75 M165 63.500 L153 75.500" stroke="#000" stroke-width="2.200" fill="none"/><rect x="185.500" y="55.500" width="28" height="27" fill="#f6f6f6" stroke="#d0d0d0"/><path d="M185.500 82.500 V55.500 H213.500" fill="none" stroke="#b8b8b8"/><rect x="214.500" y="55.500" width="28" height="27" fill="#f6f6f6" stroke="#d0d0d0"/><path d="M214.500 82.500 V55.500 H242.500" fill="none" stroke="#b8b8b8"/><rect x="191.500" y="59.500" width="17" height="21" fill="#ffc840" stroke="#000"/><rect x="192.500" y="60.0" width="15" height="1.900" fill="#008868"/><rect x="192.500" y="63.7" width="15" height="1.900" fill="#008868"/><rect x="192.500" y="67.4" width="15" height="1.900" fill="#008868"/><rect x="192.500" y="71.1" width="15" height="1.900" fill="#008868"/><rect x="192.500" y="74.8" width="15" height="1.900" fill="#008868"/><rect x="192.500" y="78.5" width="15" height="1.900" fill="#008868"/><rect x="219.500" y="59.500" width="17" height="21" fill="#fff" stroke="#000"/><path d="M223.500 62.500 H233.500 V69 H230.500 V77.500 H222.500 V70 H224.500 V66 H223.500 Z" fill="none" stroke="#0000ff" stroke-width="1.200"/><rect x="226" y="71" width="6" height="6" fill="#ff0000"/><rect x="228.500" y="75" width="3.500" height="2.500" fill="#ff0000"/><g transform="translate(249,58) scale(1.0)"><path d="M3.500 0.500 H6.500 V3 L8 6 H10 L11.500 3 V0.500 H14.500 V3 L17.500 12 V17.500 H11 V11 H7 V17.500 H0.500 V12 L3.500 3 Z" fill="#000"/><path d="M4.500 2 H5.500 M12.500 2 H13.500 M2.500 14 H5 M13 14 H15.500 M3 10 L4.500 5 M14 5 L15 9" stroke="#fff" stroke-width=".9"/></g><path d="M247 79.500 H268 M249 77.500 H266" stroke="#000" stroke-width="1"/><path d="M251 77 V80 M253.500 77 V80 M256 77 V80 M258.500 77 V80 M261 77 V80 M263.500 77 V80" stroke="#000" stroke-width=".8"/><rect x="275.500" y="58.500" width="21" height="21" fill="#000" stroke="#000"/><rect x="276.3" y="59.30" width="3.300" height="2.200" fill="#008868"/><rect x="280.4" y="59.30" width="3.300" height="2.200" fill="#0000e0"/><rect x="284.4" y="59.30" width="3.300" height="2.200" fill="#0000e0"/><rect x="288.4" y="59.30" width="3.300" height="2.200" fill="#0000e0"/><rect x="292.5" y="59.30" width="3.300" height="2.200" fill="#0000e0"/><rect x="276.3" y="62.20" width="3.300" height="2.200" fill="#008868"/><rect x="280.4" y="62.20" width="3.300" height="2.200" fill="#60e8e8"/><rect x="284.4" y="62.20" width="3.300" height="2.200" fill="#60e8e8"/><rect x="288.4" y="62.20" width="3.300" height="2.200" fill="#60e8e8"/><rect x="292.5" y="62.20" width="3.300" height="2.200" fill="#60e8e8"/><rect x="276.3" y="65.10" width="3.300" height="2.200" fill="#ffc840"/><rect x="280.4" y="65.10" width="3.300" height="2.200" fill="#60e8e8"/><rect x="284.4" y="65.10" width="3.300" height="2.200" fill="#60e8e8"/><rect x="288.4" y="65.10" width="3.300" height="2.200" fill="#60e8e8"/><rect x="292.5" y="65.10" width="3.300" height="2.200" fill="#60e8e8"/><rect x="276.3" y="68.00" width="3.300" height="2.200" fill="#ffc840"/><rect x="280.4" y="68.00" width="3.300" height="2.200" fill="#60e8e8"/><rect x="284.4" y="68.00" width="3.300" height="2.200" fill="#60e8e8"/><rect x="288.4" y="68.00" width="3.300" height="2.200" fill="#60e8e8"/><rect x="292.5" y="68.00" width="3.300" height="2.200" fill="#60e8e8"/><rect x="276.3" y="70.90" width="3.300" height="2.200" fill="#ffc840"/><rect x="280.4" y="70.90" width="3.300" height="2.200" fill="#60e8e8"/><rect x="284.4" y="70.90" width="3.300" height="2.200" fill="#60e8e8"/><rect x="288.4" y="70.90" width="3.300" height="2.200" fill="#60e8e8"/><rect x="292.5" y="70.90" width="3.300" height="2.200" fill="#60e8e8"/><rect x="276.3" y="73.80" width="3.300" height="2.200" fill="#008868"/><rect x="280.4" y="73.80" width="3.300" height="2.200" fill="#60e8e8"/><rect x="284.4" y="73.80" width="3.300" height="2.200" fill="#60e8e8"/><rect x="288.4" y="73.80" width="3.300" height="2.200" fill="#60e8e8"/><rect x="292.5" y="73.80" width="3.300" height="2.200" fill="#60e8e8"/><rect x="276.3" y="76.70" width="3.300" height="2.200" fill="#008868"/><rect x="280.4" y="76.70" width="3.300" height="2.200" fill="#60e8e8"/><rect x="284.4" y="76.70" width="3.300" height="2.200" fill="#60e8e8"/><rect x="288.4" y="76.70" width="3.300" height="2.200" fill="#60e8e8"/><rect x="292.5" y="76.70" width="3.300" height="2.200" fill="#60e8e8"/><path d="M308.500 67.500 Q314 59.500 320 65" fill="none" stroke="#0a0a90" stroke-width="2"/><path d="M317 62 L323 69 L316 68.500 Z" fill="#0a0a90"/><path d="M321.500 70.500 Q316 78 310 73" fill="none" stroke="#0a0a90" stroke-width="2"/><path d="M313 76 L307 68.500 L314 69.500 Z" fill="#0a0a90"/><path d="M311 66 Q314.500 63 318 65" fill="none" stroke="#4060ff" stroke-width=".8"/><rect x="343.500" y="58.500" width="21" height="21" fill="#fff" stroke="#e87820" stroke-width="1.200"/><rect x="344" y="69" width="20" height="2" fill="#c89020"/><rect x="344" y="71" width="20" height="8" fill="#106010"/><path d="M344 73.500 H364 M344 76 H364 M350.500 71 V79 M357.500 71 V79" stroke="#083808" stroke-width=".8"/><path d="M346 74.800 H349 M352 74.800 H356 M359 74.800 H363 M346 77.500 H349 M352 77.500 H356" stroke="#90d870" stroke-width=".9"/><path d="M346.500 60.500 L351.500 65.500 L349.500 67.500 L344.500 62.500 Z" fill="#6878e0" stroke="#000" stroke-width=".5"/><path d="M358 62.500 L362 59.500 L364 62.500 L360 66.500 Z" fill="#508090" stroke="#000" stroke-width=".5"/><rect x="372.500" y="58.500" width="21" height="21" fill="#fff" stroke="#e87820" stroke-width="1.200"/><rect x="374.500" y="60.500" width="5" height="7" fill="#e87820" stroke="#333" stroke-width=".8"/><path d="M375.500 62.500 H378.500 M375.500 64 H378.500 M375.500 65.500 H378.500" stroke="#333" stroke-width=".7"/><path d="M382 62 Q388 62 389 68" fill="none" stroke="#4060c0" stroke-width="1.600"/><path d="M386 67 L392 67 L389 71 Z" fill="#4060c0" stroke="#203080" stroke-width=".5"/><path d="M375 77.500 L380 73.500 L392 73.500 L387 77.500 Z" fill="#208020" stroke="#083808" stroke-width=".6"/><path d="M379 76 L385 75" stroke="#90d870" stroke-width=".7"/><path d="M402 59.500 H405.500 V74.500 H411.500 V62.500 H417 M417.500 68.500 V78 H421.500" fill="none" stroke="#000" stroke-width="1.300"/><circle cx="405.500" cy="69" r="1.700" fill="#ff0000"/><circle cx="405" cy="75" r="1.800" fill="#00d000"/><circle cx="418" cy="62.500" r="1.700" fill="#00d000"/><circle cx="417.500" cy="69" r="1.700" fill="#ff0000"/><path d="M432 77 L436 68 L440 77 Z" fill="#f8a020"/><path d="M440 77 L445 68 L450 77 Z" fill="#70e040"/><rect x="437" y="62" width="7" height="8" fill="#c060d0"/><path d="M439.500 59 V65 M435.500 66 V73 M445.500 66 V73" stroke="#e02020" stroke-width="2"/><path d="M437.500 64 L439.500 68 L441.500 64 Z M433.500 72 L435.500 76 L437.500 72 Z M443.500 72 L445.500 76 L447.500 72 Z" fill="#e02020"/><g transform="translate(459,61) scale(1.0)"><rect x="0" y="0" width="9" height="8.200" fill="#00ff00"/><rect x="0" y="8" width="6.300" height="8.300" fill="#00ff00"/><rect x="3.800" y="1.900" width="1.900" height="5" fill="#000"/><rect x="3.800" y="8.500" width="1.900" height="1" fill="#000"/><rect x="1.900" y="12.600" width="4.400" height="1.200" fill="#000"/><rect x="13" y="0" width="9" height="8.200" fill="#ff00ff"/><rect x="15.700" y="8" width="6.300" height="8.300" fill="#ff00ff"/><rect x="16.800" y="1.900" width="1.900" height="5" fill="#000"/><rect x="16.800" y="8.500" width="1.900" height="1" fill="#000"/><rect x="16.300" y="12.600" width="4.400" height="1.200" fill="#000"/></g><g stroke="#000" stroke-width="1" stroke-linejoin="miter"><path d="M508.500 63.500 L514 69.500 H510.500 V75.500 H506.500 V69.500 H503 Z" fill="#3aa0ff"/><path d="M537.500 74.500 L543 68.500 H539.500 V62.500 H535.500 V68.500 H532 Z" fill="#3aa0ff"/><path d="M561.500 68.500 L567.500 63.500 V66.500 H573.500 V70.500 H567.500 V73.500 Z" fill="#3aa0ff"/><path d="M602.500 68.500 L596.500 63.500 V66.500 H590.500 V70.500 H596.500 V73.500 Z" fill="#3aa0ff"/></g><path d="M508 65.500 L507.500 74.500 M536.500 63.500 V70 M564 68 H572 M591.500 68 H600" stroke="#b8e0ff" stroke-width="1"/><path d="M729.500 69.500 L736 62.500 L742.500 69.500" fill="none" stroke="#000" stroke-width="2.600"/><path d="M729.500 69.500 L736 62.500 L742.500 69.500" fill="none" stroke="#f8e020" stroke-width="1.200"/><rect x="739" y="61" width="1.800" height="4" fill="#e02020"/><path d="M731.500 69.500 V75.500 H740.500 V69.500 L736 64.500 Z" fill="#fff" stroke="#000" stroke-width="1"/><rect x="734.500" y="71" width="2.600" height="4.500" fill="#f08020" stroke="#000" stroke-width=".5"/><g transform="translate(763,66)"><circle cx="0" cy="0" r="4" fill="#fff" stroke="#000" stroke-width="1.400"/><path d="M-2.300 0 H2.300 M0 -2.300 V2.300" stroke="#000" stroke-width="1.200"/><path d="M3 3 L9 9.500" stroke="#000" stroke-width="2.600"/><path d="M4 3.300 L9.500 8.800" stroke="#999" stroke-width=".7"/></g><g transform="translate(792,66)"><circle cx="0" cy="0" r="4" fill="#fff" stroke="#000" stroke-width="1.400"/><path d="M-2.300 0 H2.300" stroke="#000" stroke-width="1.200"/><path d="M3 3 L9 9.500" stroke="#000" stroke-width="2.600"/><path d="M4 3.300 L9.500 8.800" stroke="#999" stroke-width=".7"/></g><path d="M815.500 65 Q820 64 820 69 Q820 73.500 815.500 73.500" fill="none" stroke="#000" stroke-width="2"/><path d="M811.500 65.500 L817 61.500 V68.500 Z" fill="#000"/><rect x="825" y="62.500" width="8" height="12" fill="none" stroke="#000" stroke-width="1.800"/><rect x="842" y="59" width="20.500" height="20" fill="none" stroke="#000" stroke-width="1.800"/><path d="M852 59 V74 M842 74 H862" stroke="#000" stroke-width="1.300"/><text x="853.500" y="72.500" font-family="Liberation Sans,sans-serif" font-size="5.500" font-weight="bold" fill="#000">XY</text><path d="M888 62.500 H876 V68.500 H888 V75.500 H873" fill="none" stroke="#000" stroke-width="1.600"/><path d="M888 62.500 L891.500 59.500 M889 62.500 L891.500 64.500 M873 75.500 L870.500 73 M873 75.500 L871 78.500" stroke="#000" stroke-width=".9"/><text x="899.500" y="75" font-family="Liberation Sans,sans-serif" font-size="16" font-weight="bold" fill="#000" textLength="21" lengthAdjust="spacingAndGlyphs">1:2</text><g transform="translate(930,60) scale(0.86)"><path d="M3.500 0.500 H6.500 V3 L8 6 H10 L11.500 3 V0.500 H14.500 V3 L17.500 12 V17.500 H11 V11 H7 V17.500 H0.500 V12 L3.500 3 Z" fill="#000"/><path d="M4.500 2 H5.500 M12.500 2 H13.500 M2.500 14 H5 M13 14 H15.500 M3 10 L4.500 5 M14 5 L15 9" stroke="#fff" stroke-width=".9"/></g><path d="M957 60.500 H973" stroke="#000" stroke-width="2.400"/><path d="M978 58.500 H974.500 Q972.500 60.500 974.500 62.500 H978" fill="none" stroke="#000" stroke-width="1.600"/><path d="M957 68.500 H961 M961 66.500 H978 V70 H961 Z" fill="#fff" stroke="#000" stroke-width="1.100"/><path d="M963 76 Q963 72.500 967 72.500 H973 Q976.500 74 976 77 Q974 79 966 78.500 Q963 78 963 76 Z" fill="#fff" stroke="#000" stroke-width="1.100"/><path d="M967 75 H969 M971 75.500 H973" stroke="#000" stroke-width="1.200"/><path d="M991.500 58 V80 M1002.500 58 V80 M986 63.500 H1008 M986 74.500 H1008" stroke="#0000ff" stroke-width="1.300"/><path d="M1017.500 67.500 L1026 58.500 H1034.500 L1031 62.500 L1033 62.500 L1028.500 67.500 Z M1017.500 79.500 L1026 70.500 H1034.500 L1031 74.500 L1033 74.500 L1028.500 79.500 Z" fill="#fff" stroke="#000" stroke-width="1.500"/><g fill="#e4e4e4" stroke="#a8a8a8" stroke-width="1"><rect x="1048.500" y="67.500" width="4" height="8"/><rect x="1058.500" y="67.500" width="4" height="8"/><path d="M1052.500 66 Q1052.500 62.500 1055.500 62.500 Q1058.500 62.500 1058.500 66" fill="none"/><path d="M1047 69.500 H1048.500 M1047 71.500 H1048.500 M1047 73.500 H1048.500 M1052.500 69.500 H1054 M1052.500 71.500 H1054 M1052.500 73.500 H1054 M1057 69.500 H1058.500 M1057 71.500 H1058.500 M1057 73.500 H1058.500 M1062.500 69.500 H1064 M1062.500 71.500 H1064 M1062.500 73.500 H1064" fill="none"/></g><rect x="23.500" y="88.500" width="21" height="21" fill="none" stroke="#000" stroke-width="1.200"/><rect x="28.500" y="93.500" width="11" height="11" fill="none" stroke="#000" stroke-width="1.200"/><circle cx="33.500" cy="99" r="3.600" fill="#000"/><path d="M30 99 H37 M33.500 95.500 V102.500 M31 96.500 L36 101.500 M36 96.500 L31 101.500" stroke="#000" stroke-width="1.400"/><path d="M37 96.500 L42.500 90.500" stroke="#000" stroke-width="1.400"/><path d="M39 90 H43.500 V94.500 Z" fill="#000"/><path d="M52.500 103 L64 88.500 M58.500 109 L74 98" stroke="#000" stroke-width="1"/><rect x="64" y="89" width="9.500" height="9.500" fill="#f0f0f0" stroke="#ff0000" stroke-width="1.800"/><rect x="52.800" y="103.800" width="5.500" height="5.500" fill="#fff" stroke="#0000ff" stroke-width="1.600"/><rect x="81.500" y="88.500" width="21" height="21" fill="none" stroke="#000" stroke-width="1.100" stroke-dasharray="2 1.500"/><circle cx="92" cy="99" r="8" fill="#000"/><rect x="146" y="91.500" width="15" height="3" fill="#2878a8"/><path d="M148 94.500 V97 M150 94.500 V96 M152 94.500 V97 M154 94.500 V96 M156 94.500 V97 M158 94.500 V96 M160 94.500 V97" stroke="#2878a8" stroke-width=".9"/><path d="M147.500 96 V100 M159.500 96 V100" stroke="#2878a8" stroke-width="1.300"/><path d="M145.500 98.500 L147.500 101.500 L149.500 98.500 Z M157.500 98.500 L159.500 101.500 L161.500 98.500 Z" fill="#2878a8"/><path d="M150 101.500 H157" stroke="#000" stroke-width="1" stroke-dasharray="1 1"/><circle cx="147.500" cy="104" r="1.800" fill="#40c020" stroke="#208010" stroke-width=".5"/><circle cx="159.500" cy="104" r="1.800" fill="#40c020" stroke="#208010" stroke-width=".5"/><circle cx="177.500" cy="94.500" r="2" fill="none" stroke="#ff0000" stroke-width="1" stroke-dasharray="1.200 .8"/><circle cx="177.500" cy="102.500" r="2" fill="none" stroke="#ff0000" stroke-width="1" stroke-dasharray="1.200 .8"/><rect x="188" y="91.500" width="3" height="14" fill="#1a5888"/><path d="M184 93.500 H188 M185.500 96 H188 M184 98.500 H188 M185.500 101 H188 M184 103.500 H188" stroke="#2878a8" stroke-width="1"/><path d="M181 94.500 L184.500 92 V97 Z M181 103.500 L184.500 101 V106 Z" fill="#2878a8"/><path d="M224.500 96.500 L227.500 99.500 L224.500 102.500 M228.500 96.500 L231.500 99.500 L228.500 102.500" fill="none" stroke="#000" stroke-width="1.300"/><path d="M488.500 96.500 L491.500 99.500 L488.500 102.500 M492.500 96.500 L495.500 99.500 L492.500 102.500" fill="none" stroke="#000" stroke-width="1.300"/><path d="M251.500 93.500 V105 H263" stroke="#0000ff" stroke-width="1.300" fill="none"/><circle cx="251.500" cy="93.500" r="3.500" fill="#0000ff"/><circle cx="251.500" cy="105" r="3.500" fill="#0000ff"/><circle cx="262.500" cy="105" r="3.500" fill="#0000ff"/><circle cx="262.500" cy="93.500" r="3.500" fill="#ff0000"/><circle cx="286" cy="99" r="4.500" fill="#0000ff"/><path d="M278.500 91.500 L293.500 106.500 M293.500 91.500 L278.500 106.500" stroke="#000" stroke-width="1.800"/><circle cx="309.500" cy="104.500" r="2.700" fill="#fff" stroke="#0000ff" stroke-width="1.600"/><circle cx="320.500" cy="93.500" r="3.500" fill="#ff0000"/><path d="M312.500 101.500 L316 98 M314 97.500 H316.500 V100" stroke="#000" stroke-width="1" fill="none"/><circle cx="338.500" cy="104.500" r="3.500" fill="#0000ff"/><circle cx="349.500" cy="93.500" r="3.500" fill="#ff0000"/><path d="M341.500 101.500 L345 98 M343 97.500 H345.500 V100" stroke="#000" stroke-width="1" fill="none"/><path d="M371 91.500 Q378.500 92 378.500 98.500 Q378.500 104.500 371.500 105.500" fill="none" stroke="#000" stroke-width="1.700"/><path d="M367.500 105 L372.500 101.500 L373 108 Z" fill="#000"/><path d="M391 94 H397 V105 M392 99 H397" stroke="#0000ff" stroke-width="1.800" fill="none"/><path d="M401.500 88 V110" stroke="#000" stroke-width="1.100"/><path d="M405 105.500 V94 H411.500 M405 99.500 H410.500" stroke="#ff0000" stroke-width="1.800" fill="none"/><rect x="431" y="88" width="11" height="11" fill="#ff0000"/><circle cx="436.500" cy="93.500" r="3.200" fill="#fff"/><rect x="420.500" y="99.500" width="10" height="10" fill="#fff" stroke="#0000ff" stroke-width="1.200"/><circle cx="425.500" cy="104.500" r="3.300" fill="#0000ff"/><path d="M431.500 103 L435 99.500 M433 99.500 H435.500 V102" stroke="#000" stroke-width=".9" fill="none"/><path d="M460 105 L477 88.500" stroke="#ff0000" stroke-width="1.900"/><path d="M461 107.500 H480" stroke="#0000ff" stroke-width="2.200"/><path d="M473 100 L476.500 103 M473 100 V102.500 M473 100 H475.500" stroke="#000" stroke-width=".8" fill="none"/><rect x="507.500" y="85.500" width="27" height="27" fill="#f8f8f8" stroke="#d8d8d8"/><path d="M507.500 112.500 V85.500 H534.500" fill="none" stroke="#b0b0b0"/><path transform="translate(517,92)" d="M0 0 L0 12 L3 9.500 L5.500 15 L8 14 L5.500 8.800 L9.500 8.800 Z" fill="#f8c040" stroke="#000" stroke-width="1"/><rect x="539.500" y="88.500" width="20" height="20" fill="none" stroke="#ff0000" stroke-width="1.800"/><path transform="translate(546,91)" d="M0 0 L0 12 L3 9.500 L5.500 15 L8 14 L5.500 8.800 L9.500 8.800 Z" fill="#f8c040" stroke="#000" stroke-width="1"/><path d="M573 88.500 H589 V108.500 H573 L568.500 104.500 V92.500 Z" fill="none" stroke="#ff0000" stroke-width="1.600"/><path transform="translate(575,91)" d="M0 0 L0 12 L3 9.500 L5.500 15 L8 14 L5.500 8.800 L9.500 8.800 Z" fill="#f8c040" stroke="#000" stroke-width="1"/><rect x="597.500" y="88.500" width="21" height="21" fill="#fff" stroke="#000" stroke-width="1"/><path d="M601.500 88.500 V98 M601.500 104.500 H606 V99 H609 V94 H613" stroke="#666" stroke-width="1" fill="none"/><circle cx="601.500" cy="100" r="1.600" fill="#e01010"/><circle cx="601" cy="105.500" r="1.800" fill="#20c020"/><circle cx="614" cy="93.500" r="1.700" fill="#20c020"/><path transform="translate(611,98)" d="M0 0 L0 8.500 L2 7 L3.800 10.500 L5.500 9.800 L3.800 6.300 L6.500 6.300 Z" fill="#000" stroke="#000" stroke-width="1"/><path transform="translate(632,91)" d="M0 0 L0 12 L3 9.500 L5.500 15 L8 14 L5.500 8.800 L9.500 8.800 Z" fill="#f8c040" stroke="#000" stroke-width="1"/><path d="M628 107.500 L645.500 90.500" stroke="#ff0000" stroke-width="1.400"/></svg>
<div class="" style="position:absolute;left:15px;top:121px;width:1px;height:702px;background:#828ca0"></div>
<div class="" style="position:absolute;left:215px;top:121px;width:1px;height:702px;background:#828ca0"></div>
<div class="" style="position:absolute;left:15px;top:822px;width:201px;height:1px;background:#828ca0"></div>
<div class="" style="position:absolute;left:16px;top:806px;width:199px;height:16px;background:linear-gradient(#e4e4e4,#efefef 30%,#ededed)"></div>
<div class="" style="position:absolute;left:34px;top:806px;width:19px;height:14px;border:1px solid #979797;border-radius:2px;background:linear-gradient(#f6f6f6,#e9e9e9 48%,#d6d6d6 52%,#cfcfcf);box-shadow:inset 0 0 0 1px #fbfbfb"></div>
<svg class="abs" style="left:16px;top:805px" width="199" height="18"><path d="M10 5 L5.500 9 L10 13 Z" fill="#3a3a3a"/><path d="M188.500 5 L193 9 L188.500 13 Z" fill="#3a3a3a"/></svg>
<svg class="abs" style="left:15px;top:827px" width="202" height="105" viewBox="15 827 202 105"><rect x="15" y="828" width="201" height="2" fill="#a0a0a0"/><rect x="15" y="828" width="2" height="102" fill="#a0a0a0"/><rect x="15" y="929" width="201" height="1" fill="#e8e8e8"/><rect x="15" y="930" width="201" height="1" fill="#fff"/><rect x="214" y="829" width="1" height="101" fill="#e0e0e0"/><rect x="215" y="828" width="1" height="103" fill="#fff"/><rect x="17" y="829" width="197" height="100" fill="#000"/><rect x="17" y="829" width="179" height="99.500" fill="#fa0000"/><path d="M62.700 829 V928.500 M168.500 829 V928.500" stroke="#b00838" stroke-width="1"/><polygon points="66,841 76.8,833.8 91.9,833.5 92.5,834.8 106.9,834.8 106.9,838.8 122.7,838.8 122.7,843.8 145.7,843.8 145.7,838.5 162.2,838.5 164.4,840.7 162.2,878.3 160.8,890.5 151.4,894.8 147.9,919.9 144.3,924 86.1,924 83.2,919.9 80.4,905.6 78.9,894.8 69.6,890.5 68.9,878.3 67.4,852.4" fill="none" stroke="#3c28ff" stroke-width="1.700" stroke-linejoin="round"/><path d="M60.500 855.600 H80.400 V849.600 L90.700 859.600 L80.400 869.700 V863.600 H60.500 Z" fill="none" stroke="#ffe8e8" stroke-width=".9"/><path d="M172 855.600 H151.900 V849.600 L141.400 859.600 L151.900 869.700 V863.600 H172 Z" fill="none" stroke="#38f038" stroke-width="1.100"/><path d="M60.300 895.200 H80.400 V889 L90.700 899.500 L80.400 910 V903.700 H60.300 Z" fill="#ffaac4"/><path d="M172 895.200 H151.900 V889 L141.400 899.500 L151.900 910 V903.700 H172 Z" fill="#00ff32"/><path d="M78.900 895.500 L80.400 905.600 L81.200 909" stroke="#50b040" stroke-width="1.200" fill="none"/><path d="M151.400 895 L149.500 908" stroke="#c8ffd0" stroke-width="1.200" fill="none"/><path d="M66.500 895.500 V903.500" stroke="#d8b8e8" stroke-width="1"/><path d="M168.500 895.500 V903.500" stroke="#60ff40" stroke-width="1"/><text x="91.6" y="864" font-family="Liberation Mono,monospace" font-size="11.500" fill="#4632ff" textLength="15.500" lengthAdjust="spacingAndGlyphs">FT</text><text x="172.3" y="864" font-family="Liberation Mono,monospace" font-size="11.500" fill="#4632ff" textLength="15.500" lengthAdjust="spacingAndGlyphs">FB</text><text x="91.6" y="904" font-family="Liberation Mono,monospace" font-size="11.500" fill="#4632ff" textLength="15.500" lengthAdjust="spacingAndGlyphs">ST</text><text x="172.3" y="904" font-family="Liberation Mono,monospace" font-size="11.500" fill="#4632ff" textLength="15.500" lengthAdjust="spacingAndGlyphs">SB</text></svg>
<div class="raised" style="position:absolute;left:15px;top:945px;width:26px;height:22px;background:#f0f0f0;"><svg width="26" height="25" viewBox="0 1 26 25" style="position:absolute;left:0;top:0"><rect x="5" y="4" width="16" height="3.500" fill="#000"/><path d="M6 7 V10 M8.500 7 V9 M11 7 V10 M13.500 7 V9 M16 7 V10 M18.500 7 V9 M20.500 7 V10" stroke="#000" stroke-width="1.200"/><ellipse cx="13" cy="16" rx="7.500" ry="3.300" fill="none" stroke="#000" stroke-width="1"/><rect x="3" y="14.500" width="5" height="3" fill="#f0f0f0"/><rect x="18" y="14.500" width="5" height="3" fill="#f0f0f0" transform="translate(0,0)"/><circle cx="13" cy="12.700" r="1.400" fill="#000"/><circle cx="13" cy="19.300" r="1.400" fill="#000"/></svg></div>
<div class="raised" style="position:absolute;left:49px;top:945px;width:23px;height:22px;background:#f0f0f0;"><svg width="24" height="25" viewBox="1 1 24 25" style="position:absolute;left:0;top:0"><rect x="2.500" y="2.500" width="19" height="19" fill="#f0f0f0" stroke="#000" stroke-width="1.300"/><path d="M5.500 5 V18.500 H19" fill="none" stroke="#000" stroke-width="1.100"/><path d="M8 7.500 L17 16.500 M8 7.500 V10.500 M8 7.500 H11 M17 16.500 V13.500 M17 16.500 H14" stroke="#000" stroke-width="1.100" fill="none"/></svg></div>
<div class="raised" style="position:absolute;left:76px;top:945px;width:23px;height:22px;background:#f0f0f0;"><svg width="24" height="25" viewBox="1 1 24 25" style="position:absolute;left:0;top:0"><rect x="2.500" y="2.500" width="19" height="19" fill="#f0f0f0" stroke="#000" stroke-width="1.300"/><path d="M5 18.500 H19 M5 18.500 L17.500 6" fill="none" stroke="#000" stroke-width="1.200"/><path d="M9 8 V11 H10.500" stroke="#000" stroke-width="1" fill="none"/><path d="M9.500 18 Q10.500 16.500 12 17" stroke="#000" stroke-width=".9" fill="none"/><text x="13" y="17.500" font-family="Liberation Sans,sans-serif" font-size="5" font-weight="bold" fill="#000">Dx</text></svg></div>
<div class="raised" style="position:absolute;left:107px;top:945px;width:26px;height:22px;background:#f0f0f0;"><svg width="26" height="25" viewBox="0 1 26 25" style="position:absolute;left:0;top:0"><path d="M5.500 8 L9.500 4 H20.500 V18.500 H5.500 Z" fill="#fff" stroke="#000" stroke-width="1.500"/><path d="M13 5 V18 M6 11.500 H20" stroke="#000" stroke-width="1.400"/></svg></div>
<div class="t m" style="left:139px;top:951px;">X Y :</div>
<div class="inp" style="position:absolute;left:185px;top:947px;width:126px;height:20px;"></div>
<div class="raised" style="position:absolute;left:317px;top:945px;width:24px;height:22px;background:#f0f0f0;"><svg width="24" height="22"><rect x="4.500" y="2.500" width="15" height="17" fill="#fff" stroke="#000"/><path d="M12 5 V14 M12 16 V18" stroke="#000" stroke-width="1.600"/></svg></div>
<div class="t m" style="left:348px;top:951px;">&lt;M1&gt; - Single feature selection ; &lt;M1&gt;&lt;M1&gt; Global selection</div>
<div class="" style="position:absolute;left:14px;top:979px;width:1896px;height:1px;background:#a0a0a0"></div>
<div class="" style="position:absolute;left:14px;top:980px;width:1896px;height:1px;background:#fff"></div>
<div class="" style="position:absolute;left:16px;top:982px;width:1890px;height:20px;border:1px solid #707070;border-radius:3px;background:linear-gradient(#f2f2f2 0%,#ebebeb 45%,#dddddd 50%,#cfcfcf 100%);box-shadow:inset 0 0 0 1px #fcfcfc"></div>
<div class="t m" style="left:891px;top:986px;">No features selected</div>
<div class="" style="position:absolute;left:14px;top:1005px;width:1896px;height:1px;background:#a0a0a0"></div>
<div class="" style="position:absolute;left:14px;top:1006px;width:1896px;height:1px;background:#fff"></div>
<div class="" style="position:absolute;left:17px;top:124px;width:471px;height:503px;border-radius:7px;background:linear-gradient(90deg,#dde1e8 0,#d4d8e0 200px,#3a3c40 207px,#2a2c2f 240px,#2e3033 100%);box-shadow:0 0 0 1px #45474e, 0 2px 9px 2px rgba(0,0,0,.4)"></div>
<div class="" style="position:absolute;left:18px;top:125px;width:469px;height:501px;border-radius:6px;box-shadow:inset 0 0 0 1px rgba(255,255,255,.6)"></div>
<div class="" style="position:absolute;left:44px;top:127px;width:171px;height:21px;background:linear-gradient(90deg,#a4c8b0,#9cc4ba 12%,#86c6b6 35%,#5ecbb2 60%,#55cdb4 100%);filter:blur(1.6px);border-radius:2px"></div>
<div class="" style="position:absolute;left:44px;top:126px;width:171px;height:3px;background:#6f9f98;filter:blur(1.5px);opacity:.7"></div>
<div class="" style="position:absolute;left:44px;top:146px;width:171px;height:3px;background:#6f9f98;filter:blur(1.5px);opacity:.6"></div>
<div class="" style="position:absolute;left:214px;top:126px;width:9px;height:24px;background:linear-gradient(90deg,#b8c8cc,#c4c8d0 50%,rgba(80,84,92,0));filter:blur(1px)"></div>
<div class="" style="position:absolute;left:19px;top:126px;width:24px;height:24px;background:#c8ccd6"></div>
<div class="" style="position:absolute;left:42px;top:128px;width:16px;height:20px;background:#98c868;filter:blur(3px);opacity:.9"></div>
<svg class="abs" style="left:24px;top:130px" width="16" height="16" viewBox="0 0 15 15"><rect x="0.500" y="0.500" width="14" height="14" fill="#c8902c" stroke="#4a3008"/><rect x="2" y="2" width="4.500" height="4.500" fill="#f0c040"/><rect x="8.500" y="2" width="4.500" height="4.500" fill="#f0c040"/><rect x="2" y="8.500" width="4.500" height="4.500" fill="#f0c040"/><rect x="8.500" y="8.500" width="4.500" height="4.500" fill="#f0c040"/><rect x="6.500" y="1" width="2" height="13" fill="#8a5a10"/><rect x="1" y="6.500" width="13" height="2" fill="#8a5a10"/><rect x="6" y="6" width="3" height="3" fill="#ffe070"/></svg>
<div class="t ss" style="left:45px;top:129px;font-size:12.95px">Assembly Merge</div>
<div class="" style="position:absolute;left:380px;top:124px;width:102px;height:19px;border:1px solid #8a8c90;border-top:none;border-radius:0 0 6px 6px;background:linear-gradient(#2c2e31,#26282b);box-shadow:inset 0 0 0 1px rgba(255,255,255,.35)"></div>
<div class="" style="position:absolute;left:408px;top:125px;width:1px;height:18px;background:#9a9c9f"></div>
<div class="" style="position:absolute;left:435px;top:125px;width:1px;height:18px;background:#9a9c9f"></div>
<svg class="abs" style="left:380px;top:124.500px" width="104" height="20" viewBox="380 124 104 20"><rect x="389.500" y="133.500" width="11" height="3.500" fill="#fff" stroke="#3a3f58" stroke-width=".8"/><rect x="417" y="129" width="10" height="8" fill="#fff" stroke="#3a3f58" stroke-width=".8"/><rect x="419.800" y="131.800" width="4.400" height="2.400" fill="#2c2e31" stroke="#3a3f58" stroke-width=".6"/><path d="M454.400 129 H457.800 L459.500 131.300 L461.200 129 H464.600 L461.400 133 L464.600 137 H461.200 L459.500 134.700 L457.800 137 H454.400 L457.600 133 Z" fill="#fff" stroke="#3a3f58" stroke-width=".7"/></svg>
<div class="" style="position:absolute;left:24px;top:153px;width:458px;height:468px;background:#f0f0f0;box-shadow:0 0 0 1px #4a4a4a, 0 0 0 2px rgba(255,255,255,.6)"></div>
<div class="t m" style="left:26px;top:156px;">Affecting BOM : bom</div>
<div class="btn" style="position:absolute;left:30px;top:180px;width:70px;height:19px;"><span class="m" style="display:block;text-align:center;padding-left:0px;line-height:19px;white-space:pre">BOM :</span></div>
<div class="inp" style="position:absolute;left:107px;top:180px;width:367px;height:19px;"><span class="m" style="position:absolute;left:2px;top:1px;line-height:19px;white-space:pre">bom</span></div>
<div class="t m" style="left:30px;top:214px;">1. BOM Merge</div>
<div class="t s" style="left:30px;top:233px;">Reset :</div>
<div class="t s" style="left:32px;top:256px;">VPL packages</div>
<div class="btn" style="position:absolute;left:106px;top:252px;width:43px;height:19px;"><span class="s" style="position:absolute;left:2px;top:1px;line-height:19px;white-space:pre">Yes</span><span class="arr" style="top:7px"></span></div>
<div class="t s" style="left:169px;top:256px;">Attributes</div>
<div class="btn" style="position:absolute;left:261px;top:252px;width:43px;height:19px;"><span class="s" style="position:absolute;left:2px;top:1px;line-height:19px;white-space:pre">Yes</span><span class="arr" style="top:7px"></span></div>
<div class="raised" style="position:absolute;left:382px;top:251px;width:32px;height:28px;background:#f0f0f0;"><svg width="32" height="28" style="position:absolute;left:0;top:0"><rect x="5" y="3" width="22" height="22" fill="#000"/><g fill="#fff"><path d="M21.500 5 L23.800 7.300 L21.500 9.600 L19.200 7.300 Z"/><path d="M19.500 9 L21 10.500 L17 14.500 H13.500 L12 13 L15 12 Z"/><path d="M14 13.500 L16.500 15 L10.500 21 L12 22.500 H9.500 L8 21 Z"/><path d="M17 14 L19.500 14.500 L20.500 17.500 L16.500 21.500 L18 22.500 H15 L14.500 21 L18 17.500 Z"/><path d="M20 11.500 L21.500 13.500 L24 14.500 L23.500 15.500 L20.500 14.500 L19 12.500 Z"/><path d="M9 7.500 L9.800 8.700 L11 9 L9.800 9.400 L9 10.600 L8.200 9.400 L7 9 L8.200 8.700 Z"/><path d="M13 7 L13.700 8.300 L15 8.600 L13.700 9 L13 10.200 L12.300 9 L11 8.600 L12.300 8.300 Z"/><path d="M10.500 11 L11.200 12.200 L12.500 12.600 L11.200 13 L10.500 14.200 L9.800 13 L8.500 12.600 L9.800 12.200 Z"/></g></svg></div>
<div class="raised" style="position:absolute;left:434px;top:251px;width:32px;height:28px;background:#55cdaf;border-color:#62d3b7 #000 #000 #62d3b7;box-shadow:none;"><svg width="32" height="28" style="position:absolute;left:0;top:0"><rect x="5.700" y="3.700" width="21" height="21" fill="none" stroke="#000" stroke-width="1.400"/><path d="M11 5.500 H16 L19.500 9 V14 L16 17.500 H11 L7.500 14 V9 Z" fill="none" stroke="#000" stroke-width="1.300"/><path d="M10.500 11.500 H16.500 M13.500 8.500 V14.500" stroke="#000" stroke-width="1.200"/><path d="M18 16 L24.500 22.500" stroke="#000" stroke-width="3"/></svg></div>
<div class="" style="position:absolute;left:472px;top:260px;width:6px;height:13px;background:#ffff00"></div>
<div class="t s" style="left:472px;top:260px;">!</div>
<div class="t s" style="left:30px;top:279px;">Attach attribute 'Ignore Graphically/Output' to comps of :</div>
<div class="t s" style="left:32px;top:302px;">.no_pop</div>
<div class="btn" style="position:absolute;left:124px;top:298px;width:43px;height:19px;"><span class="s" style="position:absolute;left:2px;top:1px;line-height:19px;white-space:pre">No</span><span class="arr" style="top:7px"></span></div>
<div class="t s" style="left:187px;top:302px;">not in BOM</div>
<div class="btn" style="position:absolute;left:261px;top:298px;width:43px;height:19px;"><span class="s" style="position:absolute;left:2px;top:1px;line-height:19px;white-space:pre">Yes</span><span class="arr" style="top:7px"></span></div>
<div class="t m" style="left:30px;top:334px;">2. Library Merge</div>
<div class="t s" style="left:32px;top:359px;">Orientation:</div>
<div class="btn" style="position:absolute;left:106px;top:355px;width:133px;height:19px;"><span class="s" style="position:absolute;left:2px;top:1px;line-height:19px;white-space:pre">Consistent CAD</span><span class="arr" style="top:7px"></span></div>
<div class="t s" style="left:32px;top:388px;">Dubious match:</div>
<div class="btn" style="position:absolute;left:118px;top:384px;width:127px;height:19px;"><span class="s" style="position:absolute;left:2px;top:1px;line-height:19px;white-space:pre">Perform Placement</span><span class="arr" style="top:7px"></span></div>
<div class="raised" style="position:absolute;left:376px;top:384px;width:32px;height:28px;background:#f0f0f0;"><svg width="32" height="28" style="position:absolute;left:0;top:0"><rect x="5" y="3" width="22" height="22" fill="#000"/><g fill="#fff"><path d="M21.500 5 L23.800 7.300 L21.500 9.600 L19.200 7.300 Z"/><path d="M19.500 9 L21 10.500 L17 14.500 H13.500 L12 13 L15 12 Z"/><path d="M14 13.500 L16.500 15 L10.500 21 L12 22.500 H9.500 L8 21 Z"/><path d="M17 14 L19.500 14.500 L20.500 17.500 L16.500 21.500 L18 22.500 H15 L14.500 21 L18 17.500 Z"/><path d="M20 11.500 L21.500 13.500 L24 14.500 L23.500 15.500 L20.500 14.500 L19 12.500 Z"/><path d="M9 7.500 L9.800 8.700 L11 9 L9.800 9.400 L9 10.600 L8.200 9.400 L7 9 L8.200 8.700 Z"/><path d="M13 7 L13.700 8.300 L15 8.600 L13.700 9 L13 10.200 L12.300 9 L11 8.600 L12.300 8.300 Z"/><path d="M10.500 11 L11.200 12.200 L12.500 12.600 L11.200 13 L10.500 14.200 L9.800 13 L8.500 12.600 L9.800 12.200 Z"/></g></svg></div>
<div class="raised" style="position:absolute;left:428px;top:384px;width:32px;height:28px;background:#55cdaf;border-color:#62d3b7 #000 #000 #62d3b7;box-shadow:none;"><svg width="32" height="28" style="position:absolute;left:0;top:0"><rect x="5.700" y="3.700" width="21" height="21" fill="none" stroke="#000" stroke-width="1.400"/><path d="M11 5.500 H16 L19.500 9 V14 L16 17.500 H11 L7.500 14 V9 Z" fill="none" stroke="#000" stroke-width="1.300"/><path d="M10.500 11.500 H16.500 M13.500 8.500 V14.500" stroke="#000" stroke-width="1.200"/><path d="M18 16 L24.500 22.500" stroke="#000" stroke-width="3"/></svg></div>
<div class="" style="position:absolute;left:466px;top:393px;width:12px;height:13px;background:#ff0000"></div>
<div class="t s" style="left:467px;top:393px;letter-spacing:-1px">!!</div>
<div class="btn" style="position:absolute;left:31px;top:413px;width:123px;height:20px;"><span class="m" style="display:block;text-align:left;padding-left:2px;line-height:20px;white-space:pre">Top Ref Layer   :</span></div>
<div class="inp" style="position:absolute;left:161px;top:413px;width:207px;height:20px;"><span class="m" style="position:absolute;left:2px;top:1px;line-height:20px;white-space:pre">lf80-ch-s10pj.gtl</span></div>
<div class="btn" style="position:absolute;left:31px;top:443px;width:123px;height:20px;"><span class="m" style="display:block;text-align:left;padding-left:2px;line-height:20px;white-space:pre">Bottom Ref Layer:</span></div>
<div class="inp" style="position:absolute;left:161px;top:443px;width:207px;height:20px;"><span class="m" style="position:absolute;left:2px;top:1px;line-height:20px;white-space:pre">lf80-ch-s10pj.gbl</span></div>
<div class="t m" style="left:30px;top:480px;">3. Board Merge</div>
<div class="t s" style="left:32px;top:506px;">Pads only mode</div>
<div class="btn" style="position:absolute;left:118px;top:502px;width:49px;height:19px;"><span class="s" style="position:absolute;left:2px;top:1px;line-height:19px;white-space:pre">No</span><span class="arr" style="top:7px"></span></div>
<div class="chk" style="position:absolute;left:178px;top:506px;width:11px;height:11px;"><svg width="11" height="11" viewBox="0 0 11 11" style="position:absolute;left:0;top:0"><path d="M2.2 5.2 L4.3 8.3 L8.8 1.8" fill="none" stroke="#3a4f9a" stroke-width="1.7"/></svg></div>
<div class="t m" style="left:197px;top:506px;">Keep original net data</div>
<div class="raised" style="position:absolute;left:376px;top:516px;width:32px;height:28px;background:#f0f0f0;"><svg width="32" height="28" style="position:absolute;left:0;top:0"><rect x="5" y="3" width="22" height="22" fill="#000"/><g fill="#fff"><path d="M21.500 5 L23.800 7.300 L21.500 9.600 L19.200 7.300 Z"/><path d="M19.500 9 L21 10.500 L17 14.500 H13.500 L12 13 L15 12 Z"/><path d="M14 13.500 L16.500 15 L10.500 21 L12 22.500 H9.500 L8 21 Z"/><path d="M17 14 L19.500 14.500 L20.500 17.500 L16.500 21.500 L18 22.500 H15 L14.500 21 L18 17.500 Z"/><path d="M20 11.500 L21.500 13.500 L24 14.500 L23.500 15.500 L20.500 14.500 L19 12.500 Z"/><path d="M9 7.500 L9.800 8.700 L11 9 L9.800 9.400 L9 10.600 L8.200 9.400 L7 9 L8.200 8.700 Z"/><path d="M13 7 L13.700 8.300 L15 8.600 L13.700 9 L13 10.200 L12.300 9 L11 8.600 L12.300 8.300 Z"/><path d="M10.500 11 L11.200 12.200 L12.500 12.600 L11.200 13 L10.500 14.200 L9.800 13 L8.500 12.600 L9.800 12.200 Z"/></g></svg></div>
<div class="raised" style="position:absolute;left:428px;top:516px;width:32px;height:28px;background:#55cdaf;border-color:#62d3b7 #000 #000 #62d3b7;box-shadow:none;"><svg width="32" height="28" style="position:absolute;left:0;top:0"><rect x="5.700" y="3.700" width="21" height="21" fill="none" stroke="#000" stroke-width="1.400"/><path d="M11 5.500 H16 L19.500 9 V14 L16 17.500 H11 L7.500 14 V9 Z" fill="none" stroke="#000" stroke-width="1.300"/><path d="M10.500 11.500 H16.500 M13.500 8.500 V14.500" stroke="#000" stroke-width="1.200"/><path d="M18 16 L24.500 22.500" stroke="#000" stroke-width="3"/></svg></div>
<div class="t s" style="left:32px;top:537px;">Break $NONE$ net to component pins</div>
<div class="btn" style="position:absolute;left:238px;top:533px;width:43px;height:19px;"><span class="s" style="position:absolute;left:2px;top:1px;line-height:19px;white-space:pre">No</span><span class="arr" style="top:7px"></span></div>
<div class="t s" style="left:32px;top:566px;">Calculate .comp_mount_type</div>
<div class="btn" style="position:absolute;left:190px;top:562px;width:67px;height:19px;"><span class="s" style="position:absolute;left:2px;top:1px;line-height:19px;white-space:pre">Yes</span><span class="arr" style="top:7px"></span></div>
<div class="btn" style="position:absolute;left:27px;top:594px;width:448px;height:20px;"><span class="m" style="display:block;text-align:center;padding-left:0px;line-height:20px;white-space:pre">Close</span></div>
<div class="" style="position:absolute;left:431px;top:518px;width:491px;height:418px;border-radius:7px;background:linear-gradient(90deg,#16181c 0,#1c1e22 60%,#2e3034 80%,#5c6064 97%,#686c70 100%);box-shadow:0 0 0 1px #5a5c62, 0 3px 12px 3px rgba(0,0,0,.5)"></div>
<div class="" style="position:absolute;left:431px;top:548px;width:491px;height:388px;border-radius:0 0 7px 7px;background:linear-gradient(#2c2f33 0,#2e3135 96%,#4a4e52 99%,#6a6e72 100%)"></div>
<div class="" style="position:absolute;left:917px;top:540px;width:5px;height:60px;background:linear-gradient(#646870,#2e3135)"></div>
<div class="" style="position:absolute;left:432px;top:519px;width:489px;height:416px;border-radius:6px;box-shadow:inset 0 0 0 1px rgba(255,255,255,.55)"></div>
<div class="" style="position:absolute;left:432px;top:519px;width:62px;height:28px;background:linear-gradient(90deg,#a8d4cc 0,#b4d8d0 30%,#dfe4e6 62%,rgba(120,120,124,0) 100%);border-radius:6px 0 0 0;filter:blur(.6px)"></div>
<div class="" style="position:absolute;left:432px;top:540px;width:6px;height:88px;background:linear-gradient(#dfe6ee,#e6eaf2)"></div>
<div class="" style="position:absolute;left:432px;top:519px;width:5px;height:24px;background:#9ed0c4;border-radius:6px 0 0 0"></div>
<div class="" style="position:absolute;left:466px;top:526px;width:10px;height:14px;background:#f0a0a8;filter:blur(3px)"></div>
<svg class="abs" style="left:438px;top:525px" width="16" height="16" viewBox="0 0 15 15"><rect x="0.500" y="0.500" width="14" height="14" fill="#c8902c" stroke="#4a3008"/><rect x="2" y="2" width="4.500" height="4.500" fill="#f0c040"/><rect x="8.500" y="2" width="4.500" height="4.500" fill="#f0c040"/><rect x="2" y="8.500" width="4.500" height="4.500" fill="#f0c040"/><rect x="8.500" y="8.500" width="4.500" height="4.500" fill="#f0c040"/><rect x="6.500" y="1" width="2" height="13" fill="#8a5a10"/><rect x="1" y="6.500" width="13" height="2" fill="#8a5a10"/><rect x="6" y="6" width="3" height="3" fill="#ffe070"/></svg>
<div class="t ss" style="left:459px;top:524px;font-size:13.05px;text-shadow:0 0 5px #fff,0 0 5px #fff,0 0 8px #fff">Board Merge Report (from 2024/09/25 10:54:52)</div>
<div class="" style="position:absolute;left:813px;top:518px;width:104px;height:19px;border:1px solid #d8d8d8;border-top:none;border-radius:0 0 6px 6px;background:linear-gradient(#b8babe 0,#9c9ea4 45%,#4e525a 52%,#686c76 100%);box-shadow:inset 0 0 0 1px rgba(255,255,255,.35)"></div>
<div class="" style="position:absolute;left:869px;top:519px;width:48px;height:18px;border-radius:0 0 5px 0;background:linear-gradient(#eaa998 0,#dc8470 45%,#b62e12 52%,#c64626 85%,#dc7050 100%);box-shadow:inset 0 0 0 1px rgba(255,255,255,.35)"></div>
<div class="" style="position:absolute;left:842px;top:519px;width:1px;height:18px;background:#e0e0e0"></div>
<div class="" style="position:absolute;left:868px;top:519px;width:1px;height:18px;background:#e8d8d8"></div>
<svg class="abs" style="left:813px;top:518px" width="106" height="20" viewBox="813 518 106 20"><rect x="823.800" y="528.800" width="10.400" height="3.400" fill="#fff" stroke="#353a55" stroke-width=".8"/><rect x="850.700" y="523.700" width="10.600" height="8.400" fill="#fff" stroke="#353a55" stroke-width=".8"/><rect x="853.600" y="526.600" width="4.800" height="2.600" fill="#70747e" stroke="#353a55" stroke-width=".6"/><path d="M888.200 523.600 H891.700 L893.500 526 L895.300 523.600 H898.800 L895.500 528 L898.800 532.400 H895.300 L893.500 530 L891.700 532.400 H888.200 L891.500 528 Z" fill="#fff" stroke="#4a2a2a" stroke-width=".8"/></svg>
<div class="" style="position:absolute;left:438px;top:548px;width:478px;height:380px;background:#f0f0f0;box-shadow:0 0 0 1px #6a6a6a, 0 0 0 2px rgba(255,255,255,.55)"></div>
<div class="t m" style="left:443px;top:559px;font-style:italic">Categories</div>
<div class="" style="position:absolute;left:442px;top:586px;width:469px;height:129px;background:#fff;border:1px solid #828790"></div>
<div class="" style="position:absolute;left:444px;top:588px;width:466px;height:17px;background:#3399ff;outline:1px dotted #c86400;outline-offset:-1px"></div>
<div class="t m" style="left:447px;top:590px;color:#fff">No features correspond to toeprint net point (14)</div>
<div class="btn" style="position:absolute;left:443px;top:722px;width:71px;height:20px;"><span class="m" style="display:block;text-align:center;padding-left:0px;line-height:20px;white-space:pre">First</span></div>
<div class="btn" style="position:absolute;left:520px;top:722px;width:71px;height:20px;"><span class="m" style="display:block;text-align:center;padding-left:0px;line-height:20px;white-space:pre">&lt;---</span></div>
<div class="btn" style="position:absolute;left:597px;top:722px;width:71px;height:20px;"><span class="m" style="display:block;text-align:center;padding-left:0px;line-height:20px;white-space:pre">---&gt;</span></div>
<div class="btn" style="position:absolute;left:674px;top:722px;width:71px;height:20px;"><span class="m" style="display:block;text-align:center;padding-left:0px;line-height:20px;white-space:pre">Last</span></div>
<div class="t m" style="left:752px;top:726px;">Index:</div>
<div class="inp" style="position:absolute;left:796px;top:722px;width:41px;height:20px;"></div>
<div class="btn" style="position:absolute;left:444px;top:755px;width:123px;height:21px;"><span class="m" style="position:absolute;left:2px;top:1px;line-height:21px;white-space:pre">Replace layers</span><span class="arr" style="top:8px"></span></div>
<div class="btn" style="position:absolute;left:575px;top:755px;width:88px;height:21px;"><span class="m" style="position:absolute;left:2px;top:1px;line-height:21px;white-space:pre">Auto Zoom</span><span class="arr" style="top:8px"></span></div>
<div class="t m" style="left:671px;top:759px;">Sv:</div>
<div class="btn" style="position:absolute;left:694px;top:755px;width:59px;height:21px;"><span class="m" style="position:absolute;left:2px;top:1px;line-height:21px;white-space:pre">   !!</span><span class="arr" style="top:8px"></span></div>
<div class="" style="position:absolute;left:701px;top:761px;width:12px;height:12px;background:#ff0000"></div>
<div class="chk" style="position:absolute;left:802px;top:760px;width:11px;height:11px;"><svg width="11" height="11" viewBox="0 0 11 11" style="position:absolute;left:0;top:0"><path d="M2.2 5.2 L4.3 8.3 L8.8 1.8" fill="none" stroke="#3a4f9a" stroke-width="1.7"/></svg></div>
<div class="t m" style="left:821px;top:759px;">Show All</div>
<div class="" style="position:absolute;left:444px;top:788px;width:464px;height:96px;background:#fff;border:1px solid #828790"></div>
<div class="btn" style="position:absolute;left:441px;top:899px;width:395px;height:20px;"><span class="m" style="display:block;text-align:center;padding-left:0px;line-height:20px;white-space:pre">Close</span></div>
<div class="raised" style="position:absolute;left:840px;top:894px;width:32px;height:28px;background:#f0f0f0;"><svg width="32" height="28" style="position:absolute;left:0;top:0"><g transform="translate(5,5.9) scale(1.0)"><rect x="0" y="0" width="9" height="8.200" fill="#00ff00"/><rect x="0" y="8" width="6.300" height="8.300" fill="#00ff00"/><rect x="3.800" y="1.900" width="1.900" height="5" fill="#000"/><rect x="3.800" y="8.500" width="1.900" height="1" fill="#000"/><rect x="1.900" y="12.600" width="4.400" height="1.200" fill="#000"/><rect x="13" y="0" width="9" height="8.200" fill="#ff00ff"/><rect x="15.700" y="8" width="6.300" height="8.300" fill="#ff00ff"/><rect x="16.800" y="1.900" width="1.900" height="5" fill="#000"/><rect x="16.800" y="8.500" width="1.900" height="1" fill="#000"/><rect x="16.300" y="12.600" width="4.400" height="1.200" fill="#000"/></g></svg></div>
<div class="raised" style="position:absolute;left:878px;top:894px;width:32px;height:28px;background:#f0f0f0;"><svg width="32" height="28" style="position:absolute;left:0;top:0"><rect x="5.600" y="3.800" width="21" height="21" fill="#fff" stroke="#000" stroke-width="1.300"/><path d="M9 6 H22.500 V19.500 L19.500 22.500 H9 Z" fill="#ffff00" stroke="#000" stroke-width="1.300"/><path d="M10.500 8.500 H20.500 M10.500 10.500 H16.500 M10.500 12.500 H19.500 M10.500 14.500 H16.500 M10.500 16.500 H20.500 M10.500 18.500 H16.500 M10.500 20.500 H18" stroke="#000" stroke-width="1.100"/><path d="M19.500 22.500 V19.500 H22.500" fill="#fff" stroke="#000" stroke-width=".8"/></svg></div>
</body></html>
